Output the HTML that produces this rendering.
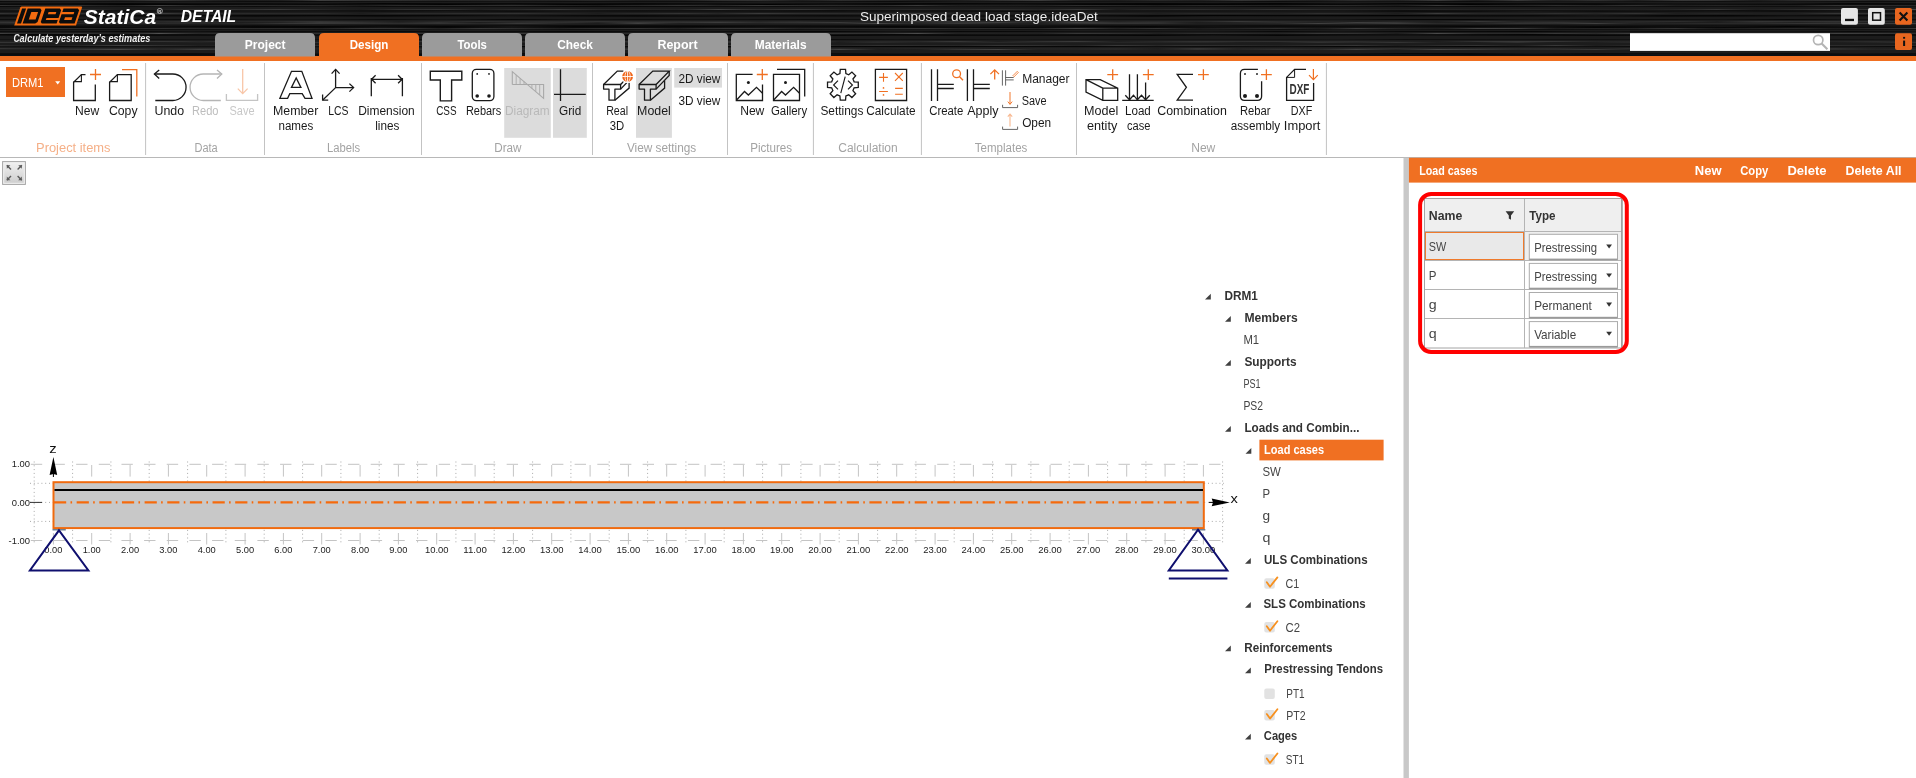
<!DOCTYPE html>
<html><head><meta charset="utf-8"><title>IDEA StatiCa Detail</title>
<style>
html,body{margin:0;padding:0;background:#ffffff;overflow:hidden;}
body{width:1916px;height:778px;position:relative;font-family:"Liberation Sans",sans-serif;}
svg{position:absolute;left:0;top:0;display:block;will-change:transform;}
</style></head><body>
<svg width="1916" height="778" viewBox="0 0 1916 778" shape-rendering="geometricPrecision">
<rect x="0" y="0" width="1916" height="56" fill="#1c1c1c"/>
<defs>
<linearGradient id="st0" x1="0" x2="1" y1="0" y2="0">
<stop offset="0.000" stop-color="rgb(66,66,66)" stop-opacity="0.74"/>
<stop offset="0.021" stop-color="rgb(83,83,83)" stop-opacity="0.03"/>
<stop offset="0.042" stop-color="rgb(79,79,79)" stop-opacity="0.78"/>
<stop offset="0.062" stop-color="rgb(65,65,65)" stop-opacity="0.65"/>
<stop offset="0.083" stop-color="rgb(60,60,60)" stop-opacity="0.11"/>
<stop offset="0.104" stop-color="rgb(80,80,80)" stop-opacity="0.87"/>
<stop offset="0.125" stop-color="rgb(74,74,74)" stop-opacity="0.54"/>
<stop offset="0.146" stop-color="rgb(65,65,65)" stop-opacity="0.01"/>
<stop offset="0.167" stop-color="rgb(63,63,63)" stop-opacity="0.41"/>
<stop offset="0.188" stop-color="rgb(61,61,61)" stop-opacity="0.92"/>
<stop offset="0.208" stop-color="rgb(74,74,74)" stop-opacity="0.16"/>
<stop offset="0.229" stop-color="rgb(54,54,54)" stop-opacity="0.14"/>
<stop offset="0.250" stop-color="rgb(78,78,78)" stop-opacity="0.13"/>
<stop offset="0.271" stop-color="rgb(50,50,50)" stop-opacity="0.97"/>
<stop offset="0.292" stop-color="rgb(50,50,50)" stop-opacity="0.21"/>
<stop offset="0.312" stop-color="rgb(63,63,63)" stop-opacity="0.96"/>
<stop offset="0.333" stop-color="rgb(60,60,60)" stop-opacity="0.87"/>
<stop offset="0.354" stop-color="rgb(68,68,68)" stop-opacity="0.31"/>
<stop offset="0.375" stop-color="rgb(62,62,62)" stop-opacity="0.54"/>
<stop offset="0.396" stop-color="rgb(63,63,63)" stop-opacity="0.18"/>
<stop offset="0.417" stop-color="rgb(62,62,62)" stop-opacity="0.97"/>
<stop offset="0.438" stop-color="rgb(74,74,74)" stop-opacity="0.30"/>
<stop offset="0.458" stop-color="rgb(73,73,73)" stop-opacity="0.41"/>
<stop offset="0.479" stop-color="rgb(59,59,59)" stop-opacity="0.26"/>
<stop offset="0.500" stop-color="rgb(71,71,71)" stop-opacity="0.30"/>
<stop offset="0.521" stop-color="rgb(50,50,50)" stop-opacity="0.60"/>
<stop offset="0.542" stop-color="rgb(71,71,71)" stop-opacity="0.07"/>
<stop offset="0.562" stop-color="rgb(72,72,72)" stop-opacity="0.82"/>
<stop offset="0.583" stop-color="rgb(80,80,80)" stop-opacity="0.70"/>
<stop offset="0.604" stop-color="rgb(61,61,61)" stop-opacity="0.48"/>
<stop offset="0.625" stop-color="rgb(61,61,61)" stop-opacity="0.06"/>
<stop offset="0.646" stop-color="rgb(51,51,51)" stop-opacity="0.95"/>
<stop offset="0.667" stop-color="rgb(72,72,72)" stop-opacity="0.84"/>
<stop offset="0.688" stop-color="rgb(51,51,51)" stop-opacity="0.55"/>
<stop offset="0.708" stop-color="rgb(76,76,76)" stop-opacity="0.37"/>
<stop offset="0.729" stop-color="rgb(50,50,50)" stop-opacity="0.45"/>
<stop offset="0.750" stop-color="rgb(61,61,61)" stop-opacity="0.62"/>
<stop offset="0.771" stop-color="rgb(62,62,62)" stop-opacity="0.12"/>
<stop offset="0.792" stop-color="rgb(65,65,65)" stop-opacity="0.93"/>
<stop offset="0.812" stop-color="rgb(79,79,79)" stop-opacity="0.34"/>
<stop offset="0.833" stop-color="rgb(72,72,72)" stop-opacity="0.89"/>
<stop offset="0.854" stop-color="rgb(66,66,66)" stop-opacity="0.78"/>
<stop offset="0.875" stop-color="rgb(56,56,56)" stop-opacity="0.59"/>
<stop offset="0.896" stop-color="rgb(73,73,73)" stop-opacity="0.86"/>
<stop offset="0.917" stop-color="rgb(52,52,52)" stop-opacity="0.43"/>
<stop offset="0.938" stop-color="rgb(55,55,55)" stop-opacity="0.21"/>
<stop offset="0.958" stop-color="rgb(82,82,82)" stop-opacity="0.61"/>
<stop offset="0.979" stop-color="rgb(59,59,59)" stop-opacity="0.34"/>
<stop offset="1.000" stop-color="rgb(84,84,84)" stop-opacity="0.09"/>
</linearGradient>
<linearGradient id="st1" x1="0" x2="1" y1="0" y2="0">
<stop offset="0.000" stop-color="rgb(70,70,70)" stop-opacity="0.31"/>
<stop offset="0.021" stop-color="rgb(55,55,55)" stop-opacity="0.63"/>
<stop offset="0.042" stop-color="rgb(69,69,69)" stop-opacity="1.00"/>
<stop offset="0.062" stop-color="rgb(60,60,60)" stop-opacity="0.72"/>
<stop offset="0.083" stop-color="rgb(55,55,55)" stop-opacity="0.99"/>
<stop offset="0.104" stop-color="rgb(84,84,84)" stop-opacity="0.92"/>
<stop offset="0.125" stop-color="rgb(52,52,52)" stop-opacity="0.24"/>
<stop offset="0.146" stop-color="rgb(72,72,72)" stop-opacity="0.83"/>
<stop offset="0.167" stop-color="rgb(79,79,79)" stop-opacity="0.65"/>
<stop offset="0.188" stop-color="rgb(59,59,59)" stop-opacity="0.06"/>
<stop offset="0.208" stop-color="rgb(52,52,52)" stop-opacity="0.80"/>
<stop offset="0.229" stop-color="rgb(71,71,71)" stop-opacity="0.84"/>
<stop offset="0.250" stop-color="rgb(58,58,58)" stop-opacity="0.98"/>
<stop offset="0.271" stop-color="rgb(58,58,58)" stop-opacity="0.63"/>
<stop offset="0.292" stop-color="rgb(76,76,76)" stop-opacity="0.11"/>
<stop offset="0.312" stop-color="rgb(77,77,77)" stop-opacity="0.37"/>
<stop offset="0.333" stop-color="rgb(53,53,53)" stop-opacity="0.84"/>
<stop offset="0.354" stop-color="rgb(68,68,68)" stop-opacity="0.14"/>
<stop offset="0.375" stop-color="rgb(60,60,60)" stop-opacity="0.98"/>
<stop offset="0.396" stop-color="rgb(79,79,79)" stop-opacity="0.96"/>
<stop offset="0.417" stop-color="rgb(70,70,70)" stop-opacity="0.48"/>
<stop offset="0.438" stop-color="rgb(68,68,68)" stop-opacity="0.47"/>
<stop offset="0.458" stop-color="rgb(59,59,59)" stop-opacity="0.11"/>
<stop offset="0.479" stop-color="rgb(84,84,84)" stop-opacity="0.96"/>
<stop offset="0.500" stop-color="rgb(81,81,81)" stop-opacity="0.87"/>
<stop offset="0.521" stop-color="rgb(61,61,61)" stop-opacity="0.09"/>
<stop offset="0.542" stop-color="rgb(67,67,67)" stop-opacity="0.52"/>
<stop offset="0.562" stop-color="rgb(85,85,85)" stop-opacity="0.87"/>
<stop offset="0.583" stop-color="rgb(73,73,73)" stop-opacity="0.06"/>
<stop offset="0.604" stop-color="rgb(72,72,72)" stop-opacity="0.69"/>
<stop offset="0.625" stop-color="rgb(52,52,52)" stop-opacity="0.76"/>
<stop offset="0.646" stop-color="rgb(73,73,73)" stop-opacity="0.56"/>
<stop offset="0.667" stop-color="rgb(67,67,67)" stop-opacity="0.84"/>
<stop offset="0.688" stop-color="rgb(66,66,66)" stop-opacity="0.77"/>
<stop offset="0.708" stop-color="rgb(68,68,68)" stop-opacity="0.96"/>
<stop offset="0.729" stop-color="rgb(71,71,71)" stop-opacity="0.65"/>
<stop offset="0.750" stop-color="rgb(50,50,50)" stop-opacity="0.47"/>
<stop offset="0.771" stop-color="rgb(66,66,66)" stop-opacity="0.33"/>
<stop offset="0.792" stop-color="rgb(67,67,67)" stop-opacity="0.46"/>
<stop offset="0.812" stop-color="rgb(82,82,82)" stop-opacity="0.65"/>
<stop offset="0.833" stop-color="rgb(72,72,72)" stop-opacity="0.35"/>
<stop offset="0.854" stop-color="rgb(72,72,72)" stop-opacity="0.74"/>
<stop offset="0.875" stop-color="rgb(76,76,76)" stop-opacity="0.35"/>
<stop offset="0.896" stop-color="rgb(61,61,61)" stop-opacity="0.87"/>
<stop offset="0.917" stop-color="rgb(78,78,78)" stop-opacity="0.98"/>
<stop offset="0.938" stop-color="rgb(71,71,71)" stop-opacity="0.52"/>
<stop offset="0.958" stop-color="rgb(83,83,83)" stop-opacity="0.98"/>
<stop offset="0.979" stop-color="rgb(62,62,62)" stop-opacity="0.84"/>
<stop offset="1.000" stop-color="rgb(80,80,80)" stop-opacity="0.28"/>
</linearGradient>
<linearGradient id="st2" x1="0" x2="1" y1="0" y2="0">
<stop offset="0.000" stop-color="rgb(55,55,55)" stop-opacity="0.72"/>
<stop offset="0.021" stop-color="rgb(76,76,76)" stop-opacity="0.17"/>
<stop offset="0.042" stop-color="rgb(83,83,83)" stop-opacity="0.67"/>
<stop offset="0.062" stop-color="rgb(76,76,76)" stop-opacity="0.30"/>
<stop offset="0.083" stop-color="rgb(85,85,85)" stop-opacity="0.77"/>
<stop offset="0.104" stop-color="rgb(67,67,67)" stop-opacity="0.72"/>
<stop offset="0.125" stop-color="rgb(51,51,51)" stop-opacity="0.20"/>
<stop offset="0.146" stop-color="rgb(78,78,78)" stop-opacity="0.62"/>
<stop offset="0.167" stop-color="rgb(61,61,61)" stop-opacity="0.22"/>
<stop offset="0.188" stop-color="rgb(61,61,61)" stop-opacity="0.63"/>
<stop offset="0.208" stop-color="rgb(52,52,52)" stop-opacity="0.99"/>
<stop offset="0.229" stop-color="rgb(64,64,64)" stop-opacity="0.17"/>
<stop offset="0.250" stop-color="rgb(58,58,58)" stop-opacity="0.11"/>
<stop offset="0.271" stop-color="rgb(61,61,61)" stop-opacity="0.48"/>
<stop offset="0.292" stop-color="rgb(85,85,85)" stop-opacity="0.04"/>
<stop offset="0.312" stop-color="rgb(79,79,79)" stop-opacity="0.35"/>
<stop offset="0.333" stop-color="rgb(54,54,54)" stop-opacity="0.59"/>
<stop offset="0.354" stop-color="rgb(65,65,65)" stop-opacity="0.72"/>
<stop offset="0.375" stop-color="rgb(73,73,73)" stop-opacity="0.00"/>
<stop offset="0.396" stop-color="rgb(75,75,75)" stop-opacity="0.95"/>
<stop offset="0.417" stop-color="rgb(76,76,76)" stop-opacity="0.87"/>
<stop offset="0.438" stop-color="rgb(85,85,85)" stop-opacity="0.37"/>
<stop offset="0.458" stop-color="rgb(52,52,52)" stop-opacity="0.55"/>
<stop offset="0.479" stop-color="rgb(69,69,69)" stop-opacity="0.09"/>
<stop offset="0.500" stop-color="rgb(84,84,84)" stop-opacity="0.51"/>
<stop offset="0.521" stop-color="rgb(68,68,68)" stop-opacity="0.96"/>
<stop offset="0.542" stop-color="rgb(58,58,58)" stop-opacity="0.42"/>
<stop offset="0.562" stop-color="rgb(84,84,84)" stop-opacity="0.37"/>
<stop offset="0.583" stop-color="rgb(59,59,59)" stop-opacity="0.16"/>
<stop offset="0.604" stop-color="rgb(74,74,74)" stop-opacity="0.56"/>
<stop offset="0.625" stop-color="rgb(62,62,62)" stop-opacity="0.97"/>
<stop offset="0.646" stop-color="rgb(55,55,55)" stop-opacity="0.35"/>
<stop offset="0.667" stop-color="rgb(50,50,50)" stop-opacity="0.38"/>
<stop offset="0.688" stop-color="rgb(70,70,70)" stop-opacity="0.57"/>
<stop offset="0.708" stop-color="rgb(84,84,84)" stop-opacity="0.14"/>
<stop offset="0.729" stop-color="rgb(74,74,74)" stop-opacity="0.43"/>
<stop offset="0.750" stop-color="rgb(64,64,64)" stop-opacity="0.49"/>
<stop offset="0.771" stop-color="rgb(80,80,80)" stop-opacity="0.97"/>
<stop offset="0.792" stop-color="rgb(74,74,74)" stop-opacity="0.38"/>
<stop offset="0.812" stop-color="rgb(60,60,60)" stop-opacity="0.60"/>
<stop offset="0.833" stop-color="rgb(66,66,66)" stop-opacity="0.74"/>
<stop offset="0.854" stop-color="rgb(69,69,69)" stop-opacity="0.50"/>
<stop offset="0.875" stop-color="rgb(76,76,76)" stop-opacity="0.02"/>
<stop offset="0.896" stop-color="rgb(69,69,69)" stop-opacity="0.49"/>
<stop offset="0.917" stop-color="rgb(68,68,68)" stop-opacity="0.14"/>
<stop offset="0.938" stop-color="rgb(51,51,51)" stop-opacity="0.12"/>
<stop offset="0.958" stop-color="rgb(78,78,78)" stop-opacity="0.25"/>
<stop offset="0.979" stop-color="rgb(52,52,52)" stop-opacity="0.78"/>
<stop offset="1.000" stop-color="rgb(75,75,75)" stop-opacity="0.01"/>
</linearGradient>
<linearGradient id="st3" x1="0" x2="1" y1="0" y2="0">
<stop offset="0.000" stop-color="rgb(84,84,84)" stop-opacity="0.56"/>
<stop offset="0.021" stop-color="rgb(65,65,65)" stop-opacity="0.94"/>
<stop offset="0.042" stop-color="rgb(52,52,52)" stop-opacity="0.25"/>
<stop offset="0.062" stop-color="rgb(67,67,67)" stop-opacity="0.84"/>
<stop offset="0.083" stop-color="rgb(68,68,68)" stop-opacity="0.29"/>
<stop offset="0.104" stop-color="rgb(80,80,80)" stop-opacity="0.52"/>
<stop offset="0.125" stop-color="rgb(57,57,57)" stop-opacity="0.02"/>
<stop offset="0.146" stop-color="rgb(58,58,58)" stop-opacity="0.30"/>
<stop offset="0.167" stop-color="rgb(84,84,84)" stop-opacity="0.71"/>
<stop offset="0.188" stop-color="rgb(68,68,68)" stop-opacity="0.73"/>
<stop offset="0.208" stop-color="rgb(51,51,51)" stop-opacity="0.46"/>
<stop offset="0.229" stop-color="rgb(73,73,73)" stop-opacity="0.68"/>
<stop offset="0.250" stop-color="rgb(58,58,58)" stop-opacity="0.04"/>
<stop offset="0.271" stop-color="rgb(66,66,66)" stop-opacity="0.55"/>
<stop offset="0.292" stop-color="rgb(56,56,56)" stop-opacity="0.89"/>
<stop offset="0.312" stop-color="rgb(84,84,84)" stop-opacity="0.19"/>
<stop offset="0.333" stop-color="rgb(77,77,77)" stop-opacity="0.78"/>
<stop offset="0.354" stop-color="rgb(77,77,77)" stop-opacity="0.59"/>
<stop offset="0.375" stop-color="rgb(80,80,80)" stop-opacity="0.86"/>
<stop offset="0.396" stop-color="rgb(74,74,74)" stop-opacity="0.48"/>
<stop offset="0.417" stop-color="rgb(62,62,62)" stop-opacity="0.90"/>
<stop offset="0.438" stop-color="rgb(79,79,79)" stop-opacity="0.83"/>
<stop offset="0.458" stop-color="rgb(54,54,54)" stop-opacity="0.30"/>
<stop offset="0.479" stop-color="rgb(50,50,50)" stop-opacity="0.69"/>
<stop offset="0.500" stop-color="rgb(77,77,77)" stop-opacity="0.58"/>
<stop offset="0.521" stop-color="rgb(80,80,80)" stop-opacity="0.91"/>
<stop offset="0.542" stop-color="rgb(59,59,59)" stop-opacity="0.17"/>
<stop offset="0.562" stop-color="rgb(85,85,85)" stop-opacity="0.89"/>
<stop offset="0.583" stop-color="rgb(71,71,71)" stop-opacity="0.54"/>
<stop offset="0.604" stop-color="rgb(77,77,77)" stop-opacity="0.59"/>
<stop offset="0.625" stop-color="rgb(53,53,53)" stop-opacity="0.07"/>
<stop offset="0.646" stop-color="rgb(64,64,64)" stop-opacity="0.27"/>
<stop offset="0.667" stop-color="rgb(55,55,55)" stop-opacity="0.79"/>
<stop offset="0.688" stop-color="rgb(51,51,51)" stop-opacity="0.33"/>
<stop offset="0.708" stop-color="rgb(77,77,77)" stop-opacity="0.98"/>
<stop offset="0.729" stop-color="rgb(75,75,75)" stop-opacity="0.70"/>
<stop offset="0.750" stop-color="rgb(53,53,53)" stop-opacity="0.12"/>
<stop offset="0.771" stop-color="rgb(57,57,57)" stop-opacity="0.22"/>
<stop offset="0.792" stop-color="rgb(57,57,57)" stop-opacity="0.71"/>
<stop offset="0.812" stop-color="rgb(58,58,58)" stop-opacity="0.99"/>
<stop offset="0.833" stop-color="rgb(78,78,78)" stop-opacity="0.15"/>
<stop offset="0.854" stop-color="rgb(61,61,61)" stop-opacity="0.41"/>
<stop offset="0.875" stop-color="rgb(60,60,60)" stop-opacity="0.07"/>
<stop offset="0.896" stop-color="rgb(63,63,63)" stop-opacity="0.04"/>
<stop offset="0.917" stop-color="rgb(56,56,56)" stop-opacity="0.66"/>
<stop offset="0.938" stop-color="rgb(54,54,54)" stop-opacity="0.28"/>
<stop offset="0.958" stop-color="rgb(57,57,57)" stop-opacity="0.74"/>
<stop offset="0.979" stop-color="rgb(58,58,58)" stop-opacity="0.01"/>
<stop offset="1.000" stop-color="rgb(55,55,55)" stop-opacity="0.31"/>
</linearGradient>
<linearGradient id="st4" x1="0" x2="1" y1="0" y2="0">
<stop offset="0.000" stop-color="rgb(81,81,81)" stop-opacity="0.49"/>
<stop offset="0.021" stop-color="rgb(73,73,73)" stop-opacity="0.91"/>
<stop offset="0.042" stop-color="rgb(58,58,58)" stop-opacity="0.70"/>
<stop offset="0.062" stop-color="rgb(59,59,59)" stop-opacity="0.57"/>
<stop offset="0.083" stop-color="rgb(82,82,82)" stop-opacity="0.29"/>
<stop offset="0.104" stop-color="rgb(85,85,85)" stop-opacity="0.55"/>
<stop offset="0.125" stop-color="rgb(64,64,64)" stop-opacity="0.26"/>
<stop offset="0.146" stop-color="rgb(85,85,85)" stop-opacity="0.24"/>
<stop offset="0.167" stop-color="rgb(68,68,68)" stop-opacity="0.52"/>
<stop offset="0.188" stop-color="rgb(58,58,58)" stop-opacity="0.81"/>
<stop offset="0.208" stop-color="rgb(73,73,73)" stop-opacity="0.45"/>
<stop offset="0.229" stop-color="rgb(74,74,74)" stop-opacity="0.18"/>
<stop offset="0.250" stop-color="rgb(51,51,51)" stop-opacity="0.66"/>
<stop offset="0.271" stop-color="rgb(55,55,55)" stop-opacity="0.57"/>
<stop offset="0.292" stop-color="rgb(52,52,52)" stop-opacity="0.09"/>
<stop offset="0.312" stop-color="rgb(57,57,57)" stop-opacity="0.51"/>
<stop offset="0.333" stop-color="rgb(79,79,79)" stop-opacity="0.24"/>
<stop offset="0.354" stop-color="rgb(79,79,79)" stop-opacity="0.48"/>
<stop offset="0.375" stop-color="rgb(70,70,70)" stop-opacity="0.11"/>
<stop offset="0.396" stop-color="rgb(83,83,83)" stop-opacity="0.03"/>
<stop offset="0.417" stop-color="rgb(74,74,74)" stop-opacity="0.05"/>
<stop offset="0.438" stop-color="rgb(59,59,59)" stop-opacity="0.94"/>
<stop offset="0.458" stop-color="rgb(77,77,77)" stop-opacity="0.68"/>
<stop offset="0.479" stop-color="rgb(64,64,64)" stop-opacity="0.75"/>
<stop offset="0.500" stop-color="rgb(55,55,55)" stop-opacity="0.97"/>
<stop offset="0.521" stop-color="rgb(81,81,81)" stop-opacity="0.82"/>
<stop offset="0.542" stop-color="rgb(58,58,58)" stop-opacity="0.70"/>
<stop offset="0.562" stop-color="rgb(74,74,74)" stop-opacity="0.35"/>
<stop offset="0.583" stop-color="rgb(65,65,65)" stop-opacity="0.29"/>
<stop offset="0.604" stop-color="rgb(72,72,72)" stop-opacity="0.80"/>
<stop offset="0.625" stop-color="rgb(74,74,74)" stop-opacity="0.14"/>
<stop offset="0.646" stop-color="rgb(72,72,72)" stop-opacity="0.65"/>
<stop offset="0.667" stop-color="rgb(77,77,77)" stop-opacity="0.96"/>
<stop offset="0.688" stop-color="rgb(73,73,73)" stop-opacity="0.52"/>
<stop offset="0.708" stop-color="rgb(63,63,63)" stop-opacity="0.74"/>
<stop offset="0.729" stop-color="rgb(75,75,75)" stop-opacity="0.06"/>
<stop offset="0.750" stop-color="rgb(52,52,52)" stop-opacity="0.03"/>
<stop offset="0.771" stop-color="rgb(62,62,62)" stop-opacity="0.20"/>
<stop offset="0.792" stop-color="rgb(81,81,81)" stop-opacity="0.89"/>
<stop offset="0.812" stop-color="rgb(80,80,80)" stop-opacity="0.66"/>
<stop offset="0.833" stop-color="rgb(72,72,72)" stop-opacity="0.00"/>
<stop offset="0.854" stop-color="rgb(80,80,80)" stop-opacity="0.30"/>
<stop offset="0.875" stop-color="rgb(77,77,77)" stop-opacity="0.32"/>
<stop offset="0.896" stop-color="rgb(79,79,79)" stop-opacity="0.10"/>
<stop offset="0.917" stop-color="rgb(59,59,59)" stop-opacity="0.65"/>
<stop offset="0.938" stop-color="rgb(54,54,54)" stop-opacity="0.37"/>
<stop offset="0.958" stop-color="rgb(74,74,74)" stop-opacity="0.87"/>
<stop offset="0.979" stop-color="rgb(80,80,80)" stop-opacity="0.15"/>
<stop offset="1.000" stop-color="rgb(66,66,66)" stop-opacity="0.11"/>
</linearGradient>
<linearGradient id="st5" x1="0" x2="1" y1="0" y2="0">
<stop offset="0.000" stop-color="rgb(60,60,60)" stop-opacity="0.75"/>
<stop offset="0.021" stop-color="rgb(65,65,65)" stop-opacity="0.03"/>
<stop offset="0.042" stop-color="rgb(52,52,52)" stop-opacity="0.34"/>
<stop offset="0.062" stop-color="rgb(73,73,73)" stop-opacity="0.32"/>
<stop offset="0.083" stop-color="rgb(53,53,53)" stop-opacity="0.69"/>
<stop offset="0.104" stop-color="rgb(79,79,79)" stop-opacity="0.47"/>
<stop offset="0.125" stop-color="rgb(59,59,59)" stop-opacity="0.12"/>
<stop offset="0.146" stop-color="rgb(70,70,70)" stop-opacity="0.29"/>
<stop offset="0.167" stop-color="rgb(65,65,65)" stop-opacity="0.73"/>
<stop offset="0.188" stop-color="rgb(60,60,60)" stop-opacity="0.03"/>
<stop offset="0.208" stop-color="rgb(51,51,51)" stop-opacity="0.57"/>
<stop offset="0.229" stop-color="rgb(55,55,55)" stop-opacity="0.62"/>
<stop offset="0.250" stop-color="rgb(73,73,73)" stop-opacity="0.68"/>
<stop offset="0.271" stop-color="rgb(61,61,61)" stop-opacity="0.47"/>
<stop offset="0.292" stop-color="rgb(68,68,68)" stop-opacity="0.07"/>
<stop offset="0.312" stop-color="rgb(79,79,79)" stop-opacity="0.16"/>
<stop offset="0.333" stop-color="rgb(65,65,65)" stop-opacity="0.18"/>
<stop offset="0.354" stop-color="rgb(63,63,63)" stop-opacity="0.94"/>
<stop offset="0.375" stop-color="rgb(77,77,77)" stop-opacity="0.73"/>
<stop offset="0.396" stop-color="rgb(67,67,67)" stop-opacity="0.01"/>
<stop offset="0.417" stop-color="rgb(53,53,53)" stop-opacity="0.45"/>
<stop offset="0.438" stop-color="rgb(76,76,76)" stop-opacity="0.17"/>
<stop offset="0.458" stop-color="rgb(52,52,52)" stop-opacity="0.55"/>
<stop offset="0.479" stop-color="rgb(83,83,83)" stop-opacity="0.57"/>
<stop offset="0.500" stop-color="rgb(56,56,56)" stop-opacity="0.72"/>
<stop offset="0.521" stop-color="rgb(65,65,65)" stop-opacity="0.90"/>
<stop offset="0.542" stop-color="rgb(81,81,81)" stop-opacity="0.09"/>
<stop offset="0.562" stop-color="rgb(80,80,80)" stop-opacity="0.05"/>
<stop offset="0.583" stop-color="rgb(65,65,65)" stop-opacity="0.64"/>
<stop offset="0.604" stop-color="rgb(81,81,81)" stop-opacity="0.40"/>
<stop offset="0.625" stop-color="rgb(53,53,53)" stop-opacity="0.05"/>
<stop offset="0.646" stop-color="rgb(76,76,76)" stop-opacity="0.45"/>
<stop offset="0.667" stop-color="rgb(53,53,53)" stop-opacity="0.88"/>
<stop offset="0.688" stop-color="rgb(62,62,62)" stop-opacity="0.18"/>
<stop offset="0.708" stop-color="rgb(82,82,82)" stop-opacity="0.64"/>
<stop offset="0.729" stop-color="rgb(62,62,62)" stop-opacity="0.53"/>
<stop offset="0.750" stop-color="rgb(55,55,55)" stop-opacity="0.93"/>
<stop offset="0.771" stop-color="rgb(56,56,56)" stop-opacity="0.09"/>
<stop offset="0.792" stop-color="rgb(60,60,60)" stop-opacity="0.60"/>
<stop offset="0.812" stop-color="rgb(63,63,63)" stop-opacity="0.62"/>
<stop offset="0.833" stop-color="rgb(78,78,78)" stop-opacity="0.54"/>
<stop offset="0.854" stop-color="rgb(81,81,81)" stop-opacity="0.42"/>
<stop offset="0.875" stop-color="rgb(74,74,74)" stop-opacity="0.52"/>
<stop offset="0.896" stop-color="rgb(58,58,58)" stop-opacity="0.73"/>
<stop offset="0.917" stop-color="rgb(69,69,69)" stop-opacity="0.69"/>
<stop offset="0.938" stop-color="rgb(64,64,64)" stop-opacity="0.55"/>
<stop offset="0.958" stop-color="rgb(58,58,58)" stop-opacity="0.31"/>
<stop offset="0.979" stop-color="rgb(55,55,55)" stop-opacity="0.78"/>
<stop offset="1.000" stop-color="rgb(66,66,66)" stop-opacity="0.82"/>
</linearGradient>
<linearGradient id="st6" x1="0" x2="1" y1="0" y2="0">
<stop offset="0.000" stop-color="rgb(70,70,70)" stop-opacity="0.13"/>
<stop offset="0.021" stop-color="rgb(84,84,84)" stop-opacity="0.08"/>
<stop offset="0.042" stop-color="rgb(65,65,65)" stop-opacity="0.70"/>
<stop offset="0.062" stop-color="rgb(77,77,77)" stop-opacity="0.97"/>
<stop offset="0.083" stop-color="rgb(65,65,65)" stop-opacity="0.28"/>
<stop offset="0.104" stop-color="rgb(81,81,81)" stop-opacity="0.70"/>
<stop offset="0.125" stop-color="rgb(53,53,53)" stop-opacity="0.70"/>
<stop offset="0.146" stop-color="rgb(68,68,68)" stop-opacity="0.88"/>
<stop offset="0.167" stop-color="rgb(56,56,56)" stop-opacity="0.07"/>
<stop offset="0.188" stop-color="rgb(70,70,70)" stop-opacity="0.38"/>
<stop offset="0.208" stop-color="rgb(85,85,85)" stop-opacity="0.00"/>
<stop offset="0.229" stop-color="rgb(68,68,68)" stop-opacity="0.65"/>
<stop offset="0.250" stop-color="rgb(58,58,58)" stop-opacity="0.57"/>
<stop offset="0.271" stop-color="rgb(78,78,78)" stop-opacity="0.14"/>
<stop offset="0.292" stop-color="rgb(51,51,51)" stop-opacity="0.73"/>
<stop offset="0.312" stop-color="rgb(77,77,77)" stop-opacity="0.27"/>
<stop offset="0.333" stop-color="rgb(74,74,74)" stop-opacity="0.56"/>
<stop offset="0.354" stop-color="rgb(70,70,70)" stop-opacity="0.07"/>
<stop offset="0.375" stop-color="rgb(60,60,60)" stop-opacity="0.14"/>
<stop offset="0.396" stop-color="rgb(81,81,81)" stop-opacity="0.68"/>
<stop offset="0.417" stop-color="rgb(68,68,68)" stop-opacity="0.03"/>
<stop offset="0.438" stop-color="rgb(84,84,84)" stop-opacity="0.76"/>
<stop offset="0.458" stop-color="rgb(85,85,85)" stop-opacity="0.03"/>
<stop offset="0.479" stop-color="rgb(57,57,57)" stop-opacity="0.05"/>
<stop offset="0.500" stop-color="rgb(58,58,58)" stop-opacity="0.83"/>
<stop offset="0.521" stop-color="rgb(77,77,77)" stop-opacity="0.86"/>
<stop offset="0.542" stop-color="rgb(51,51,51)" stop-opacity="0.23"/>
<stop offset="0.562" stop-color="rgb(77,77,77)" stop-opacity="0.13"/>
<stop offset="0.583" stop-color="rgb(62,62,62)" stop-opacity="0.33"/>
<stop offset="0.604" stop-color="rgb(50,50,50)" stop-opacity="0.16"/>
<stop offset="0.625" stop-color="rgb(60,60,60)" stop-opacity="0.73"/>
<stop offset="0.646" stop-color="rgb(56,56,56)" stop-opacity="0.27"/>
<stop offset="0.667" stop-color="rgb(60,60,60)" stop-opacity="0.63"/>
<stop offset="0.688" stop-color="rgb(59,59,59)" stop-opacity="0.45"/>
<stop offset="0.708" stop-color="rgb(77,77,77)" stop-opacity="0.79"/>
<stop offset="0.729" stop-color="rgb(57,57,57)" stop-opacity="0.33"/>
<stop offset="0.750" stop-color="rgb(78,78,78)" stop-opacity="0.91"/>
<stop offset="0.771" stop-color="rgb(79,79,79)" stop-opacity="0.60"/>
<stop offset="0.792" stop-color="rgb(60,60,60)" stop-opacity="0.44"/>
<stop offset="0.812" stop-color="rgb(60,60,60)" stop-opacity="0.53"/>
<stop offset="0.833" stop-color="rgb(81,81,81)" stop-opacity="0.60"/>
<stop offset="0.854" stop-color="rgb(56,56,56)" stop-opacity="0.13"/>
<stop offset="0.875" stop-color="rgb(76,76,76)" stop-opacity="0.69"/>
<stop offset="0.896" stop-color="rgb(63,63,63)" stop-opacity="0.98"/>
<stop offset="0.917" stop-color="rgb(52,52,52)" stop-opacity="0.91"/>
<stop offset="0.938" stop-color="rgb(65,65,65)" stop-opacity="0.48"/>
<stop offset="0.958" stop-color="rgb(72,72,72)" stop-opacity="0.39"/>
<stop offset="0.979" stop-color="rgb(63,63,63)" stop-opacity="0.20"/>
<stop offset="1.000" stop-color="rgb(62,62,62)" stop-opacity="0.30"/>
</linearGradient>
<linearGradient id="st7" x1="0" x2="1" y1="0" y2="0">
<stop offset="0.000" stop-color="rgb(83,83,83)" stop-opacity="0.36"/>
<stop offset="0.021" stop-color="rgb(65,65,65)" stop-opacity="0.37"/>
<stop offset="0.042" stop-color="rgb(65,65,65)" stop-opacity="0.81"/>
<stop offset="0.062" stop-color="rgb(53,53,53)" stop-opacity="0.62"/>
<stop offset="0.083" stop-color="rgb(75,75,75)" stop-opacity="0.35"/>
<stop offset="0.104" stop-color="rgb(59,59,59)" stop-opacity="0.83"/>
<stop offset="0.125" stop-color="rgb(81,81,81)" stop-opacity="0.38"/>
<stop offset="0.146" stop-color="rgb(56,56,56)" stop-opacity="0.17"/>
<stop offset="0.167" stop-color="rgb(56,56,56)" stop-opacity="0.75"/>
<stop offset="0.188" stop-color="rgb(68,68,68)" stop-opacity="0.90"/>
<stop offset="0.208" stop-color="rgb(62,62,62)" stop-opacity="0.80"/>
<stop offset="0.229" stop-color="rgb(70,70,70)" stop-opacity="0.48"/>
<stop offset="0.250" stop-color="rgb(80,80,80)" stop-opacity="0.86"/>
<stop offset="0.271" stop-color="rgb(55,55,55)" stop-opacity="0.80"/>
<stop offset="0.292" stop-color="rgb(74,74,74)" stop-opacity="0.69"/>
<stop offset="0.312" stop-color="rgb(56,56,56)" stop-opacity="0.51"/>
<stop offset="0.333" stop-color="rgb(61,61,61)" stop-opacity="0.81"/>
<stop offset="0.354" stop-color="rgb(51,51,51)" stop-opacity="0.32"/>
<stop offset="0.375" stop-color="rgb(51,51,51)" stop-opacity="0.61"/>
<stop offset="0.396" stop-color="rgb(82,82,82)" stop-opacity="0.38"/>
<stop offset="0.417" stop-color="rgb(80,80,80)" stop-opacity="0.55"/>
<stop offset="0.438" stop-color="rgb(75,75,75)" stop-opacity="0.45"/>
<stop offset="0.458" stop-color="rgb(85,85,85)" stop-opacity="0.67"/>
<stop offset="0.479" stop-color="rgb(84,84,84)" stop-opacity="0.15"/>
<stop offset="0.500" stop-color="rgb(76,76,76)" stop-opacity="0.36"/>
<stop offset="0.521" stop-color="rgb(51,51,51)" stop-opacity="0.68"/>
<stop offset="0.542" stop-color="rgb(83,83,83)" stop-opacity="0.21"/>
<stop offset="0.562" stop-color="rgb(68,68,68)" stop-opacity="0.08"/>
<stop offset="0.583" stop-color="rgb(55,55,55)" stop-opacity="0.77"/>
<stop offset="0.604" stop-color="rgb(76,76,76)" stop-opacity="0.31"/>
<stop offset="0.625" stop-color="rgb(50,50,50)" stop-opacity="0.27"/>
<stop offset="0.646" stop-color="rgb(65,65,65)" stop-opacity="0.07"/>
<stop offset="0.667" stop-color="rgb(55,55,55)" stop-opacity="0.67"/>
<stop offset="0.688" stop-color="rgb(69,69,69)" stop-opacity="0.90"/>
<stop offset="0.708" stop-color="rgb(85,85,85)" stop-opacity="0.21"/>
<stop offset="0.729" stop-color="rgb(83,83,83)" stop-opacity="0.09"/>
<stop offset="0.750" stop-color="rgb(57,57,57)" stop-opacity="0.24"/>
<stop offset="0.771" stop-color="rgb(84,84,84)" stop-opacity="0.42"/>
<stop offset="0.792" stop-color="rgb(50,50,50)" stop-opacity="0.67"/>
<stop offset="0.812" stop-color="rgb(74,74,74)" stop-opacity="0.18"/>
<stop offset="0.833" stop-color="rgb(83,83,83)" stop-opacity="0.90"/>
<stop offset="0.854" stop-color="rgb(70,70,70)" stop-opacity="0.39"/>
<stop offset="0.875" stop-color="rgb(56,56,56)" stop-opacity="0.84"/>
<stop offset="0.896" stop-color="rgb(85,85,85)" stop-opacity="0.69"/>
<stop offset="0.917" stop-color="rgb(73,73,73)" stop-opacity="0.25"/>
<stop offset="0.938" stop-color="rgb(56,56,56)" stop-opacity="0.21"/>
<stop offset="0.958" stop-color="rgb(69,69,69)" stop-opacity="0.80"/>
<stop offset="0.979" stop-color="rgb(54,54,54)" stop-opacity="0.90"/>
<stop offset="1.000" stop-color="rgb(60,60,60)" stop-opacity="0.08"/>
</linearGradient>
<linearGradient id="st8" x1="0" x2="1" y1="0" y2="0">
<stop offset="0.000" stop-color="rgb(76,76,76)" stop-opacity="0.77"/>
<stop offset="0.021" stop-color="rgb(64,64,64)" stop-opacity="0.66"/>
<stop offset="0.042" stop-color="rgb(84,84,84)" stop-opacity="0.73"/>
<stop offset="0.062" stop-color="rgb(76,76,76)" stop-opacity="0.23"/>
<stop offset="0.083" stop-color="rgb(80,80,80)" stop-opacity="0.53"/>
<stop offset="0.104" stop-color="rgb(65,65,65)" stop-opacity="0.30"/>
<stop offset="0.125" stop-color="rgb(67,67,67)" stop-opacity="0.08"/>
<stop offset="0.146" stop-color="rgb(71,71,71)" stop-opacity="0.19"/>
<stop offset="0.167" stop-color="rgb(51,51,51)" stop-opacity="0.15"/>
<stop offset="0.188" stop-color="rgb(68,68,68)" stop-opacity="0.56"/>
<stop offset="0.208" stop-color="rgb(61,61,61)" stop-opacity="0.43"/>
<stop offset="0.229" stop-color="rgb(70,70,70)" stop-opacity="0.59"/>
<stop offset="0.250" stop-color="rgb(71,71,71)" stop-opacity="0.73"/>
<stop offset="0.271" stop-color="rgb(53,53,53)" stop-opacity="0.95"/>
<stop offset="0.292" stop-color="rgb(58,58,58)" stop-opacity="0.83"/>
<stop offset="0.312" stop-color="rgb(54,54,54)" stop-opacity="0.32"/>
<stop offset="0.333" stop-color="rgb(79,79,79)" stop-opacity="0.65"/>
<stop offset="0.354" stop-color="rgb(64,64,64)" stop-opacity="0.89"/>
<stop offset="0.375" stop-color="rgb(80,80,80)" stop-opacity="0.84"/>
<stop offset="0.396" stop-color="rgb(50,50,50)" stop-opacity="0.19"/>
<stop offset="0.417" stop-color="rgb(60,60,60)" stop-opacity="0.11"/>
<stop offset="0.438" stop-color="rgb(71,71,71)" stop-opacity="0.15"/>
<stop offset="0.458" stop-color="rgb(56,56,56)" stop-opacity="0.57"/>
<stop offset="0.479" stop-color="rgb(78,78,78)" stop-opacity="0.74"/>
<stop offset="0.500" stop-color="rgb(61,61,61)" stop-opacity="0.71"/>
<stop offset="0.521" stop-color="rgb(85,85,85)" stop-opacity="0.96"/>
<stop offset="0.542" stop-color="rgb(56,56,56)" stop-opacity="0.37"/>
<stop offset="0.562" stop-color="rgb(54,54,54)" stop-opacity="0.20"/>
<stop offset="0.583" stop-color="rgb(70,70,70)" stop-opacity="0.37"/>
<stop offset="0.604" stop-color="rgb(79,79,79)" stop-opacity="0.89"/>
<stop offset="0.625" stop-color="rgb(55,55,55)" stop-opacity="0.25"/>
<stop offset="0.646" stop-color="rgb(84,84,84)" stop-opacity="0.47"/>
<stop offset="0.667" stop-color="rgb(50,50,50)" stop-opacity="0.12"/>
<stop offset="0.688" stop-color="rgb(73,73,73)" stop-opacity="0.13"/>
<stop offset="0.708" stop-color="rgb(50,50,50)" stop-opacity="0.50"/>
<stop offset="0.729" stop-color="rgb(71,71,71)" stop-opacity="0.95"/>
<stop offset="0.750" stop-color="rgb(54,54,54)" stop-opacity="0.49"/>
<stop offset="0.771" stop-color="rgb(68,68,68)" stop-opacity="0.02"/>
<stop offset="0.792" stop-color="rgb(80,80,80)" stop-opacity="1.00"/>
<stop offset="0.812" stop-color="rgb(62,62,62)" stop-opacity="0.92"/>
<stop offset="0.833" stop-color="rgb(74,74,74)" stop-opacity="0.14"/>
<stop offset="0.854" stop-color="rgb(81,81,81)" stop-opacity="0.64"/>
<stop offset="0.875" stop-color="rgb(55,55,55)" stop-opacity="0.58"/>
<stop offset="0.896" stop-color="rgb(68,68,68)" stop-opacity="0.41"/>
<stop offset="0.917" stop-color="rgb(54,54,54)" stop-opacity="0.52"/>
<stop offset="0.938" stop-color="rgb(53,53,53)" stop-opacity="0.22"/>
<stop offset="0.958" stop-color="rgb(65,65,65)" stop-opacity="0.27"/>
<stop offset="0.979" stop-color="rgb(54,54,54)" stop-opacity="0.15"/>
<stop offset="1.000" stop-color="rgb(56,56,56)" stop-opacity="0.55"/>
</linearGradient>
<linearGradient id="st9" x1="0" x2="1" y1="0" y2="0">
<stop offset="0.000" stop-color="rgb(77,77,77)" stop-opacity="0.98"/>
<stop offset="0.021" stop-color="rgb(84,84,84)" stop-opacity="0.84"/>
<stop offset="0.042" stop-color="rgb(65,65,65)" stop-opacity="0.09"/>
<stop offset="0.062" stop-color="rgb(72,72,72)" stop-opacity="0.13"/>
<stop offset="0.083" stop-color="rgb(55,55,55)" stop-opacity="0.01"/>
<stop offset="0.104" stop-color="rgb(59,59,59)" stop-opacity="0.36"/>
<stop offset="0.125" stop-color="rgb(51,51,51)" stop-opacity="0.02"/>
<stop offset="0.146" stop-color="rgb(85,85,85)" stop-opacity="0.46"/>
<stop offset="0.167" stop-color="rgb(74,74,74)" stop-opacity="0.87"/>
<stop offset="0.188" stop-color="rgb(55,55,55)" stop-opacity="0.05"/>
<stop offset="0.208" stop-color="rgb(63,63,63)" stop-opacity="0.19"/>
<stop offset="0.229" stop-color="rgb(78,78,78)" stop-opacity="0.01"/>
<stop offset="0.250" stop-color="rgb(83,83,83)" stop-opacity="0.09"/>
<stop offset="0.271" stop-color="rgb(67,67,67)" stop-opacity="0.60"/>
<stop offset="0.292" stop-color="rgb(80,80,80)" stop-opacity="0.51"/>
<stop offset="0.312" stop-color="rgb(53,53,53)" stop-opacity="0.16"/>
<stop offset="0.333" stop-color="rgb(82,82,82)" stop-opacity="0.43"/>
<stop offset="0.354" stop-color="rgb(52,52,52)" stop-opacity="0.22"/>
<stop offset="0.375" stop-color="rgb(76,76,76)" stop-opacity="0.77"/>
<stop offset="0.396" stop-color="rgb(76,76,76)" stop-opacity="0.81"/>
<stop offset="0.417" stop-color="rgb(77,77,77)" stop-opacity="0.92"/>
<stop offset="0.438" stop-color="rgb(74,74,74)" stop-opacity="0.01"/>
<stop offset="0.458" stop-color="rgb(60,60,60)" stop-opacity="0.89"/>
<stop offset="0.479" stop-color="rgb(59,59,59)" stop-opacity="0.30"/>
<stop offset="0.500" stop-color="rgb(62,62,62)" stop-opacity="0.42"/>
<stop offset="0.521" stop-color="rgb(54,54,54)" stop-opacity="0.99"/>
<stop offset="0.542" stop-color="rgb(63,63,63)" stop-opacity="0.39"/>
<stop offset="0.562" stop-color="rgb(62,62,62)" stop-opacity="0.27"/>
<stop offset="0.583" stop-color="rgb(80,80,80)" stop-opacity="0.36"/>
<stop offset="0.604" stop-color="rgb(50,50,50)" stop-opacity="0.67"/>
<stop offset="0.625" stop-color="rgb(57,57,57)" stop-opacity="0.77"/>
<stop offset="0.646" stop-color="rgb(79,79,79)" stop-opacity="0.08"/>
<stop offset="0.667" stop-color="rgb(74,74,74)" stop-opacity="0.04"/>
<stop offset="0.688" stop-color="rgb(76,76,76)" stop-opacity="0.89"/>
<stop offset="0.708" stop-color="rgb(62,62,62)" stop-opacity="0.65"/>
<stop offset="0.729" stop-color="rgb(81,81,81)" stop-opacity="0.96"/>
<stop offset="0.750" stop-color="rgb(79,79,79)" stop-opacity="0.14"/>
<stop offset="0.771" stop-color="rgb(65,65,65)" stop-opacity="0.08"/>
<stop offset="0.792" stop-color="rgb(73,73,73)" stop-opacity="0.94"/>
<stop offset="0.812" stop-color="rgb(51,51,51)" stop-opacity="0.01"/>
<stop offset="0.833" stop-color="rgb(77,77,77)" stop-opacity="0.09"/>
<stop offset="0.854" stop-color="rgb(58,58,58)" stop-opacity="0.75"/>
<stop offset="0.875" stop-color="rgb(73,73,73)" stop-opacity="0.33"/>
<stop offset="0.896" stop-color="rgb(63,63,63)" stop-opacity="0.15"/>
<stop offset="0.917" stop-color="rgb(83,83,83)" stop-opacity="0.90"/>
<stop offset="0.938" stop-color="rgb(85,85,85)" stop-opacity="0.09"/>
<stop offset="0.958" stop-color="rgb(57,57,57)" stop-opacity="0.11"/>
<stop offset="0.979" stop-color="rgb(75,75,75)" stop-opacity="0.37"/>
<stop offset="1.000" stop-color="rgb(73,73,73)" stop-opacity="0.91"/>
</linearGradient>
<linearGradient id="st10" x1="0" x2="1" y1="0" y2="0">
<stop offset="0.000" stop-color="rgb(85,85,85)" stop-opacity="0.58"/>
<stop offset="0.021" stop-color="rgb(65,65,65)" stop-opacity="0.97"/>
<stop offset="0.042" stop-color="rgb(58,58,58)" stop-opacity="0.26"/>
<stop offset="0.062" stop-color="rgb(84,84,84)" stop-opacity="0.01"/>
<stop offset="0.083" stop-color="rgb(74,74,74)" stop-opacity="0.13"/>
<stop offset="0.104" stop-color="rgb(80,80,80)" stop-opacity="0.67"/>
<stop offset="0.125" stop-color="rgb(53,53,53)" stop-opacity="0.01"/>
<stop offset="0.146" stop-color="rgb(63,63,63)" stop-opacity="0.42"/>
<stop offset="0.167" stop-color="rgb(82,82,82)" stop-opacity="0.72"/>
<stop offset="0.188" stop-color="rgb(65,65,65)" stop-opacity="0.79"/>
<stop offset="0.208" stop-color="rgb(53,53,53)" stop-opacity="0.80"/>
<stop offset="0.229" stop-color="rgb(65,65,65)" stop-opacity="0.04"/>
<stop offset="0.250" stop-color="rgb(74,74,74)" stop-opacity="0.88"/>
<stop offset="0.271" stop-color="rgb(51,51,51)" stop-opacity="0.56"/>
<stop offset="0.292" stop-color="rgb(78,78,78)" stop-opacity="0.45"/>
<stop offset="0.312" stop-color="rgb(57,57,57)" stop-opacity="0.92"/>
<stop offset="0.333" stop-color="rgb(73,73,73)" stop-opacity="0.57"/>
<stop offset="0.354" stop-color="rgb(67,67,67)" stop-opacity="0.71"/>
<stop offset="0.375" stop-color="rgb(74,74,74)" stop-opacity="0.99"/>
<stop offset="0.396" stop-color="rgb(69,69,69)" stop-opacity="0.85"/>
<stop offset="0.417" stop-color="rgb(54,54,54)" stop-opacity="0.64"/>
<stop offset="0.438" stop-color="rgb(53,53,53)" stop-opacity="0.74"/>
<stop offset="0.458" stop-color="rgb(83,83,83)" stop-opacity="0.62"/>
<stop offset="0.479" stop-color="rgb(56,56,56)" stop-opacity="0.92"/>
<stop offset="0.500" stop-color="rgb(69,69,69)" stop-opacity="0.82"/>
<stop offset="0.521" stop-color="rgb(73,73,73)" stop-opacity="0.83"/>
<stop offset="0.542" stop-color="rgb(58,58,58)" stop-opacity="0.46"/>
<stop offset="0.562" stop-color="rgb(54,54,54)" stop-opacity="0.49"/>
<stop offset="0.583" stop-color="rgb(63,63,63)" stop-opacity="0.57"/>
<stop offset="0.604" stop-color="rgb(52,52,52)" stop-opacity="0.06"/>
<stop offset="0.625" stop-color="rgb(55,55,55)" stop-opacity="0.12"/>
<stop offset="0.646" stop-color="rgb(59,59,59)" stop-opacity="0.37"/>
<stop offset="0.667" stop-color="rgb(71,71,71)" stop-opacity="0.26"/>
<stop offset="0.688" stop-color="rgb(67,67,67)" stop-opacity="0.48"/>
<stop offset="0.708" stop-color="rgb(59,59,59)" stop-opacity="0.74"/>
<stop offset="0.729" stop-color="rgb(66,66,66)" stop-opacity="0.25"/>
<stop offset="0.750" stop-color="rgb(51,51,51)" stop-opacity="0.63"/>
<stop offset="0.771" stop-color="rgb(74,74,74)" stop-opacity="0.17"/>
<stop offset="0.792" stop-color="rgb(65,65,65)" stop-opacity="0.70"/>
<stop offset="0.812" stop-color="rgb(78,78,78)" stop-opacity="0.92"/>
<stop offset="0.833" stop-color="rgb(61,61,61)" stop-opacity="0.59"/>
<stop offset="0.854" stop-color="rgb(53,53,53)" stop-opacity="0.90"/>
<stop offset="0.875" stop-color="rgb(72,72,72)" stop-opacity="0.56"/>
<stop offset="0.896" stop-color="rgb(50,50,50)" stop-opacity="0.46"/>
<stop offset="0.917" stop-color="rgb(81,81,81)" stop-opacity="0.67"/>
<stop offset="0.938" stop-color="rgb(52,52,52)" stop-opacity="0.03"/>
<stop offset="0.958" stop-color="rgb(76,76,76)" stop-opacity="0.12"/>
<stop offset="0.979" stop-color="rgb(83,83,83)" stop-opacity="0.61"/>
<stop offset="1.000" stop-color="rgb(64,64,64)" stop-opacity="0.54"/>
</linearGradient>
<linearGradient id="st11" x1="0" x2="1" y1="0" y2="0">
<stop offset="0.000" stop-color="rgb(57,57,57)" stop-opacity="0.71"/>
<stop offset="0.021" stop-color="rgb(55,55,55)" stop-opacity="0.04"/>
<stop offset="0.042" stop-color="rgb(79,79,79)" stop-opacity="0.30"/>
<stop offset="0.062" stop-color="rgb(83,83,83)" stop-opacity="0.89"/>
<stop offset="0.083" stop-color="rgb(54,54,54)" stop-opacity="0.96"/>
<stop offset="0.104" stop-color="rgb(67,67,67)" stop-opacity="0.12"/>
<stop offset="0.125" stop-color="rgb(69,69,69)" stop-opacity="0.26"/>
<stop offset="0.146" stop-color="rgb(69,69,69)" stop-opacity="0.30"/>
<stop offset="0.167" stop-color="rgb(70,70,70)" stop-opacity="0.52"/>
<stop offset="0.188" stop-color="rgb(81,81,81)" stop-opacity="0.47"/>
<stop offset="0.208" stop-color="rgb(59,59,59)" stop-opacity="0.66"/>
<stop offset="0.229" stop-color="rgb(66,66,66)" stop-opacity="0.31"/>
<stop offset="0.250" stop-color="rgb(63,63,63)" stop-opacity="0.46"/>
<stop offset="0.271" stop-color="rgb(59,59,59)" stop-opacity="0.35"/>
<stop offset="0.292" stop-color="rgb(55,55,55)" stop-opacity="0.64"/>
<stop offset="0.312" stop-color="rgb(78,78,78)" stop-opacity="0.62"/>
<stop offset="0.333" stop-color="rgb(75,75,75)" stop-opacity="0.17"/>
<stop offset="0.354" stop-color="rgb(58,58,58)" stop-opacity="0.92"/>
<stop offset="0.375" stop-color="rgb(60,60,60)" stop-opacity="0.69"/>
<stop offset="0.396" stop-color="rgb(78,78,78)" stop-opacity="0.94"/>
<stop offset="0.417" stop-color="rgb(72,72,72)" stop-opacity="0.91"/>
<stop offset="0.438" stop-color="rgb(59,59,59)" stop-opacity="0.43"/>
<stop offset="0.458" stop-color="rgb(81,81,81)" stop-opacity="0.50"/>
<stop offset="0.479" stop-color="rgb(63,63,63)" stop-opacity="0.56"/>
<stop offset="0.500" stop-color="rgb(60,60,60)" stop-opacity="0.42"/>
<stop offset="0.521" stop-color="rgb(66,66,66)" stop-opacity="0.84"/>
<stop offset="0.542" stop-color="rgb(68,68,68)" stop-opacity="0.62"/>
<stop offset="0.562" stop-color="rgb(62,62,62)" stop-opacity="0.26"/>
<stop offset="0.583" stop-color="rgb(72,72,72)" stop-opacity="0.85"/>
<stop offset="0.604" stop-color="rgb(83,83,83)" stop-opacity="0.26"/>
<stop offset="0.625" stop-color="rgb(55,55,55)" stop-opacity="0.96"/>
<stop offset="0.646" stop-color="rgb(57,57,57)" stop-opacity="0.69"/>
<stop offset="0.667" stop-color="rgb(57,57,57)" stop-opacity="0.34"/>
<stop offset="0.688" stop-color="rgb(56,56,56)" stop-opacity="0.87"/>
<stop offset="0.708" stop-color="rgb(68,68,68)" stop-opacity="0.84"/>
<stop offset="0.729" stop-color="rgb(61,61,61)" stop-opacity="0.05"/>
<stop offset="0.750" stop-color="rgb(84,84,84)" stop-opacity="0.38"/>
<stop offset="0.771" stop-color="rgb(71,71,71)" stop-opacity="0.72"/>
<stop offset="0.792" stop-color="rgb(66,66,66)" stop-opacity="0.10"/>
<stop offset="0.812" stop-color="rgb(71,71,71)" stop-opacity="0.88"/>
<stop offset="0.833" stop-color="rgb(69,69,69)" stop-opacity="0.06"/>
<stop offset="0.854" stop-color="rgb(71,71,71)" stop-opacity="0.41"/>
<stop offset="0.875" stop-color="rgb(76,76,76)" stop-opacity="0.06"/>
<stop offset="0.896" stop-color="rgb(69,69,69)" stop-opacity="0.07"/>
<stop offset="0.917" stop-color="rgb(52,52,52)" stop-opacity="0.94"/>
<stop offset="0.938" stop-color="rgb(82,82,82)" stop-opacity="0.41"/>
<stop offset="0.958" stop-color="rgb(79,79,79)" stop-opacity="0.42"/>
<stop offset="0.979" stop-color="rgb(64,64,64)" stop-opacity="0.42"/>
<stop offset="1.000" stop-color="rgb(84,84,84)" stop-opacity="0.29"/>
</linearGradient>
<linearGradient id="st12" x1="0" x2="1" y1="0" y2="0">
<stop offset="0.000" stop-color="rgb(56,56,56)" stop-opacity="0.68"/>
<stop offset="0.021" stop-color="rgb(70,70,70)" stop-opacity="0.93"/>
<stop offset="0.042" stop-color="rgb(54,54,54)" stop-opacity="0.47"/>
<stop offset="0.062" stop-color="rgb(56,56,56)" stop-opacity="0.17"/>
<stop offset="0.083" stop-color="rgb(65,65,65)" stop-opacity="0.11"/>
<stop offset="0.104" stop-color="rgb(84,84,84)" stop-opacity="0.10"/>
<stop offset="0.125" stop-color="rgb(84,84,84)" stop-opacity="0.38"/>
<stop offset="0.146" stop-color="rgb(57,57,57)" stop-opacity="0.27"/>
<stop offset="0.167" stop-color="rgb(85,85,85)" stop-opacity="0.45"/>
<stop offset="0.188" stop-color="rgb(77,77,77)" stop-opacity="0.04"/>
<stop offset="0.208" stop-color="rgb(82,82,82)" stop-opacity="0.98"/>
<stop offset="0.229" stop-color="rgb(58,58,58)" stop-opacity="0.38"/>
<stop offset="0.250" stop-color="rgb(61,61,61)" stop-opacity="0.92"/>
<stop offset="0.271" stop-color="rgb(70,70,70)" stop-opacity="0.88"/>
<stop offset="0.292" stop-color="rgb(83,83,83)" stop-opacity="0.07"/>
<stop offset="0.312" stop-color="rgb(69,69,69)" stop-opacity="0.05"/>
<stop offset="0.333" stop-color="rgb(79,79,79)" stop-opacity="0.31"/>
<stop offset="0.354" stop-color="rgb(85,85,85)" stop-opacity="0.92"/>
<stop offset="0.375" stop-color="rgb(82,82,82)" stop-opacity="0.26"/>
<stop offset="0.396" stop-color="rgb(60,60,60)" stop-opacity="0.74"/>
<stop offset="0.417" stop-color="rgb(66,66,66)" stop-opacity="0.46"/>
<stop offset="0.438" stop-color="rgb(75,75,75)" stop-opacity="0.76"/>
<stop offset="0.458" stop-color="rgb(56,56,56)" stop-opacity="0.13"/>
<stop offset="0.479" stop-color="rgb(62,62,62)" stop-opacity="0.46"/>
<stop offset="0.500" stop-color="rgb(56,56,56)" stop-opacity="0.45"/>
<stop offset="0.521" stop-color="rgb(64,64,64)" stop-opacity="0.13"/>
<stop offset="0.542" stop-color="rgb(60,60,60)" stop-opacity="0.64"/>
<stop offset="0.562" stop-color="rgb(78,78,78)" stop-opacity="0.26"/>
<stop offset="0.583" stop-color="rgb(79,79,79)" stop-opacity="0.86"/>
<stop offset="0.604" stop-color="rgb(60,60,60)" stop-opacity="0.80"/>
<stop offset="0.625" stop-color="rgb(80,80,80)" stop-opacity="0.11"/>
<stop offset="0.646" stop-color="rgb(66,66,66)" stop-opacity="0.63"/>
<stop offset="0.667" stop-color="rgb(53,53,53)" stop-opacity="0.54"/>
<stop offset="0.688" stop-color="rgb(85,85,85)" stop-opacity="0.12"/>
<stop offset="0.708" stop-color="rgb(51,51,51)" stop-opacity="0.34"/>
<stop offset="0.729" stop-color="rgb(80,80,80)" stop-opacity="0.64"/>
<stop offset="0.750" stop-color="rgb(81,81,81)" stop-opacity="0.87"/>
<stop offset="0.771" stop-color="rgb(83,83,83)" stop-opacity="0.92"/>
<stop offset="0.792" stop-color="rgb(68,68,68)" stop-opacity="0.61"/>
<stop offset="0.812" stop-color="rgb(53,53,53)" stop-opacity="0.88"/>
<stop offset="0.833" stop-color="rgb(58,58,58)" stop-opacity="0.52"/>
<stop offset="0.854" stop-color="rgb(68,68,68)" stop-opacity="0.41"/>
<stop offset="0.875" stop-color="rgb(58,58,58)" stop-opacity="0.29"/>
<stop offset="0.896" stop-color="rgb(62,62,62)" stop-opacity="0.76"/>
<stop offset="0.917" stop-color="rgb(52,52,52)" stop-opacity="0.00"/>
<stop offset="0.938" stop-color="rgb(60,60,60)" stop-opacity="0.31"/>
<stop offset="0.958" stop-color="rgb(76,76,76)" stop-opacity="0.66"/>
<stop offset="0.979" stop-color="rgb(76,76,76)" stop-opacity="0.82"/>
<stop offset="1.000" stop-color="rgb(79,79,79)" stop-opacity="0.34"/>
</linearGradient>
<linearGradient id="st13" x1="0" x2="1" y1="0" y2="0">
<stop offset="0.000" stop-color="rgb(83,83,83)" stop-opacity="0.51"/>
<stop offset="0.021" stop-color="rgb(50,50,50)" stop-opacity="0.16"/>
<stop offset="0.042" stop-color="rgb(81,81,81)" stop-opacity="0.65"/>
<stop offset="0.062" stop-color="rgb(84,84,84)" stop-opacity="0.79"/>
<stop offset="0.083" stop-color="rgb(79,79,79)" stop-opacity="0.84"/>
<stop offset="0.104" stop-color="rgb(52,52,52)" stop-opacity="0.23"/>
<stop offset="0.125" stop-color="rgb(50,50,50)" stop-opacity="0.48"/>
<stop offset="0.146" stop-color="rgb(57,57,57)" stop-opacity="0.74"/>
<stop offset="0.167" stop-color="rgb(60,60,60)" stop-opacity="0.97"/>
<stop offset="0.188" stop-color="rgb(82,82,82)" stop-opacity="0.24"/>
<stop offset="0.208" stop-color="rgb(75,75,75)" stop-opacity="0.65"/>
<stop offset="0.229" stop-color="rgb(74,74,74)" stop-opacity="0.42"/>
<stop offset="0.250" stop-color="rgb(64,64,64)" stop-opacity="0.65"/>
<stop offset="0.271" stop-color="rgb(50,50,50)" stop-opacity="0.21"/>
<stop offset="0.292" stop-color="rgb(65,65,65)" stop-opacity="0.58"/>
<stop offset="0.312" stop-color="rgb(82,82,82)" stop-opacity="0.37"/>
<stop offset="0.333" stop-color="rgb(69,69,69)" stop-opacity="0.22"/>
<stop offset="0.354" stop-color="rgb(56,56,56)" stop-opacity="0.37"/>
<stop offset="0.375" stop-color="rgb(85,85,85)" stop-opacity="0.76"/>
<stop offset="0.396" stop-color="rgb(78,78,78)" stop-opacity="0.78"/>
<stop offset="0.417" stop-color="rgb(53,53,53)" stop-opacity="0.89"/>
<stop offset="0.438" stop-color="rgb(83,83,83)" stop-opacity="0.84"/>
<stop offset="0.458" stop-color="rgb(59,59,59)" stop-opacity="0.43"/>
<stop offset="0.479" stop-color="rgb(79,79,79)" stop-opacity="0.01"/>
<stop offset="0.500" stop-color="rgb(62,62,62)" stop-opacity="0.11"/>
<stop offset="0.521" stop-color="rgb(79,79,79)" stop-opacity="0.89"/>
<stop offset="0.542" stop-color="rgb(80,80,80)" stop-opacity="0.48"/>
<stop offset="0.562" stop-color="rgb(83,83,83)" stop-opacity="0.07"/>
<stop offset="0.583" stop-color="rgb(79,79,79)" stop-opacity="0.83"/>
<stop offset="0.604" stop-color="rgb(63,63,63)" stop-opacity="0.02"/>
<stop offset="0.625" stop-color="rgb(78,78,78)" stop-opacity="0.99"/>
<stop offset="0.646" stop-color="rgb(62,62,62)" stop-opacity="0.97"/>
<stop offset="0.667" stop-color="rgb(71,71,71)" stop-opacity="0.20"/>
<stop offset="0.688" stop-color="rgb(84,84,84)" stop-opacity="0.37"/>
<stop offset="0.708" stop-color="rgb(55,55,55)" stop-opacity="0.17"/>
<stop offset="0.729" stop-color="rgb(75,75,75)" stop-opacity="0.00"/>
<stop offset="0.750" stop-color="rgb(77,77,77)" stop-opacity="0.06"/>
<stop offset="0.771" stop-color="rgb(62,62,62)" stop-opacity="0.73"/>
<stop offset="0.792" stop-color="rgb(74,74,74)" stop-opacity="0.39"/>
<stop offset="0.812" stop-color="rgb(57,57,57)" stop-opacity="0.89"/>
<stop offset="0.833" stop-color="rgb(62,62,62)" stop-opacity="0.22"/>
<stop offset="0.854" stop-color="rgb(75,75,75)" stop-opacity="0.90"/>
<stop offset="0.875" stop-color="rgb(59,59,59)" stop-opacity="0.41"/>
<stop offset="0.896" stop-color="rgb(51,51,51)" stop-opacity="0.27"/>
<stop offset="0.917" stop-color="rgb(83,83,83)" stop-opacity="0.77"/>
<stop offset="0.938" stop-color="rgb(67,67,67)" stop-opacity="0.76"/>
<stop offset="0.958" stop-color="rgb(64,64,64)" stop-opacity="0.92"/>
<stop offset="0.979" stop-color="rgb(76,76,76)" stop-opacity="0.82"/>
<stop offset="1.000" stop-color="rgb(85,85,85)" stop-opacity="0.88"/>
</linearGradient>
<linearGradient id="st14" x1="0" x2="1" y1="0" y2="0">
<stop offset="0.000" stop-color="rgb(78,78,78)" stop-opacity="0.73"/>
<stop offset="0.021" stop-color="rgb(62,62,62)" stop-opacity="0.33"/>
<stop offset="0.042" stop-color="rgb(66,66,66)" stop-opacity="0.72"/>
<stop offset="0.062" stop-color="rgb(52,52,52)" stop-opacity="0.19"/>
<stop offset="0.083" stop-color="rgb(84,84,84)" stop-opacity="0.97"/>
<stop offset="0.104" stop-color="rgb(60,60,60)" stop-opacity="0.37"/>
<stop offset="0.125" stop-color="rgb(56,56,56)" stop-opacity="0.71"/>
<stop offset="0.146" stop-color="rgb(77,77,77)" stop-opacity="0.36"/>
<stop offset="0.167" stop-color="rgb(59,59,59)" stop-opacity="0.63"/>
<stop offset="0.188" stop-color="rgb(61,61,61)" stop-opacity="0.01"/>
<stop offset="0.208" stop-color="rgb(59,59,59)" stop-opacity="0.71"/>
<stop offset="0.229" stop-color="rgb(56,56,56)" stop-opacity="0.74"/>
<stop offset="0.250" stop-color="rgb(85,85,85)" stop-opacity="0.47"/>
<stop offset="0.271" stop-color="rgb(70,70,70)" stop-opacity="0.73"/>
<stop offset="0.292" stop-color="rgb(55,55,55)" stop-opacity="0.49"/>
<stop offset="0.312" stop-color="rgb(73,73,73)" stop-opacity="0.01"/>
<stop offset="0.333" stop-color="rgb(53,53,53)" stop-opacity="0.72"/>
<stop offset="0.354" stop-color="rgb(73,73,73)" stop-opacity="0.76"/>
<stop offset="0.375" stop-color="rgb(80,80,80)" stop-opacity="0.26"/>
<stop offset="0.396" stop-color="rgb(78,78,78)" stop-opacity="0.89"/>
<stop offset="0.417" stop-color="rgb(71,71,71)" stop-opacity="0.61"/>
<stop offset="0.438" stop-color="rgb(84,84,84)" stop-opacity="0.41"/>
<stop offset="0.458" stop-color="rgb(75,75,75)" stop-opacity="0.43"/>
<stop offset="0.479" stop-color="rgb(78,78,78)" stop-opacity="0.98"/>
<stop offset="0.500" stop-color="rgb(51,51,51)" stop-opacity="0.23"/>
<stop offset="0.521" stop-color="rgb(68,68,68)" stop-opacity="0.11"/>
<stop offset="0.542" stop-color="rgb(82,82,82)" stop-opacity="0.07"/>
<stop offset="0.562" stop-color="rgb(84,84,84)" stop-opacity="0.48"/>
<stop offset="0.583" stop-color="rgb(55,55,55)" stop-opacity="0.67"/>
<stop offset="0.604" stop-color="rgb(70,70,70)" stop-opacity="0.09"/>
<stop offset="0.625" stop-color="rgb(70,70,70)" stop-opacity="0.41"/>
<stop offset="0.646" stop-color="rgb(70,70,70)" stop-opacity="0.35"/>
<stop offset="0.667" stop-color="rgb(52,52,52)" stop-opacity="0.31"/>
<stop offset="0.688" stop-color="rgb(57,57,57)" stop-opacity="0.93"/>
<stop offset="0.708" stop-color="rgb(55,55,55)" stop-opacity="0.76"/>
<stop offset="0.729" stop-color="rgb(55,55,55)" stop-opacity="0.04"/>
<stop offset="0.750" stop-color="rgb(82,82,82)" stop-opacity="0.88"/>
<stop offset="0.771" stop-color="rgb(63,63,63)" stop-opacity="0.44"/>
<stop offset="0.792" stop-color="rgb(59,59,59)" stop-opacity="0.42"/>
<stop offset="0.812" stop-color="rgb(78,78,78)" stop-opacity="0.57"/>
<stop offset="0.833" stop-color="rgb(83,83,83)" stop-opacity="0.24"/>
<stop offset="0.854" stop-color="rgb(68,68,68)" stop-opacity="0.83"/>
<stop offset="0.875" stop-color="rgb(69,69,69)" stop-opacity="0.07"/>
<stop offset="0.896" stop-color="rgb(74,74,74)" stop-opacity="0.29"/>
<stop offset="0.917" stop-color="rgb(56,56,56)" stop-opacity="0.16"/>
<stop offset="0.938" stop-color="rgb(77,77,77)" stop-opacity="0.09"/>
<stop offset="0.958" stop-color="rgb(71,71,71)" stop-opacity="0.87"/>
<stop offset="0.979" stop-color="rgb(72,72,72)" stop-opacity="0.68"/>
<stop offset="1.000" stop-color="rgb(79,79,79)" stop-opacity="0.33"/>
</linearGradient>
<linearGradient id="st15" x1="0" x2="1" y1="0" y2="0">
<stop offset="0.000" stop-color="rgb(81,81,81)" stop-opacity="0.33"/>
<stop offset="0.021" stop-color="rgb(78,78,78)" stop-opacity="0.70"/>
<stop offset="0.042" stop-color="rgb(53,53,53)" stop-opacity="0.59"/>
<stop offset="0.062" stop-color="rgb(68,68,68)" stop-opacity="0.31"/>
<stop offset="0.083" stop-color="rgb(79,79,79)" stop-opacity="0.82"/>
<stop offset="0.104" stop-color="rgb(82,82,82)" stop-opacity="0.53"/>
<stop offset="0.125" stop-color="rgb(82,82,82)" stop-opacity="0.51"/>
<stop offset="0.146" stop-color="rgb(82,82,82)" stop-opacity="0.57"/>
<stop offset="0.167" stop-color="rgb(78,78,78)" stop-opacity="0.41"/>
<stop offset="0.188" stop-color="rgb(62,62,62)" stop-opacity="0.62"/>
<stop offset="0.208" stop-color="rgb(75,75,75)" stop-opacity="0.93"/>
<stop offset="0.229" stop-color="rgb(57,57,57)" stop-opacity="0.13"/>
<stop offset="0.250" stop-color="rgb(78,78,78)" stop-opacity="0.32"/>
<stop offset="0.271" stop-color="rgb(52,52,52)" stop-opacity="0.31"/>
<stop offset="0.292" stop-color="rgb(73,73,73)" stop-opacity="0.42"/>
<stop offset="0.312" stop-color="rgb(56,56,56)" stop-opacity="0.18"/>
<stop offset="0.333" stop-color="rgb(78,78,78)" stop-opacity="0.14"/>
<stop offset="0.354" stop-color="rgb(69,69,69)" stop-opacity="0.04"/>
<stop offset="0.375" stop-color="rgb(56,56,56)" stop-opacity="0.59"/>
<stop offset="0.396" stop-color="rgb(53,53,53)" stop-opacity="0.07"/>
<stop offset="0.417" stop-color="rgb(55,55,55)" stop-opacity="0.29"/>
<stop offset="0.438" stop-color="rgb(68,68,68)" stop-opacity="0.28"/>
<stop offset="0.458" stop-color="rgb(64,64,64)" stop-opacity="0.03"/>
<stop offset="0.479" stop-color="rgb(79,79,79)" stop-opacity="0.30"/>
<stop offset="0.500" stop-color="rgb(71,71,71)" stop-opacity="0.53"/>
<stop offset="0.521" stop-color="rgb(82,82,82)" stop-opacity="0.56"/>
<stop offset="0.542" stop-color="rgb(75,75,75)" stop-opacity="0.84"/>
<stop offset="0.562" stop-color="rgb(79,79,79)" stop-opacity="0.85"/>
<stop offset="0.583" stop-color="rgb(61,61,61)" stop-opacity="0.37"/>
<stop offset="0.604" stop-color="rgb(70,70,70)" stop-opacity="0.85"/>
<stop offset="0.625" stop-color="rgb(55,55,55)" stop-opacity="0.11"/>
<stop offset="0.646" stop-color="rgb(67,67,67)" stop-opacity="0.37"/>
<stop offset="0.667" stop-color="rgb(71,71,71)" stop-opacity="0.94"/>
<stop offset="0.688" stop-color="rgb(57,57,57)" stop-opacity="0.39"/>
<stop offset="0.708" stop-color="rgb(78,78,78)" stop-opacity="1.00"/>
<stop offset="0.729" stop-color="rgb(58,58,58)" stop-opacity="0.14"/>
<stop offset="0.750" stop-color="rgb(84,84,84)" stop-opacity="0.46"/>
<stop offset="0.771" stop-color="rgb(67,67,67)" stop-opacity="0.18"/>
<stop offset="0.792" stop-color="rgb(76,76,76)" stop-opacity="0.01"/>
<stop offset="0.812" stop-color="rgb(75,75,75)" stop-opacity="0.32"/>
<stop offset="0.833" stop-color="rgb(62,62,62)" stop-opacity="0.62"/>
<stop offset="0.854" stop-color="rgb(77,77,77)" stop-opacity="0.91"/>
<stop offset="0.875" stop-color="rgb(83,83,83)" stop-opacity="0.45"/>
<stop offset="0.896" stop-color="rgb(68,68,68)" stop-opacity="0.38"/>
<stop offset="0.917" stop-color="rgb(62,62,62)" stop-opacity="0.82"/>
<stop offset="0.938" stop-color="rgb(75,75,75)" stop-opacity="0.24"/>
<stop offset="0.958" stop-color="rgb(81,81,81)" stop-opacity="0.88"/>
<stop offset="0.979" stop-color="rgb(82,82,82)" stop-opacity="0.03"/>
<stop offset="1.000" stop-color="rgb(57,57,57)" stop-opacity="0.78"/>
</linearGradient>
<linearGradient id="st16" x1="0" x2="1" y1="0" y2="0">
<stop offset="0.000" stop-color="rgb(69,69,69)" stop-opacity="0.10"/>
<stop offset="0.021" stop-color="rgb(71,71,71)" stop-opacity="0.61"/>
<stop offset="0.042" stop-color="rgb(60,60,60)" stop-opacity="0.85"/>
<stop offset="0.062" stop-color="rgb(50,50,50)" stop-opacity="0.05"/>
<stop offset="0.083" stop-color="rgb(81,81,81)" stop-opacity="0.03"/>
<stop offset="0.104" stop-color="rgb(80,80,80)" stop-opacity="0.53"/>
<stop offset="0.125" stop-color="rgb(52,52,52)" stop-opacity="0.92"/>
<stop offset="0.146" stop-color="rgb(71,71,71)" stop-opacity="0.79"/>
<stop offset="0.167" stop-color="rgb(64,64,64)" stop-opacity="0.37"/>
<stop offset="0.188" stop-color="rgb(51,51,51)" stop-opacity="0.03"/>
<stop offset="0.208" stop-color="rgb(57,57,57)" stop-opacity="0.76"/>
<stop offset="0.229" stop-color="rgb(56,56,56)" stop-opacity="0.98"/>
<stop offset="0.250" stop-color="rgb(69,69,69)" stop-opacity="0.12"/>
<stop offset="0.271" stop-color="rgb(54,54,54)" stop-opacity="0.63"/>
<stop offset="0.292" stop-color="rgb(72,72,72)" stop-opacity="0.78"/>
<stop offset="0.312" stop-color="rgb(66,66,66)" stop-opacity="0.41"/>
<stop offset="0.333" stop-color="rgb(67,67,67)" stop-opacity="0.31"/>
<stop offset="0.354" stop-color="rgb(75,75,75)" stop-opacity="0.18"/>
<stop offset="0.375" stop-color="rgb(81,81,81)" stop-opacity="0.84"/>
<stop offset="0.396" stop-color="rgb(69,69,69)" stop-opacity="0.47"/>
<stop offset="0.417" stop-color="rgb(64,64,64)" stop-opacity="0.85"/>
<stop offset="0.438" stop-color="rgb(85,85,85)" stop-opacity="0.22"/>
<stop offset="0.458" stop-color="rgb(56,56,56)" stop-opacity="0.28"/>
<stop offset="0.479" stop-color="rgb(52,52,52)" stop-opacity="0.69"/>
<stop offset="0.500" stop-color="rgb(50,50,50)" stop-opacity="0.46"/>
<stop offset="0.521" stop-color="rgb(57,57,57)" stop-opacity="0.74"/>
<stop offset="0.542" stop-color="rgb(65,65,65)" stop-opacity="0.32"/>
<stop offset="0.562" stop-color="rgb(65,65,65)" stop-opacity="0.96"/>
<stop offset="0.583" stop-color="rgb(81,81,81)" stop-opacity="0.01"/>
<stop offset="0.604" stop-color="rgb(50,50,50)" stop-opacity="0.59"/>
<stop offset="0.625" stop-color="rgb(70,70,70)" stop-opacity="0.52"/>
<stop offset="0.646" stop-color="rgb(72,72,72)" stop-opacity="0.32"/>
<stop offset="0.667" stop-color="rgb(63,63,63)" stop-opacity="0.86"/>
<stop offset="0.688" stop-color="rgb(68,68,68)" stop-opacity="0.45"/>
<stop offset="0.708" stop-color="rgb(50,50,50)" stop-opacity="0.59"/>
<stop offset="0.729" stop-color="rgb(62,62,62)" stop-opacity="0.23"/>
<stop offset="0.750" stop-color="rgb(50,50,50)" stop-opacity="0.56"/>
<stop offset="0.771" stop-color="rgb(55,55,55)" stop-opacity="0.23"/>
<stop offset="0.792" stop-color="rgb(63,63,63)" stop-opacity="0.38"/>
<stop offset="0.812" stop-color="rgb(63,63,63)" stop-opacity="0.28"/>
<stop offset="0.833" stop-color="rgb(58,58,58)" stop-opacity="0.21"/>
<stop offset="0.854" stop-color="rgb(60,60,60)" stop-opacity="0.12"/>
<stop offset="0.875" stop-color="rgb(81,81,81)" stop-opacity="0.22"/>
<stop offset="0.896" stop-color="rgb(78,78,78)" stop-opacity="0.63"/>
<stop offset="0.917" stop-color="rgb(66,66,66)" stop-opacity="0.08"/>
<stop offset="0.938" stop-color="rgb(61,61,61)" stop-opacity="0.59"/>
<stop offset="0.958" stop-color="rgb(84,84,84)" stop-opacity="0.65"/>
<stop offset="0.979" stop-color="rgb(72,72,72)" stop-opacity="0.57"/>
<stop offset="1.000" stop-color="rgb(83,83,83)" stop-opacity="0.99"/>
</linearGradient>
<linearGradient id="st17" x1="0" x2="1" y1="0" y2="0">
<stop offset="0.000" stop-color="rgb(50,50,50)" stop-opacity="0.30"/>
<stop offset="0.021" stop-color="rgb(85,85,85)" stop-opacity="0.17"/>
<stop offset="0.042" stop-color="rgb(60,60,60)" stop-opacity="0.66"/>
<stop offset="0.062" stop-color="rgb(69,69,69)" stop-opacity="0.38"/>
<stop offset="0.083" stop-color="rgb(80,80,80)" stop-opacity="0.85"/>
<stop offset="0.104" stop-color="rgb(71,71,71)" stop-opacity="0.13"/>
<stop offset="0.125" stop-color="rgb(78,78,78)" stop-opacity="0.55"/>
<stop offset="0.146" stop-color="rgb(62,62,62)" stop-opacity="0.74"/>
<stop offset="0.167" stop-color="rgb(51,51,51)" stop-opacity="0.91"/>
<stop offset="0.188" stop-color="rgb(61,61,61)" stop-opacity="0.29"/>
<stop offset="0.208" stop-color="rgb(51,51,51)" stop-opacity="0.20"/>
<stop offset="0.229" stop-color="rgb(60,60,60)" stop-opacity="0.28"/>
<stop offset="0.250" stop-color="rgb(67,67,67)" stop-opacity="0.08"/>
<stop offset="0.271" stop-color="rgb(72,72,72)" stop-opacity="0.31"/>
<stop offset="0.292" stop-color="rgb(57,57,57)" stop-opacity="0.62"/>
<stop offset="0.312" stop-color="rgb(51,51,51)" stop-opacity="0.60"/>
<stop offset="0.333" stop-color="rgb(67,67,67)" stop-opacity="0.81"/>
<stop offset="0.354" stop-color="rgb(74,74,74)" stop-opacity="0.44"/>
<stop offset="0.375" stop-color="rgb(66,66,66)" stop-opacity="0.07"/>
<stop offset="0.396" stop-color="rgb(75,75,75)" stop-opacity="0.49"/>
<stop offset="0.417" stop-color="rgb(59,59,59)" stop-opacity="0.41"/>
<stop offset="0.438" stop-color="rgb(80,80,80)" stop-opacity="0.94"/>
<stop offset="0.458" stop-color="rgb(53,53,53)" stop-opacity="0.77"/>
<stop offset="0.479" stop-color="rgb(75,75,75)" stop-opacity="0.61"/>
<stop offset="0.500" stop-color="rgb(52,52,52)" stop-opacity="0.20"/>
<stop offset="0.521" stop-color="rgb(66,66,66)" stop-opacity="0.33"/>
<stop offset="0.542" stop-color="rgb(61,61,61)" stop-opacity="0.37"/>
<stop offset="0.562" stop-color="rgb(60,60,60)" stop-opacity="0.93"/>
<stop offset="0.583" stop-color="rgb(64,64,64)" stop-opacity="0.57"/>
<stop offset="0.604" stop-color="rgb(53,53,53)" stop-opacity="0.28"/>
<stop offset="0.625" stop-color="rgb(64,64,64)" stop-opacity="0.42"/>
<stop offset="0.646" stop-color="rgb(80,80,80)" stop-opacity="0.52"/>
<stop offset="0.667" stop-color="rgb(61,61,61)" stop-opacity="0.77"/>
<stop offset="0.688" stop-color="rgb(79,79,79)" stop-opacity="0.48"/>
<stop offset="0.708" stop-color="rgb(81,81,81)" stop-opacity="0.44"/>
<stop offset="0.729" stop-color="rgb(65,65,65)" stop-opacity="0.99"/>
<stop offset="0.750" stop-color="rgb(70,70,70)" stop-opacity="0.71"/>
<stop offset="0.771" stop-color="rgb(64,64,64)" stop-opacity="0.96"/>
<stop offset="0.792" stop-color="rgb(55,55,55)" stop-opacity="0.12"/>
<stop offset="0.812" stop-color="rgb(78,78,78)" stop-opacity="0.65"/>
<stop offset="0.833" stop-color="rgb(84,84,84)" stop-opacity="0.65"/>
<stop offset="0.854" stop-color="rgb(50,50,50)" stop-opacity="0.86"/>
<stop offset="0.875" stop-color="rgb(59,59,59)" stop-opacity="0.01"/>
<stop offset="0.896" stop-color="rgb(58,58,58)" stop-opacity="0.96"/>
<stop offset="0.917" stop-color="rgb(52,52,52)" stop-opacity="0.83"/>
<stop offset="0.938" stop-color="rgb(54,54,54)" stop-opacity="0.84"/>
<stop offset="0.958" stop-color="rgb(78,78,78)" stop-opacity="0.91"/>
<stop offset="0.979" stop-color="rgb(57,57,57)" stop-opacity="0.76"/>
<stop offset="1.000" stop-color="rgb(71,71,71)" stop-opacity="0.79"/>
</linearGradient>
<linearGradient id="st18" x1="0" x2="1" y1="0" y2="0">
<stop offset="0.000" stop-color="rgb(77,77,77)" stop-opacity="0.53"/>
<stop offset="0.021" stop-color="rgb(83,83,83)" stop-opacity="0.64"/>
<stop offset="0.042" stop-color="rgb(71,71,71)" stop-opacity="0.71"/>
<stop offset="0.062" stop-color="rgb(60,60,60)" stop-opacity="0.49"/>
<stop offset="0.083" stop-color="rgb(81,81,81)" stop-opacity="0.85"/>
<stop offset="0.104" stop-color="rgb(85,85,85)" stop-opacity="0.32"/>
<stop offset="0.125" stop-color="rgb(70,70,70)" stop-opacity="0.01"/>
<stop offset="0.146" stop-color="rgb(52,52,52)" stop-opacity="0.20"/>
<stop offset="0.167" stop-color="rgb(85,85,85)" stop-opacity="0.93"/>
<stop offset="0.188" stop-color="rgb(67,67,67)" stop-opacity="0.97"/>
<stop offset="0.208" stop-color="rgb(64,64,64)" stop-opacity="0.81"/>
<stop offset="0.229" stop-color="rgb(65,65,65)" stop-opacity="0.44"/>
<stop offset="0.250" stop-color="rgb(54,54,54)" stop-opacity="0.57"/>
<stop offset="0.271" stop-color="rgb(80,80,80)" stop-opacity="0.23"/>
<stop offset="0.292" stop-color="rgb(76,76,76)" stop-opacity="0.26"/>
<stop offset="0.312" stop-color="rgb(73,73,73)" stop-opacity="0.44"/>
<stop offset="0.333" stop-color="rgb(70,70,70)" stop-opacity="0.12"/>
<stop offset="0.354" stop-color="rgb(59,59,59)" stop-opacity="0.24"/>
<stop offset="0.375" stop-color="rgb(68,68,68)" stop-opacity="0.77"/>
<stop offset="0.396" stop-color="rgb(72,72,72)" stop-opacity="0.77"/>
<stop offset="0.417" stop-color="rgb(68,68,68)" stop-opacity="0.10"/>
<stop offset="0.438" stop-color="rgb(85,85,85)" stop-opacity="0.48"/>
<stop offset="0.458" stop-color="rgb(57,57,57)" stop-opacity="0.53"/>
<stop offset="0.479" stop-color="rgb(67,67,67)" stop-opacity="0.04"/>
<stop offset="0.500" stop-color="rgb(56,56,56)" stop-opacity="0.10"/>
<stop offset="0.521" stop-color="rgb(69,69,69)" stop-opacity="0.77"/>
<stop offset="0.542" stop-color="rgb(84,84,84)" stop-opacity="0.93"/>
<stop offset="0.562" stop-color="rgb(64,64,64)" stop-opacity="0.32"/>
<stop offset="0.583" stop-color="rgb(61,61,61)" stop-opacity="0.04"/>
<stop offset="0.604" stop-color="rgb(77,77,77)" stop-opacity="0.38"/>
<stop offset="0.625" stop-color="rgb(57,57,57)" stop-opacity="0.26"/>
<stop offset="0.646" stop-color="rgb(83,83,83)" stop-opacity="0.72"/>
<stop offset="0.667" stop-color="rgb(55,55,55)" stop-opacity="0.81"/>
<stop offset="0.688" stop-color="rgb(50,50,50)" stop-opacity="0.31"/>
<stop offset="0.708" stop-color="rgb(85,85,85)" stop-opacity="0.47"/>
<stop offset="0.729" stop-color="rgb(59,59,59)" stop-opacity="0.36"/>
<stop offset="0.750" stop-color="rgb(85,85,85)" stop-opacity="0.87"/>
<stop offset="0.771" stop-color="rgb(67,67,67)" stop-opacity="0.08"/>
<stop offset="0.792" stop-color="rgb(77,77,77)" stop-opacity="0.96"/>
<stop offset="0.812" stop-color="rgb(50,50,50)" stop-opacity="0.45"/>
<stop offset="0.833" stop-color="rgb(69,69,69)" stop-opacity="0.74"/>
<stop offset="0.854" stop-color="rgb(80,80,80)" stop-opacity="0.10"/>
<stop offset="0.875" stop-color="rgb(83,83,83)" stop-opacity="0.78"/>
<stop offset="0.896" stop-color="rgb(65,65,65)" stop-opacity="0.99"/>
<stop offset="0.917" stop-color="rgb(57,57,57)" stop-opacity="0.10"/>
<stop offset="0.938" stop-color="rgb(65,65,65)" stop-opacity="0.64"/>
<stop offset="0.958" stop-color="rgb(82,82,82)" stop-opacity="0.62"/>
<stop offset="0.979" stop-color="rgb(83,83,83)" stop-opacity="0.19"/>
<stop offset="1.000" stop-color="rgb(80,80,80)" stop-opacity="0.52"/>
</linearGradient>
<linearGradient id="st19" x1="0" x2="1" y1="0" y2="0">
<stop offset="0.000" stop-color="rgb(73,73,73)" stop-opacity="0.20"/>
<stop offset="0.021" stop-color="rgb(51,51,51)" stop-opacity="0.02"/>
<stop offset="0.042" stop-color="rgb(75,75,75)" stop-opacity="0.41"/>
<stop offset="0.062" stop-color="rgb(79,79,79)" stop-opacity="0.34"/>
<stop offset="0.083" stop-color="rgb(64,64,64)" stop-opacity="0.90"/>
<stop offset="0.104" stop-color="rgb(81,81,81)" stop-opacity="0.26"/>
<stop offset="0.125" stop-color="rgb(64,64,64)" stop-opacity="0.85"/>
<stop offset="0.146" stop-color="rgb(80,80,80)" stop-opacity="0.25"/>
<stop offset="0.167" stop-color="rgb(67,67,67)" stop-opacity="0.09"/>
<stop offset="0.188" stop-color="rgb(85,85,85)" stop-opacity="0.29"/>
<stop offset="0.208" stop-color="rgb(77,77,77)" stop-opacity="0.05"/>
<stop offset="0.229" stop-color="rgb(79,79,79)" stop-opacity="0.94"/>
<stop offset="0.250" stop-color="rgb(61,61,61)" stop-opacity="0.05"/>
<stop offset="0.271" stop-color="rgb(77,77,77)" stop-opacity="0.52"/>
<stop offset="0.292" stop-color="rgb(59,59,59)" stop-opacity="0.21"/>
<stop offset="0.312" stop-color="rgb(65,65,65)" stop-opacity="0.69"/>
<stop offset="0.333" stop-color="rgb(83,83,83)" stop-opacity="0.43"/>
<stop offset="0.354" stop-color="rgb(64,64,64)" stop-opacity="0.45"/>
<stop offset="0.375" stop-color="rgb(81,81,81)" stop-opacity="0.57"/>
<stop offset="0.396" stop-color="rgb(58,58,58)" stop-opacity="0.44"/>
<stop offset="0.417" stop-color="rgb(60,60,60)" stop-opacity="0.87"/>
<stop offset="0.438" stop-color="rgb(80,80,80)" stop-opacity="0.11"/>
<stop offset="0.458" stop-color="rgb(79,79,79)" stop-opacity="0.30"/>
<stop offset="0.479" stop-color="rgb(79,79,79)" stop-opacity="0.32"/>
<stop offset="0.500" stop-color="rgb(73,73,73)" stop-opacity="0.84"/>
<stop offset="0.521" stop-color="rgb(65,65,65)" stop-opacity="0.07"/>
<stop offset="0.542" stop-color="rgb(67,67,67)" stop-opacity="0.66"/>
<stop offset="0.562" stop-color="rgb(73,73,73)" stop-opacity="0.91"/>
<stop offset="0.583" stop-color="rgb(83,83,83)" stop-opacity="0.04"/>
<stop offset="0.604" stop-color="rgb(72,72,72)" stop-opacity="0.37"/>
<stop offset="0.625" stop-color="rgb(60,60,60)" stop-opacity="0.85"/>
<stop offset="0.646" stop-color="rgb(74,74,74)" stop-opacity="0.52"/>
<stop offset="0.667" stop-color="rgb(73,73,73)" stop-opacity="0.60"/>
<stop offset="0.688" stop-color="rgb(76,76,76)" stop-opacity="0.41"/>
<stop offset="0.708" stop-color="rgb(64,64,64)" stop-opacity="0.60"/>
<stop offset="0.729" stop-color="rgb(51,51,51)" stop-opacity="0.34"/>
<stop offset="0.750" stop-color="rgb(52,52,52)" stop-opacity="0.10"/>
<stop offset="0.771" stop-color="rgb(62,62,62)" stop-opacity="0.91"/>
<stop offset="0.792" stop-color="rgb(77,77,77)" stop-opacity="0.75"/>
<stop offset="0.812" stop-color="rgb(80,80,80)" stop-opacity="0.67"/>
<stop offset="0.833" stop-color="rgb(57,57,57)" stop-opacity="0.43"/>
<stop offset="0.854" stop-color="rgb(62,62,62)" stop-opacity="0.37"/>
<stop offset="0.875" stop-color="rgb(75,75,75)" stop-opacity="0.11"/>
<stop offset="0.896" stop-color="rgb(52,52,52)" stop-opacity="0.38"/>
<stop offset="0.917" stop-color="rgb(70,70,70)" stop-opacity="0.95"/>
<stop offset="0.938" stop-color="rgb(72,72,72)" stop-opacity="0.16"/>
<stop offset="0.958" stop-color="rgb(71,71,71)" stop-opacity="0.28"/>
<stop offset="0.979" stop-color="rgb(69,69,69)" stop-opacity="0.49"/>
<stop offset="1.000" stop-color="rgb(60,60,60)" stop-opacity="0.23"/>
</linearGradient>
<linearGradient id="st20" x1="0" x2="1" y1="0" y2="0">
<stop offset="0.000" stop-color="rgb(52,52,52)" stop-opacity="0.76"/>
<stop offset="0.021" stop-color="rgb(70,70,70)" stop-opacity="0.22"/>
<stop offset="0.042" stop-color="rgb(81,81,81)" stop-opacity="0.36"/>
<stop offset="0.062" stop-color="rgb(69,69,69)" stop-opacity="0.09"/>
<stop offset="0.083" stop-color="rgb(59,59,59)" stop-opacity="0.61"/>
<stop offset="0.104" stop-color="rgb(82,82,82)" stop-opacity="0.70"/>
<stop offset="0.125" stop-color="rgb(60,60,60)" stop-opacity="0.47"/>
<stop offset="0.146" stop-color="rgb(75,75,75)" stop-opacity="0.44"/>
<stop offset="0.167" stop-color="rgb(67,67,67)" stop-opacity="0.93"/>
<stop offset="0.188" stop-color="rgb(51,51,51)" stop-opacity="0.79"/>
<stop offset="0.208" stop-color="rgb(62,62,62)" stop-opacity="0.11"/>
<stop offset="0.229" stop-color="rgb(60,60,60)" stop-opacity="0.51"/>
<stop offset="0.250" stop-color="rgb(71,71,71)" stop-opacity="0.70"/>
<stop offset="0.271" stop-color="rgb(51,51,51)" stop-opacity="0.85"/>
<stop offset="0.292" stop-color="rgb(85,85,85)" stop-opacity="0.36"/>
<stop offset="0.312" stop-color="rgb(77,77,77)" stop-opacity="0.69"/>
<stop offset="0.333" stop-color="rgb(57,57,57)" stop-opacity="0.70"/>
<stop offset="0.354" stop-color="rgb(64,64,64)" stop-opacity="0.67"/>
<stop offset="0.375" stop-color="rgb(61,61,61)" stop-opacity="0.69"/>
<stop offset="0.396" stop-color="rgb(70,70,70)" stop-opacity="0.29"/>
<stop offset="0.417" stop-color="rgb(63,63,63)" stop-opacity="0.61"/>
<stop offset="0.438" stop-color="rgb(60,60,60)" stop-opacity="0.14"/>
<stop offset="0.458" stop-color="rgb(80,80,80)" stop-opacity="0.29"/>
<stop offset="0.479" stop-color="rgb(75,75,75)" stop-opacity="0.74"/>
<stop offset="0.500" stop-color="rgb(70,70,70)" stop-opacity="0.72"/>
<stop offset="0.521" stop-color="rgb(70,70,70)" stop-opacity="0.33"/>
<stop offset="0.542" stop-color="rgb(68,68,68)" stop-opacity="0.66"/>
<stop offset="0.562" stop-color="rgb(80,80,80)" stop-opacity="0.61"/>
<stop offset="0.583" stop-color="rgb(65,65,65)" stop-opacity="0.26"/>
<stop offset="0.604" stop-color="rgb(54,54,54)" stop-opacity="0.80"/>
<stop offset="0.625" stop-color="rgb(55,55,55)" stop-opacity="0.58"/>
<stop offset="0.646" stop-color="rgb(76,76,76)" stop-opacity="0.98"/>
<stop offset="0.667" stop-color="rgb(56,56,56)" stop-opacity="0.85"/>
<stop offset="0.688" stop-color="rgb(58,58,58)" stop-opacity="0.50"/>
<stop offset="0.708" stop-color="rgb(76,76,76)" stop-opacity="0.04"/>
<stop offset="0.729" stop-color="rgb(73,73,73)" stop-opacity="0.32"/>
<stop offset="0.750" stop-color="rgb(66,66,66)" stop-opacity="0.12"/>
<stop offset="0.771" stop-color="rgb(83,83,83)" stop-opacity="0.79"/>
<stop offset="0.792" stop-color="rgb(85,85,85)" stop-opacity="0.20"/>
<stop offset="0.812" stop-color="rgb(57,57,57)" stop-opacity="0.50"/>
<stop offset="0.833" stop-color="rgb(54,54,54)" stop-opacity="0.35"/>
<stop offset="0.854" stop-color="rgb(58,58,58)" stop-opacity="0.63"/>
<stop offset="0.875" stop-color="rgb(64,64,64)" stop-opacity="0.76"/>
<stop offset="0.896" stop-color="rgb(74,74,74)" stop-opacity="0.11"/>
<stop offset="0.917" stop-color="rgb(78,78,78)" stop-opacity="0.76"/>
<stop offset="0.938" stop-color="rgb(63,63,63)" stop-opacity="0.91"/>
<stop offset="0.958" stop-color="rgb(78,78,78)" stop-opacity="0.70"/>
<stop offset="0.979" stop-color="rgb(67,67,67)" stop-opacity="0.75"/>
<stop offset="1.000" stop-color="rgb(56,56,56)" stop-opacity="0.59"/>
</linearGradient>
<linearGradient id="st21" x1="0" x2="1" y1="0" y2="0">
<stop offset="0.000" stop-color="rgb(63,63,63)" stop-opacity="0.59"/>
<stop offset="0.021" stop-color="rgb(64,64,64)" stop-opacity="0.58"/>
<stop offset="0.042" stop-color="rgb(77,77,77)" stop-opacity="0.50"/>
<stop offset="0.062" stop-color="rgb(81,81,81)" stop-opacity="0.30"/>
<stop offset="0.083" stop-color="rgb(64,64,64)" stop-opacity="0.14"/>
<stop offset="0.104" stop-color="rgb(81,81,81)" stop-opacity="0.61"/>
<stop offset="0.125" stop-color="rgb(81,81,81)" stop-opacity="0.02"/>
<stop offset="0.146" stop-color="rgb(58,58,58)" stop-opacity="0.63"/>
<stop offset="0.167" stop-color="rgb(76,76,76)" stop-opacity="0.63"/>
<stop offset="0.188" stop-color="rgb(58,58,58)" stop-opacity="0.68"/>
<stop offset="0.208" stop-color="rgb(74,74,74)" stop-opacity="0.75"/>
<stop offset="0.229" stop-color="rgb(76,76,76)" stop-opacity="0.17"/>
<stop offset="0.250" stop-color="rgb(72,72,72)" stop-opacity="0.59"/>
<stop offset="0.271" stop-color="rgb(79,79,79)" stop-opacity="0.66"/>
<stop offset="0.292" stop-color="rgb(81,81,81)" stop-opacity="0.42"/>
<stop offset="0.312" stop-color="rgb(64,64,64)" stop-opacity="0.33"/>
<stop offset="0.333" stop-color="rgb(72,72,72)" stop-opacity="0.48"/>
<stop offset="0.354" stop-color="rgb(77,77,77)" stop-opacity="0.12"/>
<stop offset="0.375" stop-color="rgb(51,51,51)" stop-opacity="0.94"/>
<stop offset="0.396" stop-color="rgb(51,51,51)" stop-opacity="0.19"/>
<stop offset="0.417" stop-color="rgb(84,84,84)" stop-opacity="0.45"/>
<stop offset="0.438" stop-color="rgb(58,58,58)" stop-opacity="0.33"/>
<stop offset="0.458" stop-color="rgb(76,76,76)" stop-opacity="0.99"/>
<stop offset="0.479" stop-color="rgb(71,71,71)" stop-opacity="0.27"/>
<stop offset="0.500" stop-color="rgb(54,54,54)" stop-opacity="0.12"/>
<stop offset="0.521" stop-color="rgb(54,54,54)" stop-opacity="0.07"/>
<stop offset="0.542" stop-color="rgb(82,82,82)" stop-opacity="0.15"/>
<stop offset="0.562" stop-color="rgb(62,62,62)" stop-opacity="0.89"/>
<stop offset="0.583" stop-color="rgb(81,81,81)" stop-opacity="0.44"/>
<stop offset="0.604" stop-color="rgb(72,72,72)" stop-opacity="0.38"/>
<stop offset="0.625" stop-color="rgb(73,73,73)" stop-opacity="0.19"/>
<stop offset="0.646" stop-color="rgb(62,62,62)" stop-opacity="0.08"/>
<stop offset="0.667" stop-color="rgb(69,69,69)" stop-opacity="0.27"/>
<stop offset="0.688" stop-color="rgb(76,76,76)" stop-opacity="0.91"/>
<stop offset="0.708" stop-color="rgb(74,74,74)" stop-opacity="0.22"/>
<stop offset="0.729" stop-color="rgb(70,70,70)" stop-opacity="0.96"/>
<stop offset="0.750" stop-color="rgb(59,59,59)" stop-opacity="0.01"/>
<stop offset="0.771" stop-color="rgb(78,78,78)" stop-opacity="0.63"/>
<stop offset="0.792" stop-color="rgb(53,53,53)" stop-opacity="0.84"/>
<stop offset="0.812" stop-color="rgb(73,73,73)" stop-opacity="0.78"/>
<stop offset="0.833" stop-color="rgb(81,81,81)" stop-opacity="0.49"/>
<stop offset="0.854" stop-color="rgb(54,54,54)" stop-opacity="0.45"/>
<stop offset="0.875" stop-color="rgb(54,54,54)" stop-opacity="0.68"/>
<stop offset="0.896" stop-color="rgb(70,70,70)" stop-opacity="0.17"/>
<stop offset="0.917" stop-color="rgb(83,83,83)" stop-opacity="0.04"/>
<stop offset="0.938" stop-color="rgb(54,54,54)" stop-opacity="0.64"/>
<stop offset="0.958" stop-color="rgb(70,70,70)" stop-opacity="0.82"/>
<stop offset="0.979" stop-color="rgb(56,56,56)" stop-opacity="0.82"/>
<stop offset="1.000" stop-color="rgb(80,80,80)" stop-opacity="0.87"/>
</linearGradient>
<linearGradient id="st22" x1="0" x2="1" y1="0" y2="0">
<stop offset="0.000" stop-color="rgb(50,50,50)" stop-opacity="0.54"/>
<stop offset="0.021" stop-color="rgb(65,65,65)" stop-opacity="0.61"/>
<stop offset="0.042" stop-color="rgb(51,51,51)" stop-opacity="0.70"/>
<stop offset="0.062" stop-color="rgb(74,74,74)" stop-opacity="0.35"/>
<stop offset="0.083" stop-color="rgb(52,52,52)" stop-opacity="0.76"/>
<stop offset="0.104" stop-color="rgb(62,62,62)" stop-opacity="0.47"/>
<stop offset="0.125" stop-color="rgb(67,67,67)" stop-opacity="0.22"/>
<stop offset="0.146" stop-color="rgb(79,79,79)" stop-opacity="0.59"/>
<stop offset="0.167" stop-color="rgb(65,65,65)" stop-opacity="0.99"/>
<stop offset="0.188" stop-color="rgb(61,61,61)" stop-opacity="0.88"/>
<stop offset="0.208" stop-color="rgb(57,57,57)" stop-opacity="0.73"/>
<stop offset="0.229" stop-color="rgb(74,74,74)" stop-opacity="0.63"/>
<stop offset="0.250" stop-color="rgb(51,51,51)" stop-opacity="0.68"/>
<stop offset="0.271" stop-color="rgb(67,67,67)" stop-opacity="0.93"/>
<stop offset="0.292" stop-color="rgb(80,80,80)" stop-opacity="0.20"/>
<stop offset="0.312" stop-color="rgb(64,64,64)" stop-opacity="0.02"/>
<stop offset="0.333" stop-color="rgb(77,77,77)" stop-opacity="0.93"/>
<stop offset="0.354" stop-color="rgb(59,59,59)" stop-opacity="0.14"/>
<stop offset="0.375" stop-color="rgb(66,66,66)" stop-opacity="0.17"/>
<stop offset="0.396" stop-color="rgb(84,84,84)" stop-opacity="0.11"/>
<stop offset="0.417" stop-color="rgb(70,70,70)" stop-opacity="0.26"/>
<stop offset="0.438" stop-color="rgb(62,62,62)" stop-opacity="0.36"/>
<stop offset="0.458" stop-color="rgb(84,84,84)" stop-opacity="0.98"/>
<stop offset="0.479" stop-color="rgb(73,73,73)" stop-opacity="0.18"/>
<stop offset="0.500" stop-color="rgb(77,77,77)" stop-opacity="0.72"/>
<stop offset="0.521" stop-color="rgb(81,81,81)" stop-opacity="0.25"/>
<stop offset="0.542" stop-color="rgb(71,71,71)" stop-opacity="0.05"/>
<stop offset="0.562" stop-color="rgb(83,83,83)" stop-opacity="0.55"/>
<stop offset="0.583" stop-color="rgb(66,66,66)" stop-opacity="0.80"/>
<stop offset="0.604" stop-color="rgb(57,57,57)" stop-opacity="0.91"/>
<stop offset="0.625" stop-color="rgb(54,54,54)" stop-opacity="0.12"/>
<stop offset="0.646" stop-color="rgb(58,58,58)" stop-opacity="0.26"/>
<stop offset="0.667" stop-color="rgb(73,73,73)" stop-opacity="0.27"/>
<stop offset="0.688" stop-color="rgb(78,78,78)" stop-opacity="0.95"/>
<stop offset="0.708" stop-color="rgb(64,64,64)" stop-opacity="0.66"/>
<stop offset="0.729" stop-color="rgb(80,80,80)" stop-opacity="0.78"/>
<stop offset="0.750" stop-color="rgb(64,64,64)" stop-opacity="0.46"/>
<stop offset="0.771" stop-color="rgb(84,84,84)" stop-opacity="0.16"/>
<stop offset="0.792" stop-color="rgb(73,73,73)" stop-opacity="0.64"/>
<stop offset="0.812" stop-color="rgb(62,62,62)" stop-opacity="0.71"/>
<stop offset="0.833" stop-color="rgb(77,77,77)" stop-opacity="0.95"/>
<stop offset="0.854" stop-color="rgb(52,52,52)" stop-opacity="0.27"/>
<stop offset="0.875" stop-color="rgb(76,76,76)" stop-opacity="0.23"/>
<stop offset="0.896" stop-color="rgb(57,57,57)" stop-opacity="0.58"/>
<stop offset="0.917" stop-color="rgb(50,50,50)" stop-opacity="0.71"/>
<stop offset="0.938" stop-color="rgb(70,70,70)" stop-opacity="0.69"/>
<stop offset="0.958" stop-color="rgb(57,57,57)" stop-opacity="1.00"/>
<stop offset="0.979" stop-color="rgb(79,79,79)" stop-opacity="0.71"/>
<stop offset="1.000" stop-color="rgb(74,74,74)" stop-opacity="0.94"/>
</linearGradient>
<linearGradient id="st23" x1="0" x2="1" y1="0" y2="0">
<stop offset="0.000" stop-color="rgb(85,85,85)" stop-opacity="0.08"/>
<stop offset="0.021" stop-color="rgb(69,69,69)" stop-opacity="0.83"/>
<stop offset="0.042" stop-color="rgb(81,81,81)" stop-opacity="0.83"/>
<stop offset="0.062" stop-color="rgb(63,63,63)" stop-opacity="1.00"/>
<stop offset="0.083" stop-color="rgb(66,66,66)" stop-opacity="0.95"/>
<stop offset="0.104" stop-color="rgb(52,52,52)" stop-opacity="0.91"/>
<stop offset="0.125" stop-color="rgb(73,73,73)" stop-opacity="0.34"/>
<stop offset="0.146" stop-color="rgb(73,73,73)" stop-opacity="0.56"/>
<stop offset="0.167" stop-color="rgb(66,66,66)" stop-opacity="0.20"/>
<stop offset="0.188" stop-color="rgb(66,66,66)" stop-opacity="0.78"/>
<stop offset="0.208" stop-color="rgb(66,66,66)" stop-opacity="0.14"/>
<stop offset="0.229" stop-color="rgb(55,55,55)" stop-opacity="0.19"/>
<stop offset="0.250" stop-color="rgb(60,60,60)" stop-opacity="0.37"/>
<stop offset="0.271" stop-color="rgb(54,54,54)" stop-opacity="0.13"/>
<stop offset="0.292" stop-color="rgb(85,85,85)" stop-opacity="0.65"/>
<stop offset="0.312" stop-color="rgb(66,66,66)" stop-opacity="0.73"/>
<stop offset="0.333" stop-color="rgb(67,67,67)" stop-opacity="0.63"/>
<stop offset="0.354" stop-color="rgb(57,57,57)" stop-opacity="0.38"/>
<stop offset="0.375" stop-color="rgb(75,75,75)" stop-opacity="0.99"/>
<stop offset="0.396" stop-color="rgb(78,78,78)" stop-opacity="0.44"/>
<stop offset="0.417" stop-color="rgb(55,55,55)" stop-opacity="0.13"/>
<stop offset="0.438" stop-color="rgb(73,73,73)" stop-opacity="0.79"/>
<stop offset="0.458" stop-color="rgb(64,64,64)" stop-opacity="0.50"/>
<stop offset="0.479" stop-color="rgb(67,67,67)" stop-opacity="0.38"/>
<stop offset="0.500" stop-color="rgb(79,79,79)" stop-opacity="0.35"/>
<stop offset="0.521" stop-color="rgb(74,74,74)" stop-opacity="0.61"/>
<stop offset="0.542" stop-color="rgb(67,67,67)" stop-opacity="0.69"/>
<stop offset="0.562" stop-color="rgb(55,55,55)" stop-opacity="0.51"/>
<stop offset="0.583" stop-color="rgb(60,60,60)" stop-opacity="0.67"/>
<stop offset="0.604" stop-color="rgb(54,54,54)" stop-opacity="0.69"/>
<stop offset="0.625" stop-color="rgb(74,74,74)" stop-opacity="0.11"/>
<stop offset="0.646" stop-color="rgb(85,85,85)" stop-opacity="0.30"/>
<stop offset="0.667" stop-color="rgb(51,51,51)" stop-opacity="0.54"/>
<stop offset="0.688" stop-color="rgb(81,81,81)" stop-opacity="0.51"/>
<stop offset="0.708" stop-color="rgb(51,51,51)" stop-opacity="0.44"/>
<stop offset="0.729" stop-color="rgb(54,54,54)" stop-opacity="0.64"/>
<stop offset="0.750" stop-color="rgb(71,71,71)" stop-opacity="0.16"/>
<stop offset="0.771" stop-color="rgb(78,78,78)" stop-opacity="0.55"/>
<stop offset="0.792" stop-color="rgb(69,69,69)" stop-opacity="0.16"/>
<stop offset="0.812" stop-color="rgb(56,56,56)" stop-opacity="0.41"/>
<stop offset="0.833" stop-color="rgb(72,72,72)" stop-opacity="0.88"/>
<stop offset="0.854" stop-color="rgb(73,73,73)" stop-opacity="0.89"/>
<stop offset="0.875" stop-color="rgb(59,59,59)" stop-opacity="0.56"/>
<stop offset="0.896" stop-color="rgb(66,66,66)" stop-opacity="0.24"/>
<stop offset="0.917" stop-color="rgb(65,65,65)" stop-opacity="0.18"/>
<stop offset="0.938" stop-color="rgb(59,59,59)" stop-opacity="0.70"/>
<stop offset="0.958" stop-color="rgb(61,61,61)" stop-opacity="0.26"/>
<stop offset="0.979" stop-color="rgb(81,81,81)" stop-opacity="0.64"/>
<stop offset="1.000" stop-color="rgb(65,65,65)" stop-opacity="0.98"/>
</linearGradient>
<linearGradient id="st24" x1="0" x2="1" y1="0" y2="0">
<stop offset="0.000" stop-color="rgb(76,76,76)" stop-opacity="0.96"/>
<stop offset="0.021" stop-color="rgb(52,52,52)" stop-opacity="0.87"/>
<stop offset="0.042" stop-color="rgb(61,61,61)" stop-opacity="0.74"/>
<stop offset="0.062" stop-color="rgb(73,73,73)" stop-opacity="0.59"/>
<stop offset="0.083" stop-color="rgb(50,50,50)" stop-opacity="0.78"/>
<stop offset="0.104" stop-color="rgb(63,63,63)" stop-opacity="0.85"/>
<stop offset="0.125" stop-color="rgb(75,75,75)" stop-opacity="0.62"/>
<stop offset="0.146" stop-color="rgb(50,50,50)" stop-opacity="0.13"/>
<stop offset="0.167" stop-color="rgb(78,78,78)" stop-opacity="0.25"/>
<stop offset="0.188" stop-color="rgb(59,59,59)" stop-opacity="0.90"/>
<stop offset="0.208" stop-color="rgb(79,79,79)" stop-opacity="0.92"/>
<stop offset="0.229" stop-color="rgb(60,60,60)" stop-opacity="0.06"/>
<stop offset="0.250" stop-color="rgb(63,63,63)" stop-opacity="0.78"/>
<stop offset="0.271" stop-color="rgb(78,78,78)" stop-opacity="0.19"/>
<stop offset="0.292" stop-color="rgb(72,72,72)" stop-opacity="0.50"/>
<stop offset="0.312" stop-color="rgb(54,54,54)" stop-opacity="0.59"/>
<stop offset="0.333" stop-color="rgb(67,67,67)" stop-opacity="0.71"/>
<stop offset="0.354" stop-color="rgb(59,59,59)" stop-opacity="0.09"/>
<stop offset="0.375" stop-color="rgb(55,55,55)" stop-opacity="0.68"/>
<stop offset="0.396" stop-color="rgb(77,77,77)" stop-opacity="0.86"/>
<stop offset="0.417" stop-color="rgb(64,64,64)" stop-opacity="0.23"/>
<stop offset="0.438" stop-color="rgb(80,80,80)" stop-opacity="0.43"/>
<stop offset="0.458" stop-color="rgb(81,81,81)" stop-opacity="0.07"/>
<stop offset="0.479" stop-color="rgb(79,79,79)" stop-opacity="0.31"/>
<stop offset="0.500" stop-color="rgb(65,65,65)" stop-opacity="0.47"/>
<stop offset="0.521" stop-color="rgb(58,58,58)" stop-opacity="0.03"/>
<stop offset="0.542" stop-color="rgb(67,67,67)" stop-opacity="0.34"/>
<stop offset="0.562" stop-color="rgb(54,54,54)" stop-opacity="0.45"/>
<stop offset="0.583" stop-color="rgb(85,85,85)" stop-opacity="0.38"/>
<stop offset="0.604" stop-color="rgb(79,79,79)" stop-opacity="0.08"/>
<stop offset="0.625" stop-color="rgb(85,85,85)" stop-opacity="0.86"/>
<stop offset="0.646" stop-color="rgb(81,81,81)" stop-opacity="0.25"/>
<stop offset="0.667" stop-color="rgb(77,77,77)" stop-opacity="0.39"/>
<stop offset="0.688" stop-color="rgb(61,61,61)" stop-opacity="0.35"/>
<stop offset="0.708" stop-color="rgb(70,70,70)" stop-opacity="0.58"/>
<stop offset="0.729" stop-color="rgb(64,64,64)" stop-opacity="0.92"/>
<stop offset="0.750" stop-color="rgb(62,62,62)" stop-opacity="0.49"/>
<stop offset="0.771" stop-color="rgb(54,54,54)" stop-opacity="0.99"/>
<stop offset="0.792" stop-color="rgb(70,70,70)" stop-opacity="0.64"/>
<stop offset="0.812" stop-color="rgb(77,77,77)" stop-opacity="0.55"/>
<stop offset="0.833" stop-color="rgb(68,68,68)" stop-opacity="0.14"/>
<stop offset="0.854" stop-color="rgb(66,66,66)" stop-opacity="0.97"/>
<stop offset="0.875" stop-color="rgb(72,72,72)" stop-opacity="0.27"/>
<stop offset="0.896" stop-color="rgb(73,73,73)" stop-opacity="0.19"/>
<stop offset="0.917" stop-color="rgb(53,53,53)" stop-opacity="0.38"/>
<stop offset="0.938" stop-color="rgb(74,74,74)" stop-opacity="0.58"/>
<stop offset="0.958" stop-color="rgb(69,69,69)" stop-opacity="0.88"/>
<stop offset="0.979" stop-color="rgb(50,50,50)" stop-opacity="0.33"/>
<stop offset="1.000" stop-color="rgb(58,58,58)" stop-opacity="0.14"/>
</linearGradient>
<linearGradient id="st25" x1="0" x2="1" y1="0" y2="0">
<stop offset="0.000" stop-color="rgb(71,71,71)" stop-opacity="0.42"/>
<stop offset="0.021" stop-color="rgb(65,65,65)" stop-opacity="0.34"/>
<stop offset="0.042" stop-color="rgb(75,75,75)" stop-opacity="0.85"/>
<stop offset="0.062" stop-color="rgb(65,65,65)" stop-opacity="0.57"/>
<stop offset="0.083" stop-color="rgb(81,81,81)" stop-opacity="0.99"/>
<stop offset="0.104" stop-color="rgb(83,83,83)" stop-opacity="0.21"/>
<stop offset="0.125" stop-color="rgb(75,75,75)" stop-opacity="0.68"/>
<stop offset="0.146" stop-color="rgb(59,59,59)" stop-opacity="0.71"/>
<stop offset="0.167" stop-color="rgb(82,82,82)" stop-opacity="0.30"/>
<stop offset="0.188" stop-color="rgb(52,52,52)" stop-opacity="0.67"/>
<stop offset="0.208" stop-color="rgb(67,67,67)" stop-opacity="0.82"/>
<stop offset="0.229" stop-color="rgb(71,71,71)" stop-opacity="0.15"/>
<stop offset="0.250" stop-color="rgb(77,77,77)" stop-opacity="0.21"/>
<stop offset="0.271" stop-color="rgb(51,51,51)" stop-opacity="0.70"/>
<stop offset="0.292" stop-color="rgb(71,71,71)" stop-opacity="0.84"/>
<stop offset="0.312" stop-color="rgb(83,83,83)" stop-opacity="0.37"/>
<stop offset="0.333" stop-color="rgb(52,52,52)" stop-opacity="0.17"/>
<stop offset="0.354" stop-color="rgb(69,69,69)" stop-opacity="0.88"/>
<stop offset="0.375" stop-color="rgb(55,55,55)" stop-opacity="0.87"/>
<stop offset="0.396" stop-color="rgb(61,61,61)" stop-opacity="0.58"/>
<stop offset="0.417" stop-color="rgb(55,55,55)" stop-opacity="0.02"/>
<stop offset="0.438" stop-color="rgb(71,71,71)" stop-opacity="0.60"/>
<stop offset="0.458" stop-color="rgb(77,77,77)" stop-opacity="0.45"/>
<stop offset="0.479" stop-color="rgb(67,67,67)" stop-opacity="0.51"/>
<stop offset="0.500" stop-color="rgb(73,73,73)" stop-opacity="0.40"/>
<stop offset="0.521" stop-color="rgb(52,52,52)" stop-opacity="0.81"/>
<stop offset="0.542" stop-color="rgb(67,67,67)" stop-opacity="0.73"/>
<stop offset="0.562" stop-color="rgb(56,56,56)" stop-opacity="0.17"/>
<stop offset="0.583" stop-color="rgb(74,74,74)" stop-opacity="0.78"/>
<stop offset="0.604" stop-color="rgb(82,82,82)" stop-opacity="0.35"/>
<stop offset="0.625" stop-color="rgb(51,51,51)" stop-opacity="0.75"/>
<stop offset="0.646" stop-color="rgb(59,59,59)" stop-opacity="0.57"/>
<stop offset="0.667" stop-color="rgb(55,55,55)" stop-opacity="0.20"/>
<stop offset="0.688" stop-color="rgb(58,58,58)" stop-opacity="0.77"/>
<stop offset="0.708" stop-color="rgb(85,85,85)" stop-opacity="0.30"/>
<stop offset="0.729" stop-color="rgb(74,74,74)" stop-opacity="0.94"/>
<stop offset="0.750" stop-color="rgb(68,68,68)" stop-opacity="0.06"/>
<stop offset="0.771" stop-color="rgb(61,61,61)" stop-opacity="0.13"/>
<stop offset="0.792" stop-color="rgb(58,58,58)" stop-opacity="0.89"/>
<stop offset="0.812" stop-color="rgb(72,72,72)" stop-opacity="0.25"/>
<stop offset="0.833" stop-color="rgb(62,62,62)" stop-opacity="0.73"/>
<stop offset="0.854" stop-color="rgb(60,60,60)" stop-opacity="0.24"/>
<stop offset="0.875" stop-color="rgb(81,81,81)" stop-opacity="0.79"/>
<stop offset="0.896" stop-color="rgb(82,82,82)" stop-opacity="0.96"/>
<stop offset="0.917" stop-color="rgb(58,58,58)" stop-opacity="0.22"/>
<stop offset="0.938" stop-color="rgb(59,59,59)" stop-opacity="1.00"/>
<stop offset="0.958" stop-color="rgb(69,69,69)" stop-opacity="0.53"/>
<stop offset="0.979" stop-color="rgb(64,64,64)" stop-opacity="0.90"/>
<stop offset="1.000" stop-color="rgb(84,84,84)" stop-opacity="0.92"/>
</linearGradient>
<linearGradient id="st26" x1="0" x2="1" y1="0" y2="0">
<stop offset="0.000" stop-color="rgb(83,83,83)" stop-opacity="0.19"/>
<stop offset="0.021" stop-color="rgb(61,61,61)" stop-opacity="0.99"/>
<stop offset="0.042" stop-color="rgb(69,69,69)" stop-opacity="0.49"/>
<stop offset="0.062" stop-color="rgb(79,79,79)" stop-opacity="0.06"/>
<stop offset="0.083" stop-color="rgb(67,67,67)" stop-opacity="0.61"/>
<stop offset="0.104" stop-color="rgb(81,81,81)" stop-opacity="0.31"/>
<stop offset="0.125" stop-color="rgb(53,53,53)" stop-opacity="0.78"/>
<stop offset="0.146" stop-color="rgb(55,55,55)" stop-opacity="0.72"/>
<stop offset="0.167" stop-color="rgb(62,62,62)" stop-opacity="0.19"/>
<stop offset="0.188" stop-color="rgb(67,67,67)" stop-opacity="0.86"/>
<stop offset="0.208" stop-color="rgb(60,60,60)" stop-opacity="0.95"/>
<stop offset="0.229" stop-color="rgb(64,64,64)" stop-opacity="0.20"/>
<stop offset="0.250" stop-color="rgb(71,71,71)" stop-opacity="0.83"/>
<stop offset="0.271" stop-color="rgb(75,75,75)" stop-opacity="0.46"/>
<stop offset="0.292" stop-color="rgb(72,72,72)" stop-opacity="0.18"/>
<stop offset="0.312" stop-color="rgb(60,60,60)" stop-opacity="0.71"/>
<stop offset="0.333" stop-color="rgb(72,72,72)" stop-opacity="0.70"/>
<stop offset="0.354" stop-color="rgb(75,75,75)" stop-opacity="0.16"/>
<stop offset="0.375" stop-color="rgb(65,65,65)" stop-opacity="0.78"/>
<stop offset="0.396" stop-color="rgb(83,83,83)" stop-opacity="0.57"/>
<stop offset="0.417" stop-color="rgb(50,50,50)" stop-opacity="0.46"/>
<stop offset="0.438" stop-color="rgb(65,65,65)" stop-opacity="0.41"/>
<stop offset="0.458" stop-color="rgb(54,54,54)" stop-opacity="0.76"/>
<stop offset="0.479" stop-color="rgb(59,59,59)" stop-opacity="0.96"/>
<stop offset="0.500" stop-color="rgb(85,85,85)" stop-opacity="0.21"/>
<stop offset="0.521" stop-color="rgb(58,58,58)" stop-opacity="0.63"/>
<stop offset="0.542" stop-color="rgb(77,77,77)" stop-opacity="0.21"/>
<stop offset="0.562" stop-color="rgb(77,77,77)" stop-opacity="0.97"/>
<stop offset="0.583" stop-color="rgb(79,79,79)" stop-opacity="0.15"/>
<stop offset="0.604" stop-color="rgb(78,78,78)" stop-opacity="0.64"/>
<stop offset="0.625" stop-color="rgb(71,71,71)" stop-opacity="0.01"/>
<stop offset="0.646" stop-color="rgb(67,67,67)" stop-opacity="0.27"/>
<stop offset="0.667" stop-color="rgb(69,69,69)" stop-opacity="0.56"/>
<stop offset="0.688" stop-color="rgb(56,56,56)" stop-opacity="0.06"/>
<stop offset="0.708" stop-color="rgb(85,85,85)" stop-opacity="0.76"/>
<stop offset="0.729" stop-color="rgb(68,68,68)" stop-opacity="0.33"/>
<stop offset="0.750" stop-color="rgb(55,55,55)" stop-opacity="0.12"/>
<stop offset="0.771" stop-color="rgb(84,84,84)" stop-opacity="0.96"/>
<stop offset="0.792" stop-color="rgb(80,80,80)" stop-opacity="0.92"/>
<stop offset="0.812" stop-color="rgb(63,63,63)" stop-opacity="0.07"/>
<stop offset="0.833" stop-color="rgb(77,77,77)" stop-opacity="0.19"/>
<stop offset="0.854" stop-color="rgb(82,82,82)" stop-opacity="0.18"/>
<stop offset="0.875" stop-color="rgb(71,71,71)" stop-opacity="0.76"/>
<stop offset="0.896" stop-color="rgb(51,51,51)" stop-opacity="0.02"/>
<stop offset="0.917" stop-color="rgb(53,53,53)" stop-opacity="0.36"/>
<stop offset="0.938" stop-color="rgb(66,66,66)" stop-opacity="0.42"/>
<stop offset="0.958" stop-color="rgb(57,57,57)" stop-opacity="0.00"/>
<stop offset="0.979" stop-color="rgb(82,82,82)" stop-opacity="0.34"/>
<stop offset="1.000" stop-color="rgb(84,84,84)" stop-opacity="0.65"/>
</linearGradient>
<linearGradient id="st27" x1="0" x2="1" y1="0" y2="0">
<stop offset="0.000" stop-color="rgb(51,51,51)" stop-opacity="0.30"/>
<stop offset="0.021" stop-color="rgb(61,61,61)" stop-opacity="0.92"/>
<stop offset="0.042" stop-color="rgb(72,72,72)" stop-opacity="0.95"/>
<stop offset="0.062" stop-color="rgb(70,70,70)" stop-opacity="0.36"/>
<stop offset="0.083" stop-color="rgb(85,85,85)" stop-opacity="0.25"/>
<stop offset="0.104" stop-color="rgb(72,72,72)" stop-opacity="0.16"/>
<stop offset="0.125" stop-color="rgb(77,77,77)" stop-opacity="0.94"/>
<stop offset="0.146" stop-color="rgb(62,62,62)" stop-opacity="0.51"/>
<stop offset="0.167" stop-color="rgb(66,66,66)" stop-opacity="0.33"/>
<stop offset="0.188" stop-color="rgb(80,80,80)" stop-opacity="0.62"/>
<stop offset="0.208" stop-color="rgb(76,76,76)" stop-opacity="0.98"/>
<stop offset="0.229" stop-color="rgb(66,66,66)" stop-opacity="0.51"/>
<stop offset="0.250" stop-color="rgb(69,69,69)" stop-opacity="0.51"/>
<stop offset="0.271" stop-color="rgb(62,62,62)" stop-opacity="0.76"/>
<stop offset="0.292" stop-color="rgb(67,67,67)" stop-opacity="0.94"/>
<stop offset="0.312" stop-color="rgb(74,74,74)" stop-opacity="0.19"/>
<stop offset="0.333" stop-color="rgb(52,52,52)" stop-opacity="0.30"/>
<stop offset="0.354" stop-color="rgb(82,82,82)" stop-opacity="0.47"/>
<stop offset="0.375" stop-color="rgb(79,79,79)" stop-opacity="0.60"/>
<stop offset="0.396" stop-color="rgb(82,82,82)" stop-opacity="0.98"/>
<stop offset="0.417" stop-color="rgb(67,67,67)" stop-opacity="0.53"/>
<stop offset="0.438" stop-color="rgb(82,82,82)" stop-opacity="0.42"/>
<stop offset="0.458" stop-color="rgb(68,68,68)" stop-opacity="0.35"/>
<stop offset="0.479" stop-color="rgb(62,62,62)" stop-opacity="0.70"/>
<stop offset="0.500" stop-color="rgb(81,81,81)" stop-opacity="0.37"/>
<stop offset="0.521" stop-color="rgb(52,52,52)" stop-opacity="0.13"/>
<stop offset="0.542" stop-color="rgb(79,79,79)" stop-opacity="0.64"/>
<stop offset="0.562" stop-color="rgb(75,75,75)" stop-opacity="0.84"/>
<stop offset="0.583" stop-color="rgb(69,69,69)" stop-opacity="0.20"/>
<stop offset="0.604" stop-color="rgb(59,59,59)" stop-opacity="0.78"/>
<stop offset="0.625" stop-color="rgb(77,77,77)" stop-opacity="0.79"/>
<stop offset="0.646" stop-color="rgb(62,62,62)" stop-opacity="0.32"/>
<stop offset="0.667" stop-color="rgb(58,58,58)" stop-opacity="0.47"/>
<stop offset="0.688" stop-color="rgb(75,75,75)" stop-opacity="0.21"/>
<stop offset="0.708" stop-color="rgb(65,65,65)" stop-opacity="0.36"/>
<stop offset="0.729" stop-color="rgb(52,52,52)" stop-opacity="0.55"/>
<stop offset="0.750" stop-color="rgb(51,51,51)" stop-opacity="0.53"/>
<stop offset="0.771" stop-color="rgb(85,85,85)" stop-opacity="0.54"/>
<stop offset="0.792" stop-color="rgb(75,75,75)" stop-opacity="0.86"/>
<stop offset="0.812" stop-color="rgb(71,71,71)" stop-opacity="0.85"/>
<stop offset="0.833" stop-color="rgb(80,80,80)" stop-opacity="0.94"/>
<stop offset="0.854" stop-color="rgb(62,62,62)" stop-opacity="0.64"/>
<stop offset="0.875" stop-color="rgb(80,80,80)" stop-opacity="0.08"/>
<stop offset="0.896" stop-color="rgb(73,73,73)" stop-opacity="0.69"/>
<stop offset="0.917" stop-color="rgb(71,71,71)" stop-opacity="0.84"/>
<stop offset="0.938" stop-color="rgb(64,64,64)" stop-opacity="0.10"/>
<stop offset="0.958" stop-color="rgb(84,84,84)" stop-opacity="0.47"/>
<stop offset="0.979" stop-color="rgb(83,83,83)" stop-opacity="0.92"/>
<stop offset="1.000" stop-color="rgb(83,83,83)" stop-opacity="0.83"/>
</linearGradient>
<linearGradient id="st28" x1="0" x2="1" y1="0" y2="0">
<stop offset="0.000" stop-color="rgb(80,80,80)" stop-opacity="0.64"/>
<stop offset="0.021" stop-color="rgb(53,53,53)" stop-opacity="0.84"/>
<stop offset="0.042" stop-color="rgb(83,83,83)" stop-opacity="0.79"/>
<stop offset="0.062" stop-color="rgb(79,79,79)" stop-opacity="0.51"/>
<stop offset="0.083" stop-color="rgb(72,72,72)" stop-opacity="0.80"/>
<stop offset="0.104" stop-color="rgb(57,57,57)" stop-opacity="0.03"/>
<stop offset="0.125" stop-color="rgb(52,52,52)" stop-opacity="0.17"/>
<stop offset="0.146" stop-color="rgb(55,55,55)" stop-opacity="0.40"/>
<stop offset="0.167" stop-color="rgb(57,57,57)" stop-opacity="0.34"/>
<stop offset="0.188" stop-color="rgb(65,65,65)" stop-opacity="0.68"/>
<stop offset="0.208" stop-color="rgb(62,62,62)" stop-opacity="0.58"/>
<stop offset="0.229" stop-color="rgb(61,61,61)" stop-opacity="0.19"/>
<stop offset="0.250" stop-color="rgb(74,74,74)" stop-opacity="1.00"/>
<stop offset="0.271" stop-color="rgb(84,84,84)" stop-opacity="0.77"/>
<stop offset="0.292" stop-color="rgb(77,77,77)" stop-opacity="0.97"/>
<stop offset="0.312" stop-color="rgb(79,79,79)" stop-opacity="0.39"/>
<stop offset="0.333" stop-color="rgb(63,63,63)" stop-opacity="0.97"/>
<stop offset="0.354" stop-color="rgb(54,54,54)" stop-opacity="0.83"/>
<stop offset="0.375" stop-color="rgb(77,77,77)" stop-opacity="0.68"/>
<stop offset="0.396" stop-color="rgb(53,53,53)" stop-opacity="0.72"/>
<stop offset="0.417" stop-color="rgb(75,75,75)" stop-opacity="0.08"/>
<stop offset="0.438" stop-color="rgb(81,81,81)" stop-opacity="0.73"/>
<stop offset="0.458" stop-color="rgb(68,68,68)" stop-opacity="0.43"/>
<stop offset="0.479" stop-color="rgb(83,83,83)" stop-opacity="0.25"/>
<stop offset="0.500" stop-color="rgb(80,80,80)" stop-opacity="0.77"/>
<stop offset="0.521" stop-color="rgb(54,54,54)" stop-opacity="0.14"/>
<stop offset="0.542" stop-color="rgb(84,84,84)" stop-opacity="0.99"/>
<stop offset="0.562" stop-color="rgb(71,71,71)" stop-opacity="0.12"/>
<stop offset="0.583" stop-color="rgb(57,57,57)" stop-opacity="0.62"/>
<stop offset="0.604" stop-color="rgb(55,55,55)" stop-opacity="0.41"/>
<stop offset="0.625" stop-color="rgb(51,51,51)" stop-opacity="0.73"/>
<stop offset="0.646" stop-color="rgb(56,56,56)" stop-opacity="0.26"/>
<stop offset="0.667" stop-color="rgb(66,66,66)" stop-opacity="0.99"/>
<stop offset="0.688" stop-color="rgb(66,66,66)" stop-opacity="0.94"/>
<stop offset="0.708" stop-color="rgb(78,78,78)" stop-opacity="0.26"/>
<stop offset="0.729" stop-color="rgb(80,80,80)" stop-opacity="0.11"/>
<stop offset="0.750" stop-color="rgb(58,58,58)" stop-opacity="0.55"/>
<stop offset="0.771" stop-color="rgb(68,68,68)" stop-opacity="0.29"/>
<stop offset="0.792" stop-color="rgb(84,84,84)" stop-opacity="0.46"/>
<stop offset="0.812" stop-color="rgb(51,51,51)" stop-opacity="0.93"/>
<stop offset="0.833" stop-color="rgb(80,80,80)" stop-opacity="0.09"/>
<stop offset="0.854" stop-color="rgb(73,73,73)" stop-opacity="0.18"/>
<stop offset="0.875" stop-color="rgb(67,67,67)" stop-opacity="0.57"/>
<stop offset="0.896" stop-color="rgb(67,67,67)" stop-opacity="0.78"/>
<stop offset="0.917" stop-color="rgb(53,53,53)" stop-opacity="0.54"/>
<stop offset="0.938" stop-color="rgb(61,61,61)" stop-opacity="0.39"/>
<stop offset="0.958" stop-color="rgb(79,79,79)" stop-opacity="0.70"/>
<stop offset="0.979" stop-color="rgb(52,52,52)" stop-opacity="0.42"/>
<stop offset="1.000" stop-color="rgb(74,74,74)" stop-opacity="0.89"/>
</linearGradient>
<linearGradient id="st29" x1="0" x2="1" y1="0" y2="0">
<stop offset="0.000" stop-color="rgb(55,55,55)" stop-opacity="0.30"/>
<stop offset="0.021" stop-color="rgb(54,54,54)" stop-opacity="0.84"/>
<stop offset="0.042" stop-color="rgb(52,52,52)" stop-opacity="0.74"/>
<stop offset="0.062" stop-color="rgb(53,53,53)" stop-opacity="0.35"/>
<stop offset="0.083" stop-color="rgb(73,73,73)" stop-opacity="0.89"/>
<stop offset="0.104" stop-color="rgb(82,82,82)" stop-opacity="0.53"/>
<stop offset="0.125" stop-color="rgb(55,55,55)" stop-opacity="0.13"/>
<stop offset="0.146" stop-color="rgb(68,68,68)" stop-opacity="0.36"/>
<stop offset="0.167" stop-color="rgb(64,64,64)" stop-opacity="0.92"/>
<stop offset="0.188" stop-color="rgb(76,76,76)" stop-opacity="0.17"/>
<stop offset="0.208" stop-color="rgb(71,71,71)" stop-opacity="0.95"/>
<stop offset="0.229" stop-color="rgb(52,52,52)" stop-opacity="0.06"/>
<stop offset="0.250" stop-color="rgb(55,55,55)" stop-opacity="0.11"/>
<stop offset="0.271" stop-color="rgb(51,51,51)" stop-opacity="0.90"/>
<stop offset="0.292" stop-color="rgb(58,58,58)" stop-opacity="0.97"/>
<stop offset="0.312" stop-color="rgb(58,58,58)" stop-opacity="0.98"/>
<stop offset="0.333" stop-color="rgb(60,60,60)" stop-opacity="0.74"/>
<stop offset="0.354" stop-color="rgb(78,78,78)" stop-opacity="0.23"/>
<stop offset="0.375" stop-color="rgb(63,63,63)" stop-opacity="0.05"/>
<stop offset="0.396" stop-color="rgb(79,79,79)" stop-opacity="0.25"/>
<stop offset="0.417" stop-color="rgb(54,54,54)" stop-opacity="0.73"/>
<stop offset="0.438" stop-color="rgb(85,85,85)" stop-opacity="0.13"/>
<stop offset="0.458" stop-color="rgb(52,52,52)" stop-opacity="0.53"/>
<stop offset="0.479" stop-color="rgb(59,59,59)" stop-opacity="0.96"/>
<stop offset="0.500" stop-color="rgb(54,54,54)" stop-opacity="0.64"/>
<stop offset="0.521" stop-color="rgb(60,60,60)" stop-opacity="0.30"/>
<stop offset="0.542" stop-color="rgb(68,68,68)" stop-opacity="0.88"/>
<stop offset="0.562" stop-color="rgb(63,63,63)" stop-opacity="0.50"/>
<stop offset="0.583" stop-color="rgb(65,65,65)" stop-opacity="0.18"/>
<stop offset="0.604" stop-color="rgb(77,77,77)" stop-opacity="0.26"/>
<stop offset="0.625" stop-color="rgb(84,84,84)" stop-opacity="0.39"/>
<stop offset="0.646" stop-color="rgb(79,79,79)" stop-opacity="0.70"/>
<stop offset="0.667" stop-color="rgb(71,71,71)" stop-opacity="0.86"/>
<stop offset="0.688" stop-color="rgb(62,62,62)" stop-opacity="0.17"/>
<stop offset="0.708" stop-color="rgb(52,52,52)" stop-opacity="0.24"/>
<stop offset="0.729" stop-color="rgb(62,62,62)" stop-opacity="0.55"/>
<stop offset="0.750" stop-color="rgb(83,83,83)" stop-opacity="0.07"/>
<stop offset="0.771" stop-color="rgb(69,69,69)" stop-opacity="0.18"/>
<stop offset="0.792" stop-color="rgb(64,64,64)" stop-opacity="0.56"/>
<stop offset="0.812" stop-color="rgb(75,75,75)" stop-opacity="0.89"/>
<stop offset="0.833" stop-color="rgb(69,69,69)" stop-opacity="0.12"/>
<stop offset="0.854" stop-color="rgb(51,51,51)" stop-opacity="0.40"/>
<stop offset="0.875" stop-color="rgb(54,54,54)" stop-opacity="0.90"/>
<stop offset="0.896" stop-color="rgb(84,84,84)" stop-opacity="0.94"/>
<stop offset="0.917" stop-color="rgb(85,85,85)" stop-opacity="0.50"/>
<stop offset="0.938" stop-color="rgb(53,53,53)" stop-opacity="0.95"/>
<stop offset="0.958" stop-color="rgb(76,76,76)" stop-opacity="0.84"/>
<stop offset="0.979" stop-color="rgb(85,85,85)" stop-opacity="0.65"/>
<stop offset="1.000" stop-color="rgb(83,83,83)" stop-opacity="0.29"/>
</linearGradient>
<linearGradient id="dk0" x1="0" x2="1" y1="0" y2="0">
<stop offset="0.000" stop-color="#000" stop-opacity="0.69"/>
<stop offset="0.033" stop-color="#000" stop-opacity="0.41"/>
<stop offset="0.067" stop-color="#000" stop-opacity="0.96"/>
<stop offset="0.100" stop-color="#000" stop-opacity="0.66"/>
<stop offset="0.133" stop-color="#000" stop-opacity="0.42"/>
<stop offset="0.167" stop-color="#000" stop-opacity="0.99"/>
<stop offset="0.200" stop-color="#000" stop-opacity="0.73"/>
<stop offset="0.233" stop-color="#000" stop-opacity="0.45"/>
<stop offset="0.267" stop-color="#000" stop-opacity="0.89"/>
<stop offset="0.300" stop-color="#000" stop-opacity="0.74"/>
<stop offset="0.333" stop-color="#000" stop-opacity="0.74"/>
<stop offset="0.367" stop-color="#000" stop-opacity="0.91"/>
<stop offset="0.400" stop-color="#000" stop-opacity="0.52"/>
<stop offset="0.433" stop-color="#000" stop-opacity="0.49"/>
<stop offset="0.467" stop-color="#000" stop-opacity="0.70"/>
<stop offset="0.500" stop-color="#000" stop-opacity="0.44"/>
<stop offset="0.533" stop-color="#000" stop-opacity="0.79"/>
<stop offset="0.567" stop-color="#000" stop-opacity="0.63"/>
<stop offset="0.600" stop-color="#000" stop-opacity="0.44"/>
<stop offset="0.633" stop-color="#000" stop-opacity="0.39"/>
<stop offset="0.667" stop-color="#000" stop-opacity="0.41"/>
<stop offset="0.700" stop-color="#000" stop-opacity="0.70"/>
<stop offset="0.733" stop-color="#000" stop-opacity="0.94"/>
<stop offset="0.767" stop-color="#000" stop-opacity="0.86"/>
<stop offset="0.800" stop-color="#000" stop-opacity="0.89"/>
<stop offset="0.833" stop-color="#000" stop-opacity="0.70"/>
<stop offset="0.867" stop-color="#000" stop-opacity="0.86"/>
<stop offset="0.900" stop-color="#000" stop-opacity="0.53"/>
<stop offset="0.933" stop-color="#000" stop-opacity="0.56"/>
<stop offset="0.967" stop-color="#000" stop-opacity="0.93"/>
<stop offset="1.000" stop-color="#000" stop-opacity="0.48"/>
</linearGradient>
<linearGradient id="dk1" x1="0" x2="1" y1="0" y2="0">
<stop offset="0.000" stop-color="#000" stop-opacity="0.74"/>
<stop offset="0.033" stop-color="#000" stop-opacity="0.70"/>
<stop offset="0.067" stop-color="#000" stop-opacity="0.34"/>
<stop offset="0.100" stop-color="#000" stop-opacity="0.70"/>
<stop offset="0.133" stop-color="#000" stop-opacity="0.86"/>
<stop offset="0.167" stop-color="#000" stop-opacity="0.92"/>
<stop offset="0.200" stop-color="#000" stop-opacity="0.59"/>
<stop offset="0.233" stop-color="#000" stop-opacity="0.93"/>
<stop offset="0.267" stop-color="#000" stop-opacity="0.33"/>
<stop offset="0.300" stop-color="#000" stop-opacity="0.93"/>
<stop offset="0.333" stop-color="#000" stop-opacity="0.78"/>
<stop offset="0.367" stop-color="#000" stop-opacity="0.87"/>
<stop offset="0.400" stop-color="#000" stop-opacity="0.61"/>
<stop offset="0.433" stop-color="#000" stop-opacity="0.71"/>
<stop offset="0.467" stop-color="#000" stop-opacity="0.88"/>
<stop offset="0.500" stop-color="#000" stop-opacity="0.46"/>
<stop offset="0.533" stop-color="#000" stop-opacity="0.43"/>
<stop offset="0.567" stop-color="#000" stop-opacity="0.83"/>
<stop offset="0.600" stop-color="#000" stop-opacity="0.91"/>
<stop offset="0.633" stop-color="#000" stop-opacity="0.46"/>
<stop offset="0.667" stop-color="#000" stop-opacity="0.68"/>
<stop offset="0.700" stop-color="#000" stop-opacity="0.66"/>
<stop offset="0.733" stop-color="#000" stop-opacity="0.52"/>
<stop offset="0.767" stop-color="#000" stop-opacity="0.89"/>
<stop offset="0.800" stop-color="#000" stop-opacity="0.50"/>
<stop offset="0.833" stop-color="#000" stop-opacity="0.85"/>
<stop offset="0.867" stop-color="#000" stop-opacity="0.59"/>
<stop offset="0.900" stop-color="#000" stop-opacity="0.40"/>
<stop offset="0.933" stop-color="#000" stop-opacity="0.97"/>
<stop offset="0.967" stop-color="#000" stop-opacity="0.40"/>
<stop offset="1.000" stop-color="#000" stop-opacity="0.37"/>
</linearGradient>
<linearGradient id="dk2" x1="0" x2="1" y1="0" y2="0">
<stop offset="0.000" stop-color="#000" stop-opacity="0.32"/>
<stop offset="0.033" stop-color="#000" stop-opacity="0.55"/>
<stop offset="0.067" stop-color="#000" stop-opacity="0.32"/>
<stop offset="0.100" stop-color="#000" stop-opacity="0.41"/>
<stop offset="0.133" stop-color="#000" stop-opacity="0.96"/>
<stop offset="0.167" stop-color="#000" stop-opacity="0.48"/>
<stop offset="0.200" stop-color="#000" stop-opacity="0.80"/>
<stop offset="0.233" stop-color="#000" stop-opacity="0.45"/>
<stop offset="0.267" stop-color="#000" stop-opacity="0.31"/>
<stop offset="0.300" stop-color="#000" stop-opacity="0.30"/>
<stop offset="0.333" stop-color="#000" stop-opacity="0.39"/>
<stop offset="0.367" stop-color="#000" stop-opacity="0.97"/>
<stop offset="0.400" stop-color="#000" stop-opacity="0.62"/>
<stop offset="0.433" stop-color="#000" stop-opacity="0.47"/>
<stop offset="0.467" stop-color="#000" stop-opacity="0.33"/>
<stop offset="0.500" stop-color="#000" stop-opacity="0.75"/>
<stop offset="0.533" stop-color="#000" stop-opacity="0.52"/>
<stop offset="0.567" stop-color="#000" stop-opacity="0.43"/>
<stop offset="0.600" stop-color="#000" stop-opacity="0.61"/>
<stop offset="0.633" stop-color="#000" stop-opacity="0.80"/>
<stop offset="0.667" stop-color="#000" stop-opacity="0.54"/>
<stop offset="0.700" stop-color="#000" stop-opacity="0.69"/>
<stop offset="0.733" stop-color="#000" stop-opacity="0.43"/>
<stop offset="0.767" stop-color="#000" stop-opacity="0.69"/>
<stop offset="0.800" stop-color="#000" stop-opacity="0.33"/>
<stop offset="0.833" stop-color="#000" stop-opacity="0.95"/>
<stop offset="0.867" stop-color="#000" stop-opacity="0.95"/>
<stop offset="0.900" stop-color="#000" stop-opacity="0.70"/>
<stop offset="0.933" stop-color="#000" stop-opacity="0.63"/>
<stop offset="0.967" stop-color="#000" stop-opacity="0.58"/>
<stop offset="1.000" stop-color="#000" stop-opacity="0.82"/>
</linearGradient>
<linearGradient id="dk3" x1="0" x2="1" y1="0" y2="0">
<stop offset="0.000" stop-color="#000" stop-opacity="0.70"/>
<stop offset="0.033" stop-color="#000" stop-opacity="0.80"/>
<stop offset="0.067" stop-color="#000" stop-opacity="0.61"/>
<stop offset="0.100" stop-color="#000" stop-opacity="0.58"/>
<stop offset="0.133" stop-color="#000" stop-opacity="0.81"/>
<stop offset="0.167" stop-color="#000" stop-opacity="0.43"/>
<stop offset="0.200" stop-color="#000" stop-opacity="0.54"/>
<stop offset="0.233" stop-color="#000" stop-opacity="0.47"/>
<stop offset="0.267" stop-color="#000" stop-opacity="0.44"/>
<stop offset="0.300" stop-color="#000" stop-opacity="0.90"/>
<stop offset="0.333" stop-color="#000" stop-opacity="0.52"/>
<stop offset="0.367" stop-color="#000" stop-opacity="0.82"/>
<stop offset="0.400" stop-color="#000" stop-opacity="0.33"/>
<stop offset="0.433" stop-color="#000" stop-opacity="0.95"/>
<stop offset="0.467" stop-color="#000" stop-opacity="0.63"/>
<stop offset="0.500" stop-color="#000" stop-opacity="0.82"/>
<stop offset="0.533" stop-color="#000" stop-opacity="0.37"/>
<stop offset="0.567" stop-color="#000" stop-opacity="0.72"/>
<stop offset="0.600" stop-color="#000" stop-opacity="0.87"/>
<stop offset="0.633" stop-color="#000" stop-opacity="0.50"/>
<stop offset="0.667" stop-color="#000" stop-opacity="0.37"/>
<stop offset="0.700" stop-color="#000" stop-opacity="0.57"/>
<stop offset="0.733" stop-color="#000" stop-opacity="0.84"/>
<stop offset="0.767" stop-color="#000" stop-opacity="0.83"/>
<stop offset="0.800" stop-color="#000" stop-opacity="0.34"/>
<stop offset="0.833" stop-color="#000" stop-opacity="0.53"/>
<stop offset="0.867" stop-color="#000" stop-opacity="0.94"/>
<stop offset="0.900" stop-color="#000" stop-opacity="0.50"/>
<stop offset="0.933" stop-color="#000" stop-opacity="0.36"/>
<stop offset="0.967" stop-color="#000" stop-opacity="0.91"/>
<stop offset="1.000" stop-color="#000" stop-opacity="0.87"/>
</linearGradient>
<linearGradient id="dk4" x1="0" x2="1" y1="0" y2="0">
<stop offset="0.000" stop-color="#000" stop-opacity="0.61"/>
<stop offset="0.033" stop-color="#000" stop-opacity="0.79"/>
<stop offset="0.067" stop-color="#000" stop-opacity="0.83"/>
<stop offset="0.100" stop-color="#000" stop-opacity="0.89"/>
<stop offset="0.133" stop-color="#000" stop-opacity="0.43"/>
<stop offset="0.167" stop-color="#000" stop-opacity="0.81"/>
<stop offset="0.200" stop-color="#000" stop-opacity="0.95"/>
<stop offset="0.233" stop-color="#000" stop-opacity="0.85"/>
<stop offset="0.267" stop-color="#000" stop-opacity="0.67"/>
<stop offset="0.300" stop-color="#000" stop-opacity="0.58"/>
<stop offset="0.333" stop-color="#000" stop-opacity="0.99"/>
<stop offset="0.367" stop-color="#000" stop-opacity="1.00"/>
<stop offset="0.400" stop-color="#000" stop-opacity="0.86"/>
<stop offset="0.433" stop-color="#000" stop-opacity="0.65"/>
<stop offset="0.467" stop-color="#000" stop-opacity="0.93"/>
<stop offset="0.500" stop-color="#000" stop-opacity="0.91"/>
<stop offset="0.533" stop-color="#000" stop-opacity="0.65"/>
<stop offset="0.567" stop-color="#000" stop-opacity="0.39"/>
<stop offset="0.600" stop-color="#000" stop-opacity="0.73"/>
<stop offset="0.633" stop-color="#000" stop-opacity="0.39"/>
<stop offset="0.667" stop-color="#000" stop-opacity="0.53"/>
<stop offset="0.700" stop-color="#000" stop-opacity="0.70"/>
<stop offset="0.733" stop-color="#000" stop-opacity="0.65"/>
<stop offset="0.767" stop-color="#000" stop-opacity="0.75"/>
<stop offset="0.800" stop-color="#000" stop-opacity="0.87"/>
<stop offset="0.833" stop-color="#000" stop-opacity="0.96"/>
<stop offset="0.867" stop-color="#000" stop-opacity="0.52"/>
<stop offset="0.900" stop-color="#000" stop-opacity="0.97"/>
<stop offset="0.933" stop-color="#000" stop-opacity="0.53"/>
<stop offset="0.967" stop-color="#000" stop-opacity="0.54"/>
<stop offset="1.000" stop-color="#000" stop-opacity="0.83"/>
</linearGradient>
<linearGradient id="dk5" x1="0" x2="1" y1="0" y2="0">
<stop offset="0.000" stop-color="#000" stop-opacity="0.98"/>
<stop offset="0.033" stop-color="#000" stop-opacity="0.65"/>
<stop offset="0.067" stop-color="#000" stop-opacity="0.86"/>
<stop offset="0.100" stop-color="#000" stop-opacity="0.88"/>
<stop offset="0.133" stop-color="#000" stop-opacity="0.52"/>
<stop offset="0.167" stop-color="#000" stop-opacity="0.73"/>
<stop offset="0.200" stop-color="#000" stop-opacity="0.96"/>
<stop offset="0.233" stop-color="#000" stop-opacity="0.31"/>
<stop offset="0.267" stop-color="#000" stop-opacity="0.39"/>
<stop offset="0.300" stop-color="#000" stop-opacity="0.91"/>
<stop offset="0.333" stop-color="#000" stop-opacity="0.70"/>
<stop offset="0.367" stop-color="#000" stop-opacity="0.59"/>
<stop offset="0.400" stop-color="#000" stop-opacity="0.86"/>
<stop offset="0.433" stop-color="#000" stop-opacity="0.61"/>
<stop offset="0.467" stop-color="#000" stop-opacity="0.40"/>
<stop offset="0.500" stop-color="#000" stop-opacity="0.55"/>
<stop offset="0.533" stop-color="#000" stop-opacity="0.83"/>
<stop offset="0.567" stop-color="#000" stop-opacity="0.75"/>
<stop offset="0.600" stop-color="#000" stop-opacity="0.65"/>
<stop offset="0.633" stop-color="#000" stop-opacity="0.31"/>
<stop offset="0.667" stop-color="#000" stop-opacity="1.00"/>
<stop offset="0.700" stop-color="#000" stop-opacity="0.36"/>
<stop offset="0.733" stop-color="#000" stop-opacity="0.49"/>
<stop offset="0.767" stop-color="#000" stop-opacity="0.85"/>
<stop offset="0.800" stop-color="#000" stop-opacity="0.96"/>
<stop offset="0.833" stop-color="#000" stop-opacity="0.78"/>
<stop offset="0.867" stop-color="#000" stop-opacity="0.57"/>
<stop offset="0.900" stop-color="#000" stop-opacity="0.82"/>
<stop offset="0.933" stop-color="#000" stop-opacity="0.77"/>
<stop offset="0.967" stop-color="#000" stop-opacity="0.70"/>
<stop offset="1.000" stop-color="#000" stop-opacity="0.85"/>
</linearGradient>
<linearGradient id="dk6" x1="0" x2="1" y1="0" y2="0">
<stop offset="0.000" stop-color="#000" stop-opacity="0.69"/>
<stop offset="0.033" stop-color="#000" stop-opacity="0.68"/>
<stop offset="0.067" stop-color="#000" stop-opacity="0.48"/>
<stop offset="0.100" stop-color="#000" stop-opacity="0.84"/>
<stop offset="0.133" stop-color="#000" stop-opacity="0.37"/>
<stop offset="0.167" stop-color="#000" stop-opacity="0.37"/>
<stop offset="0.200" stop-color="#000" stop-opacity="0.74"/>
<stop offset="0.233" stop-color="#000" stop-opacity="0.33"/>
<stop offset="0.267" stop-color="#000" stop-opacity="0.91"/>
<stop offset="0.300" stop-color="#000" stop-opacity="0.43"/>
<stop offset="0.333" stop-color="#000" stop-opacity="0.63"/>
<stop offset="0.367" stop-color="#000" stop-opacity="0.48"/>
<stop offset="0.400" stop-color="#000" stop-opacity="0.64"/>
<stop offset="0.433" stop-color="#000" stop-opacity="0.73"/>
<stop offset="0.467" stop-color="#000" stop-opacity="0.44"/>
<stop offset="0.500" stop-color="#000" stop-opacity="0.68"/>
<stop offset="0.533" stop-color="#000" stop-opacity="0.98"/>
<stop offset="0.567" stop-color="#000" stop-opacity="0.40"/>
<stop offset="0.600" stop-color="#000" stop-opacity="0.45"/>
<stop offset="0.633" stop-color="#000" stop-opacity="0.44"/>
<stop offset="0.667" stop-color="#000" stop-opacity="0.37"/>
<stop offset="0.700" stop-color="#000" stop-opacity="0.31"/>
<stop offset="0.733" stop-color="#000" stop-opacity="0.97"/>
<stop offset="0.767" stop-color="#000" stop-opacity="0.97"/>
<stop offset="0.800" stop-color="#000" stop-opacity="0.33"/>
<stop offset="0.833" stop-color="#000" stop-opacity="0.88"/>
<stop offset="0.867" stop-color="#000" stop-opacity="0.71"/>
<stop offset="0.900" stop-color="#000" stop-opacity="0.45"/>
<stop offset="0.933" stop-color="#000" stop-opacity="0.92"/>
<stop offset="0.967" stop-color="#000" stop-opacity="0.38"/>
<stop offset="1.000" stop-color="#000" stop-opacity="0.75"/>
</linearGradient>
<linearGradient id="dk7" x1="0" x2="1" y1="0" y2="0">
<stop offset="0.000" stop-color="#000" stop-opacity="0.77"/>
<stop offset="0.033" stop-color="#000" stop-opacity="0.79"/>
<stop offset="0.067" stop-color="#000" stop-opacity="0.47"/>
<stop offset="0.100" stop-color="#000" stop-opacity="0.40"/>
<stop offset="0.133" stop-color="#000" stop-opacity="0.74"/>
<stop offset="0.167" stop-color="#000" stop-opacity="0.51"/>
<stop offset="0.200" stop-color="#000" stop-opacity="0.72"/>
<stop offset="0.233" stop-color="#000" stop-opacity="0.82"/>
<stop offset="0.267" stop-color="#000" stop-opacity="0.32"/>
<stop offset="0.300" stop-color="#000" stop-opacity="0.81"/>
<stop offset="0.333" stop-color="#000" stop-opacity="0.99"/>
<stop offset="0.367" stop-color="#000" stop-opacity="0.58"/>
<stop offset="0.400" stop-color="#000" stop-opacity="0.70"/>
<stop offset="0.433" stop-color="#000" stop-opacity="0.53"/>
<stop offset="0.467" stop-color="#000" stop-opacity="0.92"/>
<stop offset="0.500" stop-color="#000" stop-opacity="0.46"/>
<stop offset="0.533" stop-color="#000" stop-opacity="0.37"/>
<stop offset="0.567" stop-color="#000" stop-opacity="0.65"/>
<stop offset="0.600" stop-color="#000" stop-opacity="0.61"/>
<stop offset="0.633" stop-color="#000" stop-opacity="0.70"/>
<stop offset="0.667" stop-color="#000" stop-opacity="0.44"/>
<stop offset="0.700" stop-color="#000" stop-opacity="0.95"/>
<stop offset="0.733" stop-color="#000" stop-opacity="0.67"/>
<stop offset="0.767" stop-color="#000" stop-opacity="0.57"/>
<stop offset="0.800" stop-color="#000" stop-opacity="0.82"/>
<stop offset="0.833" stop-color="#000" stop-opacity="0.33"/>
<stop offset="0.867" stop-color="#000" stop-opacity="0.94"/>
<stop offset="0.900" stop-color="#000" stop-opacity="0.88"/>
<stop offset="0.933" stop-color="#000" stop-opacity="0.48"/>
<stop offset="0.967" stop-color="#000" stop-opacity="0.62"/>
<stop offset="1.000" stop-color="#000" stop-opacity="0.33"/>
</linearGradient>
<linearGradient id="dk8" x1="0" x2="1" y1="0" y2="0">
<stop offset="0.000" stop-color="#000" stop-opacity="0.85"/>
<stop offset="0.033" stop-color="#000" stop-opacity="0.98"/>
<stop offset="0.067" stop-color="#000" stop-opacity="0.72"/>
<stop offset="0.100" stop-color="#000" stop-opacity="0.98"/>
<stop offset="0.133" stop-color="#000" stop-opacity="0.63"/>
<stop offset="0.167" stop-color="#000" stop-opacity="0.91"/>
<stop offset="0.200" stop-color="#000" stop-opacity="0.89"/>
<stop offset="0.233" stop-color="#000" stop-opacity="0.95"/>
<stop offset="0.267" stop-color="#000" stop-opacity="0.62"/>
<stop offset="0.300" stop-color="#000" stop-opacity="0.66"/>
<stop offset="0.333" stop-color="#000" stop-opacity="0.32"/>
<stop offset="0.367" stop-color="#000" stop-opacity="0.97"/>
<stop offset="0.400" stop-color="#000" stop-opacity="0.36"/>
<stop offset="0.433" stop-color="#000" stop-opacity="0.71"/>
<stop offset="0.467" stop-color="#000" stop-opacity="0.72"/>
<stop offset="0.500" stop-color="#000" stop-opacity="0.42"/>
<stop offset="0.533" stop-color="#000" stop-opacity="0.55"/>
<stop offset="0.567" stop-color="#000" stop-opacity="0.51"/>
<stop offset="0.600" stop-color="#000" stop-opacity="0.31"/>
<stop offset="0.633" stop-color="#000" stop-opacity="0.58"/>
<stop offset="0.667" stop-color="#000" stop-opacity="0.57"/>
<stop offset="0.700" stop-color="#000" stop-opacity="0.80"/>
<stop offset="0.733" stop-color="#000" stop-opacity="0.79"/>
<stop offset="0.767" stop-color="#000" stop-opacity="0.96"/>
<stop offset="0.800" stop-color="#000" stop-opacity="0.91"/>
<stop offset="0.833" stop-color="#000" stop-opacity="0.48"/>
<stop offset="0.867" stop-color="#000" stop-opacity="0.73"/>
<stop offset="0.900" stop-color="#000" stop-opacity="0.78"/>
<stop offset="0.933" stop-color="#000" stop-opacity="0.85"/>
<stop offset="0.967" stop-color="#000" stop-opacity="0.40"/>
<stop offset="1.000" stop-color="#000" stop-opacity="0.53"/>
</linearGradient>
<linearGradient id="dk9" x1="0" x2="1" y1="0" y2="0">
<stop offset="0.000" stop-color="#000" stop-opacity="0.73"/>
<stop offset="0.033" stop-color="#000" stop-opacity="0.52"/>
<stop offset="0.067" stop-color="#000" stop-opacity="0.94"/>
<stop offset="0.100" stop-color="#000" stop-opacity="0.59"/>
<stop offset="0.133" stop-color="#000" stop-opacity="0.80"/>
<stop offset="0.167" stop-color="#000" stop-opacity="0.35"/>
<stop offset="0.200" stop-color="#000" stop-opacity="0.93"/>
<stop offset="0.233" stop-color="#000" stop-opacity="0.98"/>
<stop offset="0.267" stop-color="#000" stop-opacity="0.98"/>
<stop offset="0.300" stop-color="#000" stop-opacity="0.54"/>
<stop offset="0.333" stop-color="#000" stop-opacity="0.88"/>
<stop offset="0.367" stop-color="#000" stop-opacity="0.99"/>
<stop offset="0.400" stop-color="#000" stop-opacity="0.37"/>
<stop offset="0.433" stop-color="#000" stop-opacity="0.35"/>
<stop offset="0.467" stop-color="#000" stop-opacity="0.77"/>
<stop offset="0.500" stop-color="#000" stop-opacity="0.99"/>
<stop offset="0.533" stop-color="#000" stop-opacity="0.32"/>
<stop offset="0.567" stop-color="#000" stop-opacity="0.89"/>
<stop offset="0.600" stop-color="#000" stop-opacity="0.76"/>
<stop offset="0.633" stop-color="#000" stop-opacity="0.63"/>
<stop offset="0.667" stop-color="#000" stop-opacity="0.40"/>
<stop offset="0.700" stop-color="#000" stop-opacity="0.65"/>
<stop offset="0.733" stop-color="#000" stop-opacity="0.65"/>
<stop offset="0.767" stop-color="#000" stop-opacity="0.44"/>
<stop offset="0.800" stop-color="#000" stop-opacity="0.93"/>
<stop offset="0.833" stop-color="#000" stop-opacity="0.82"/>
<stop offset="0.867" stop-color="#000" stop-opacity="0.42"/>
<stop offset="0.900" stop-color="#000" stop-opacity="0.74"/>
<stop offset="0.933" stop-color="#000" stop-opacity="0.72"/>
<stop offset="0.967" stop-color="#000" stop-opacity="0.96"/>
<stop offset="1.000" stop-color="#000" stop-opacity="0.99"/>
</linearGradient>
<linearGradient id="dk10" x1="0" x2="1" y1="0" y2="0">
<stop offset="0.000" stop-color="#000" stop-opacity="0.92"/>
<stop offset="0.033" stop-color="#000" stop-opacity="0.34"/>
<stop offset="0.067" stop-color="#000" stop-opacity="0.59"/>
<stop offset="0.100" stop-color="#000" stop-opacity="0.41"/>
<stop offset="0.133" stop-color="#000" stop-opacity="0.83"/>
<stop offset="0.167" stop-color="#000" stop-opacity="0.36"/>
<stop offset="0.200" stop-color="#000" stop-opacity="0.88"/>
<stop offset="0.233" stop-color="#000" stop-opacity="0.73"/>
<stop offset="0.267" stop-color="#000" stop-opacity="0.75"/>
<stop offset="0.300" stop-color="#000" stop-opacity="0.96"/>
<stop offset="0.333" stop-color="#000" stop-opacity="0.91"/>
<stop offset="0.367" stop-color="#000" stop-opacity="0.81"/>
<stop offset="0.400" stop-color="#000" stop-opacity="0.74"/>
<stop offset="0.433" stop-color="#000" stop-opacity="0.68"/>
<stop offset="0.467" stop-color="#000" stop-opacity="0.66"/>
<stop offset="0.500" stop-color="#000" stop-opacity="0.32"/>
<stop offset="0.533" stop-color="#000" stop-opacity="0.44"/>
<stop offset="0.567" stop-color="#000" stop-opacity="0.78"/>
<stop offset="0.600" stop-color="#000" stop-opacity="0.59"/>
<stop offset="0.633" stop-color="#000" stop-opacity="0.62"/>
<stop offset="0.667" stop-color="#000" stop-opacity="0.89"/>
<stop offset="0.700" stop-color="#000" stop-opacity="0.57"/>
<stop offset="0.733" stop-color="#000" stop-opacity="0.81"/>
<stop offset="0.767" stop-color="#000" stop-opacity="0.86"/>
<stop offset="0.800" stop-color="#000" stop-opacity="0.88"/>
<stop offset="0.833" stop-color="#000" stop-opacity="0.46"/>
<stop offset="0.867" stop-color="#000" stop-opacity="0.73"/>
<stop offset="0.900" stop-color="#000" stop-opacity="0.63"/>
<stop offset="0.933" stop-color="#000" stop-opacity="0.71"/>
<stop offset="0.967" stop-color="#000" stop-opacity="0.36"/>
<stop offset="1.000" stop-color="#000" stop-opacity="0.43"/>
</linearGradient>
<linearGradient id="dk11" x1="0" x2="1" y1="0" y2="0">
<stop offset="0.000" stop-color="#000" stop-opacity="0.47"/>
<stop offset="0.033" stop-color="#000" stop-opacity="0.85"/>
<stop offset="0.067" stop-color="#000" stop-opacity="0.85"/>
<stop offset="0.100" stop-color="#000" stop-opacity="0.57"/>
<stop offset="0.133" stop-color="#000" stop-opacity="0.72"/>
<stop offset="0.167" stop-color="#000" stop-opacity="0.61"/>
<stop offset="0.200" stop-color="#000" stop-opacity="0.68"/>
<stop offset="0.233" stop-color="#000" stop-opacity="0.49"/>
<stop offset="0.267" stop-color="#000" stop-opacity="0.54"/>
<stop offset="0.300" stop-color="#000" stop-opacity="0.97"/>
<stop offset="0.333" stop-color="#000" stop-opacity="0.92"/>
<stop offset="0.367" stop-color="#000" stop-opacity="0.38"/>
<stop offset="0.400" stop-color="#000" stop-opacity="0.38"/>
<stop offset="0.433" stop-color="#000" stop-opacity="0.91"/>
<stop offset="0.467" stop-color="#000" stop-opacity="0.61"/>
<stop offset="0.500" stop-color="#000" stop-opacity="0.75"/>
<stop offset="0.533" stop-color="#000" stop-opacity="0.72"/>
<stop offset="0.567" stop-color="#000" stop-opacity="0.72"/>
<stop offset="0.600" stop-color="#000" stop-opacity="0.93"/>
<stop offset="0.633" stop-color="#000" stop-opacity="0.41"/>
<stop offset="0.667" stop-color="#000" stop-opacity="0.90"/>
<stop offset="0.700" stop-color="#000" stop-opacity="0.48"/>
<stop offset="0.733" stop-color="#000" stop-opacity="0.35"/>
<stop offset="0.767" stop-color="#000" stop-opacity="0.51"/>
<stop offset="0.800" stop-color="#000" stop-opacity="0.66"/>
<stop offset="0.833" stop-color="#000" stop-opacity="0.86"/>
<stop offset="0.867" stop-color="#000" stop-opacity="0.71"/>
<stop offset="0.900" stop-color="#000" stop-opacity="0.98"/>
<stop offset="0.933" stop-color="#000" stop-opacity="0.43"/>
<stop offset="0.967" stop-color="#000" stop-opacity="0.57"/>
<stop offset="1.000" stop-color="#000" stop-opacity="0.70"/>
</linearGradient>
<linearGradient id="dk12" x1="0" x2="1" y1="0" y2="0">
<stop offset="0.000" stop-color="#000" stop-opacity="0.71"/>
<stop offset="0.033" stop-color="#000" stop-opacity="0.79"/>
<stop offset="0.067" stop-color="#000" stop-opacity="0.65"/>
<stop offset="0.100" stop-color="#000" stop-opacity="0.37"/>
<stop offset="0.133" stop-color="#000" stop-opacity="0.85"/>
<stop offset="0.167" stop-color="#000" stop-opacity="0.86"/>
<stop offset="0.200" stop-color="#000" stop-opacity="0.35"/>
<stop offset="0.233" stop-color="#000" stop-opacity="0.87"/>
<stop offset="0.267" stop-color="#000" stop-opacity="0.30"/>
<stop offset="0.300" stop-color="#000" stop-opacity="0.78"/>
<stop offset="0.333" stop-color="#000" stop-opacity="0.74"/>
<stop offset="0.367" stop-color="#000" stop-opacity="0.51"/>
<stop offset="0.400" stop-color="#000" stop-opacity="0.36"/>
<stop offset="0.433" stop-color="#000" stop-opacity="0.48"/>
<stop offset="0.467" stop-color="#000" stop-opacity="0.74"/>
<stop offset="0.500" stop-color="#000" stop-opacity="0.67"/>
<stop offset="0.533" stop-color="#000" stop-opacity="0.87"/>
<stop offset="0.567" stop-color="#000" stop-opacity="0.42"/>
<stop offset="0.600" stop-color="#000" stop-opacity="0.73"/>
<stop offset="0.633" stop-color="#000" stop-opacity="0.51"/>
<stop offset="0.667" stop-color="#000" stop-opacity="0.33"/>
<stop offset="0.700" stop-color="#000" stop-opacity="0.43"/>
<stop offset="0.733" stop-color="#000" stop-opacity="0.38"/>
<stop offset="0.767" stop-color="#000" stop-opacity="0.41"/>
<stop offset="0.800" stop-color="#000" stop-opacity="0.33"/>
<stop offset="0.833" stop-color="#000" stop-opacity="0.98"/>
<stop offset="0.867" stop-color="#000" stop-opacity="0.55"/>
<stop offset="0.900" stop-color="#000" stop-opacity="0.83"/>
<stop offset="0.933" stop-color="#000" stop-opacity="0.60"/>
<stop offset="0.967" stop-color="#000" stop-opacity="0.66"/>
<stop offset="1.000" stop-color="#000" stop-opacity="0.48"/>
</linearGradient>
<linearGradient id="dk13" x1="0" x2="1" y1="0" y2="0">
<stop offset="0.000" stop-color="#000" stop-opacity="0.96"/>
<stop offset="0.033" stop-color="#000" stop-opacity="0.45"/>
<stop offset="0.067" stop-color="#000" stop-opacity="0.97"/>
<stop offset="0.100" stop-color="#000" stop-opacity="0.85"/>
<stop offset="0.133" stop-color="#000" stop-opacity="0.90"/>
<stop offset="0.167" stop-color="#000" stop-opacity="0.37"/>
<stop offset="0.200" stop-color="#000" stop-opacity="0.99"/>
<stop offset="0.233" stop-color="#000" stop-opacity="0.76"/>
<stop offset="0.267" stop-color="#000" stop-opacity="0.71"/>
<stop offset="0.300" stop-color="#000" stop-opacity="0.70"/>
<stop offset="0.333" stop-color="#000" stop-opacity="0.61"/>
<stop offset="0.367" stop-color="#000" stop-opacity="0.97"/>
<stop offset="0.400" stop-color="#000" stop-opacity="0.99"/>
<stop offset="0.433" stop-color="#000" stop-opacity="0.97"/>
<stop offset="0.467" stop-color="#000" stop-opacity="0.40"/>
<stop offset="0.500" stop-color="#000" stop-opacity="0.67"/>
<stop offset="0.533" stop-color="#000" stop-opacity="0.79"/>
<stop offset="0.567" stop-color="#000" stop-opacity="0.43"/>
<stop offset="0.600" stop-color="#000" stop-opacity="0.92"/>
<stop offset="0.633" stop-color="#000" stop-opacity="0.83"/>
<stop offset="0.667" stop-color="#000" stop-opacity="0.38"/>
<stop offset="0.700" stop-color="#000" stop-opacity="0.51"/>
<stop offset="0.733" stop-color="#000" stop-opacity="0.78"/>
<stop offset="0.767" stop-color="#000" stop-opacity="0.92"/>
<stop offset="0.800" stop-color="#000" stop-opacity="1.00"/>
<stop offset="0.833" stop-color="#000" stop-opacity="0.49"/>
<stop offset="0.867" stop-color="#000" stop-opacity="0.89"/>
<stop offset="0.900" stop-color="#000" stop-opacity="0.71"/>
<stop offset="0.933" stop-color="#000" stop-opacity="0.55"/>
<stop offset="0.967" stop-color="#000" stop-opacity="0.47"/>
<stop offset="1.000" stop-color="#000" stop-opacity="0.37"/>
</linearGradient>
<linearGradient id="dk14" x1="0" x2="1" y1="0" y2="0">
<stop offset="0.000" stop-color="#000" stop-opacity="0.32"/>
<stop offset="0.033" stop-color="#000" stop-opacity="0.60"/>
<stop offset="0.067" stop-color="#000" stop-opacity="0.38"/>
<stop offset="0.100" stop-color="#000" stop-opacity="0.44"/>
<stop offset="0.133" stop-color="#000" stop-opacity="0.53"/>
<stop offset="0.167" stop-color="#000" stop-opacity="0.40"/>
<stop offset="0.200" stop-color="#000" stop-opacity="0.44"/>
<stop offset="0.233" stop-color="#000" stop-opacity="0.48"/>
<stop offset="0.267" stop-color="#000" stop-opacity="0.98"/>
<stop offset="0.300" stop-color="#000" stop-opacity="0.60"/>
<stop offset="0.333" stop-color="#000" stop-opacity="0.73"/>
<stop offset="0.367" stop-color="#000" stop-opacity="0.68"/>
<stop offset="0.400" stop-color="#000" stop-opacity="0.97"/>
<stop offset="0.433" stop-color="#000" stop-opacity="0.88"/>
<stop offset="0.467" stop-color="#000" stop-opacity="0.95"/>
<stop offset="0.500" stop-color="#000" stop-opacity="0.91"/>
<stop offset="0.533" stop-color="#000" stop-opacity="0.82"/>
<stop offset="0.567" stop-color="#000" stop-opacity="0.91"/>
<stop offset="0.600" stop-color="#000" stop-opacity="0.53"/>
<stop offset="0.633" stop-color="#000" stop-opacity="0.73"/>
<stop offset="0.667" stop-color="#000" stop-opacity="0.53"/>
<stop offset="0.700" stop-color="#000" stop-opacity="0.95"/>
<stop offset="0.733" stop-color="#000" stop-opacity="0.49"/>
<stop offset="0.767" stop-color="#000" stop-opacity="1.00"/>
<stop offset="0.800" stop-color="#000" stop-opacity="0.47"/>
<stop offset="0.833" stop-color="#000" stop-opacity="0.54"/>
<stop offset="0.867" stop-color="#000" stop-opacity="0.82"/>
<stop offset="0.900" stop-color="#000" stop-opacity="0.70"/>
<stop offset="0.933" stop-color="#000" stop-opacity="0.45"/>
<stop offset="0.967" stop-color="#000" stop-opacity="0.39"/>
<stop offset="1.000" stop-color="#000" stop-opacity="0.91"/>
</linearGradient>
<linearGradient id="dk15" x1="0" x2="1" y1="0" y2="0">
<stop offset="0.000" stop-color="#000" stop-opacity="0.45"/>
<stop offset="0.033" stop-color="#000" stop-opacity="0.66"/>
<stop offset="0.067" stop-color="#000" stop-opacity="0.89"/>
<stop offset="0.100" stop-color="#000" stop-opacity="0.64"/>
<stop offset="0.133" stop-color="#000" stop-opacity="0.63"/>
<stop offset="0.167" stop-color="#000" stop-opacity="0.41"/>
<stop offset="0.200" stop-color="#000" stop-opacity="0.96"/>
<stop offset="0.233" stop-color="#000" stop-opacity="0.72"/>
<stop offset="0.267" stop-color="#000" stop-opacity="0.77"/>
<stop offset="0.300" stop-color="#000" stop-opacity="0.58"/>
<stop offset="0.333" stop-color="#000" stop-opacity="0.80"/>
<stop offset="0.367" stop-color="#000" stop-opacity="0.57"/>
<stop offset="0.400" stop-color="#000" stop-opacity="0.43"/>
<stop offset="0.433" stop-color="#000" stop-opacity="0.55"/>
<stop offset="0.467" stop-color="#000" stop-opacity="0.83"/>
<stop offset="0.500" stop-color="#000" stop-opacity="0.90"/>
<stop offset="0.533" stop-color="#000" stop-opacity="0.66"/>
<stop offset="0.567" stop-color="#000" stop-opacity="0.76"/>
<stop offset="0.600" stop-color="#000" stop-opacity="0.95"/>
<stop offset="0.633" stop-color="#000" stop-opacity="0.76"/>
<stop offset="0.667" stop-color="#000" stop-opacity="0.98"/>
<stop offset="0.700" stop-color="#000" stop-opacity="0.48"/>
<stop offset="0.733" stop-color="#000" stop-opacity="0.91"/>
<stop offset="0.767" stop-color="#000" stop-opacity="0.83"/>
<stop offset="0.800" stop-color="#000" stop-opacity="0.70"/>
<stop offset="0.833" stop-color="#000" stop-opacity="0.71"/>
<stop offset="0.867" stop-color="#000" stop-opacity="0.42"/>
<stop offset="0.900" stop-color="#000" stop-opacity="0.31"/>
<stop offset="0.933" stop-color="#000" stop-opacity="0.32"/>
<stop offset="0.967" stop-color="#000" stop-opacity="0.92"/>
<stop offset="1.000" stop-color="#000" stop-opacity="0.58"/>
</linearGradient>
<linearGradient id="dk16" x1="0" x2="1" y1="0" y2="0">
<stop offset="0.000" stop-color="#000" stop-opacity="0.72"/>
<stop offset="0.033" stop-color="#000" stop-opacity="0.61"/>
<stop offset="0.067" stop-color="#000" stop-opacity="0.92"/>
<stop offset="0.100" stop-color="#000" stop-opacity="0.82"/>
<stop offset="0.133" stop-color="#000" stop-opacity="0.56"/>
<stop offset="0.167" stop-color="#000" stop-opacity="0.75"/>
<stop offset="0.200" stop-color="#000" stop-opacity="0.45"/>
<stop offset="0.233" stop-color="#000" stop-opacity="0.96"/>
<stop offset="0.267" stop-color="#000" stop-opacity="0.41"/>
<stop offset="0.300" stop-color="#000" stop-opacity="0.94"/>
<stop offset="0.333" stop-color="#000" stop-opacity="0.68"/>
<stop offset="0.367" stop-color="#000" stop-opacity="0.40"/>
<stop offset="0.400" stop-color="#000" stop-opacity="0.99"/>
<stop offset="0.433" stop-color="#000" stop-opacity="0.44"/>
<stop offset="0.467" stop-color="#000" stop-opacity="0.77"/>
<stop offset="0.500" stop-color="#000" stop-opacity="0.48"/>
<stop offset="0.533" stop-color="#000" stop-opacity="0.39"/>
<stop offset="0.567" stop-color="#000" stop-opacity="0.85"/>
<stop offset="0.600" stop-color="#000" stop-opacity="0.92"/>
<stop offset="0.633" stop-color="#000" stop-opacity="0.92"/>
<stop offset="0.667" stop-color="#000" stop-opacity="0.77"/>
<stop offset="0.700" stop-color="#000" stop-opacity="0.75"/>
<stop offset="0.733" stop-color="#000" stop-opacity="0.41"/>
<stop offset="0.767" stop-color="#000" stop-opacity="1.00"/>
<stop offset="0.800" stop-color="#000" stop-opacity="0.53"/>
<stop offset="0.833" stop-color="#000" stop-opacity="0.75"/>
<stop offset="0.867" stop-color="#000" stop-opacity="0.32"/>
<stop offset="0.900" stop-color="#000" stop-opacity="0.52"/>
<stop offset="0.933" stop-color="#000" stop-opacity="0.67"/>
<stop offset="0.967" stop-color="#000" stop-opacity="0.63"/>
<stop offset="1.000" stop-color="#000" stop-opacity="0.59"/>
</linearGradient>
<linearGradient id="dk17" x1="0" x2="1" y1="0" y2="0">
<stop offset="0.000" stop-color="#000" stop-opacity="0.57"/>
<stop offset="0.033" stop-color="#000" stop-opacity="0.31"/>
<stop offset="0.067" stop-color="#000" stop-opacity="0.75"/>
<stop offset="0.100" stop-color="#000" stop-opacity="0.55"/>
<stop offset="0.133" stop-color="#000" stop-opacity="0.38"/>
<stop offset="0.167" stop-color="#000" stop-opacity="0.56"/>
<stop offset="0.200" stop-color="#000" stop-opacity="0.77"/>
<stop offset="0.233" stop-color="#000" stop-opacity="0.82"/>
<stop offset="0.267" stop-color="#000" stop-opacity="0.59"/>
<stop offset="0.300" stop-color="#000" stop-opacity="0.38"/>
<stop offset="0.333" stop-color="#000" stop-opacity="0.74"/>
<stop offset="0.367" stop-color="#000" stop-opacity="0.72"/>
<stop offset="0.400" stop-color="#000" stop-opacity="0.64"/>
<stop offset="0.433" stop-color="#000" stop-opacity="0.98"/>
<stop offset="0.467" stop-color="#000" stop-opacity="0.56"/>
<stop offset="0.500" stop-color="#000" stop-opacity="0.67"/>
<stop offset="0.533" stop-color="#000" stop-opacity="0.32"/>
<stop offset="0.567" stop-color="#000" stop-opacity="0.39"/>
<stop offset="0.600" stop-color="#000" stop-opacity="0.44"/>
<stop offset="0.633" stop-color="#000" stop-opacity="0.43"/>
<stop offset="0.667" stop-color="#000" stop-opacity="0.42"/>
<stop offset="0.700" stop-color="#000" stop-opacity="0.38"/>
<stop offset="0.733" stop-color="#000" stop-opacity="0.94"/>
<stop offset="0.767" stop-color="#000" stop-opacity="0.71"/>
<stop offset="0.800" stop-color="#000" stop-opacity="0.64"/>
<stop offset="0.833" stop-color="#000" stop-opacity="0.69"/>
<stop offset="0.867" stop-color="#000" stop-opacity="0.50"/>
<stop offset="0.900" stop-color="#000" stop-opacity="0.91"/>
<stop offset="0.933" stop-color="#000" stop-opacity="0.82"/>
<stop offset="0.967" stop-color="#000" stop-opacity="0.60"/>
<stop offset="1.000" stop-color="#000" stop-opacity="0.32"/>
</linearGradient>
<linearGradient id="dk18" x1="0" x2="1" y1="0" y2="0">
<stop offset="0.000" stop-color="#000" stop-opacity="0.30"/>
<stop offset="0.033" stop-color="#000" stop-opacity="0.32"/>
<stop offset="0.067" stop-color="#000" stop-opacity="0.81"/>
<stop offset="0.100" stop-color="#000" stop-opacity="0.32"/>
<stop offset="0.133" stop-color="#000" stop-opacity="0.61"/>
<stop offset="0.167" stop-color="#000" stop-opacity="0.66"/>
<stop offset="0.200" stop-color="#000" stop-opacity="0.56"/>
<stop offset="0.233" stop-color="#000" stop-opacity="0.51"/>
<stop offset="0.267" stop-color="#000" stop-opacity="0.96"/>
<stop offset="0.300" stop-color="#000" stop-opacity="0.97"/>
<stop offset="0.333" stop-color="#000" stop-opacity="0.83"/>
<stop offset="0.367" stop-color="#000" stop-opacity="0.68"/>
<stop offset="0.400" stop-color="#000" stop-opacity="0.97"/>
<stop offset="0.433" stop-color="#000" stop-opacity="0.79"/>
<stop offset="0.467" stop-color="#000" stop-opacity="0.46"/>
<stop offset="0.500" stop-color="#000" stop-opacity="0.40"/>
<stop offset="0.533" stop-color="#000" stop-opacity="0.40"/>
<stop offset="0.567" stop-color="#000" stop-opacity="0.37"/>
<stop offset="0.600" stop-color="#000" stop-opacity="0.57"/>
<stop offset="0.633" stop-color="#000" stop-opacity="0.73"/>
<stop offset="0.667" stop-color="#000" stop-opacity="0.45"/>
<stop offset="0.700" stop-color="#000" stop-opacity="0.36"/>
<stop offset="0.733" stop-color="#000" stop-opacity="0.54"/>
<stop offset="0.767" stop-color="#000" stop-opacity="0.62"/>
<stop offset="0.800" stop-color="#000" stop-opacity="0.92"/>
<stop offset="0.833" stop-color="#000" stop-opacity="0.92"/>
<stop offset="0.867" stop-color="#000" stop-opacity="0.88"/>
<stop offset="0.900" stop-color="#000" stop-opacity="0.48"/>
<stop offset="0.933" stop-color="#000" stop-opacity="0.88"/>
<stop offset="0.967" stop-color="#000" stop-opacity="0.50"/>
<stop offset="1.000" stop-color="#000" stop-opacity="0.71"/>
</linearGradient>
<linearGradient id="dk19" x1="0" x2="1" y1="0" y2="0">
<stop offset="0.000" stop-color="#000" stop-opacity="0.67"/>
<stop offset="0.033" stop-color="#000" stop-opacity="0.46"/>
<stop offset="0.067" stop-color="#000" stop-opacity="0.68"/>
<stop offset="0.100" stop-color="#000" stop-opacity="0.48"/>
<stop offset="0.133" stop-color="#000" stop-opacity="0.86"/>
<stop offset="0.167" stop-color="#000" stop-opacity="0.46"/>
<stop offset="0.200" stop-color="#000" stop-opacity="0.85"/>
<stop offset="0.233" stop-color="#000" stop-opacity="0.43"/>
<stop offset="0.267" stop-color="#000" stop-opacity="0.31"/>
<stop offset="0.300" stop-color="#000" stop-opacity="0.61"/>
<stop offset="0.333" stop-color="#000" stop-opacity="0.92"/>
<stop offset="0.367" stop-color="#000" stop-opacity="0.74"/>
<stop offset="0.400" stop-color="#000" stop-opacity="0.48"/>
<stop offset="0.433" stop-color="#000" stop-opacity="0.65"/>
<stop offset="0.467" stop-color="#000" stop-opacity="0.53"/>
<stop offset="0.500" stop-color="#000" stop-opacity="0.76"/>
<stop offset="0.533" stop-color="#000" stop-opacity="0.50"/>
<stop offset="0.567" stop-color="#000" stop-opacity="0.42"/>
<stop offset="0.600" stop-color="#000" stop-opacity="1.00"/>
<stop offset="0.633" stop-color="#000" stop-opacity="0.33"/>
<stop offset="0.667" stop-color="#000" stop-opacity="0.40"/>
<stop offset="0.700" stop-color="#000" stop-opacity="0.52"/>
<stop offset="0.733" stop-color="#000" stop-opacity="0.53"/>
<stop offset="0.767" stop-color="#000" stop-opacity="0.69"/>
<stop offset="0.800" stop-color="#000" stop-opacity="0.65"/>
<stop offset="0.833" stop-color="#000" stop-opacity="0.41"/>
<stop offset="0.867" stop-color="#000" stop-opacity="0.88"/>
<stop offset="0.900" stop-color="#000" stop-opacity="0.80"/>
<stop offset="0.933" stop-color="#000" stop-opacity="0.43"/>
<stop offset="0.967" stop-color="#000" stop-opacity="0.42"/>
<stop offset="1.000" stop-color="#000" stop-opacity="0.38"/>
</linearGradient>
<linearGradient id="dk20" x1="0" x2="1" y1="0" y2="0">
<stop offset="0.000" stop-color="#000" stop-opacity="0.66"/>
<stop offset="0.033" stop-color="#000" stop-opacity="0.75"/>
<stop offset="0.067" stop-color="#000" stop-opacity="0.80"/>
<stop offset="0.100" stop-color="#000" stop-opacity="0.47"/>
<stop offset="0.133" stop-color="#000" stop-opacity="0.91"/>
<stop offset="0.167" stop-color="#000" stop-opacity="0.93"/>
<stop offset="0.200" stop-color="#000" stop-opacity="0.63"/>
<stop offset="0.233" stop-color="#000" stop-opacity="0.38"/>
<stop offset="0.267" stop-color="#000" stop-opacity="0.42"/>
<stop offset="0.300" stop-color="#000" stop-opacity="0.80"/>
<stop offset="0.333" stop-color="#000" stop-opacity="0.35"/>
<stop offset="0.367" stop-color="#000" stop-opacity="0.74"/>
<stop offset="0.400" stop-color="#000" stop-opacity="0.80"/>
<stop offset="0.433" stop-color="#000" stop-opacity="0.31"/>
<stop offset="0.467" stop-color="#000" stop-opacity="0.40"/>
<stop offset="0.500" stop-color="#000" stop-opacity="0.47"/>
<stop offset="0.533" stop-color="#000" stop-opacity="0.61"/>
<stop offset="0.567" stop-color="#000" stop-opacity="0.90"/>
<stop offset="0.600" stop-color="#000" stop-opacity="0.86"/>
<stop offset="0.633" stop-color="#000" stop-opacity="0.57"/>
<stop offset="0.667" stop-color="#000" stop-opacity="0.31"/>
<stop offset="0.700" stop-color="#000" stop-opacity="0.68"/>
<stop offset="0.733" stop-color="#000" stop-opacity="0.44"/>
<stop offset="0.767" stop-color="#000" stop-opacity="0.50"/>
<stop offset="0.800" stop-color="#000" stop-opacity="0.95"/>
<stop offset="0.833" stop-color="#000" stop-opacity="0.50"/>
<stop offset="0.867" stop-color="#000" stop-opacity="0.58"/>
<stop offset="0.900" stop-color="#000" stop-opacity="0.77"/>
<stop offset="0.933" stop-color="#000" stop-opacity="0.95"/>
<stop offset="0.967" stop-color="#000" stop-opacity="0.34"/>
<stop offset="1.000" stop-color="#000" stop-opacity="0.71"/>
</linearGradient>
<linearGradient id="dk21" x1="0" x2="1" y1="0" y2="0">
<stop offset="0.000" stop-color="#000" stop-opacity="0.76"/>
<stop offset="0.033" stop-color="#000" stop-opacity="0.39"/>
<stop offset="0.067" stop-color="#000" stop-opacity="0.37"/>
<stop offset="0.100" stop-color="#000" stop-opacity="0.53"/>
<stop offset="0.133" stop-color="#000" stop-opacity="0.54"/>
<stop offset="0.167" stop-color="#000" stop-opacity="0.79"/>
<stop offset="0.200" stop-color="#000" stop-opacity="0.98"/>
<stop offset="0.233" stop-color="#000" stop-opacity="0.76"/>
<stop offset="0.267" stop-color="#000" stop-opacity="0.60"/>
<stop offset="0.300" stop-color="#000" stop-opacity="1.00"/>
<stop offset="0.333" stop-color="#000" stop-opacity="0.95"/>
<stop offset="0.367" stop-color="#000" stop-opacity="0.61"/>
<stop offset="0.400" stop-color="#000" stop-opacity="0.63"/>
<stop offset="0.433" stop-color="#000" stop-opacity="0.66"/>
<stop offset="0.467" stop-color="#000" stop-opacity="0.37"/>
<stop offset="0.500" stop-color="#000" stop-opacity="0.75"/>
<stop offset="0.533" stop-color="#000" stop-opacity="0.80"/>
<stop offset="0.567" stop-color="#000" stop-opacity="0.63"/>
<stop offset="0.600" stop-color="#000" stop-opacity="0.71"/>
<stop offset="0.633" stop-color="#000" stop-opacity="0.94"/>
<stop offset="0.667" stop-color="#000" stop-opacity="0.74"/>
<stop offset="0.700" stop-color="#000" stop-opacity="0.78"/>
<stop offset="0.733" stop-color="#000" stop-opacity="0.92"/>
<stop offset="0.767" stop-color="#000" stop-opacity="0.81"/>
<stop offset="0.800" stop-color="#000" stop-opacity="0.62"/>
<stop offset="0.833" stop-color="#000" stop-opacity="0.97"/>
<stop offset="0.867" stop-color="#000" stop-opacity="0.96"/>
<stop offset="0.900" stop-color="#000" stop-opacity="0.36"/>
<stop offset="0.933" stop-color="#000" stop-opacity="1.00"/>
<stop offset="0.967" stop-color="#000" stop-opacity="0.42"/>
<stop offset="1.000" stop-color="#000" stop-opacity="0.92"/>
</linearGradient>
<linearGradient id="dk22" x1="0" x2="1" y1="0" y2="0">
<stop offset="0.000" stop-color="#000" stop-opacity="0.75"/>
<stop offset="0.033" stop-color="#000" stop-opacity="0.85"/>
<stop offset="0.067" stop-color="#000" stop-opacity="0.54"/>
<stop offset="0.100" stop-color="#000" stop-opacity="0.50"/>
<stop offset="0.133" stop-color="#000" stop-opacity="0.42"/>
<stop offset="0.167" stop-color="#000" stop-opacity="0.39"/>
<stop offset="0.200" stop-color="#000" stop-opacity="0.38"/>
<stop offset="0.233" stop-color="#000" stop-opacity="0.42"/>
<stop offset="0.267" stop-color="#000" stop-opacity="0.87"/>
<stop offset="0.300" stop-color="#000" stop-opacity="0.68"/>
<stop offset="0.333" stop-color="#000" stop-opacity="0.90"/>
<stop offset="0.367" stop-color="#000" stop-opacity="0.99"/>
<stop offset="0.400" stop-color="#000" stop-opacity="0.61"/>
<stop offset="0.433" stop-color="#000" stop-opacity="0.42"/>
<stop offset="0.467" stop-color="#000" stop-opacity="0.93"/>
<stop offset="0.500" stop-color="#000" stop-opacity="0.38"/>
<stop offset="0.533" stop-color="#000" stop-opacity="0.66"/>
<stop offset="0.567" stop-color="#000" stop-opacity="0.89"/>
<stop offset="0.600" stop-color="#000" stop-opacity="0.39"/>
<stop offset="0.633" stop-color="#000" stop-opacity="0.49"/>
<stop offset="0.667" stop-color="#000" stop-opacity="0.76"/>
<stop offset="0.700" stop-color="#000" stop-opacity="0.37"/>
<stop offset="0.733" stop-color="#000" stop-opacity="0.91"/>
<stop offset="0.767" stop-color="#000" stop-opacity="0.82"/>
<stop offset="0.800" stop-color="#000" stop-opacity="0.69"/>
<stop offset="0.833" stop-color="#000" stop-opacity="0.84"/>
<stop offset="0.867" stop-color="#000" stop-opacity="0.40"/>
<stop offset="0.900" stop-color="#000" stop-opacity="0.89"/>
<stop offset="0.933" stop-color="#000" stop-opacity="0.68"/>
<stop offset="0.967" stop-color="#000" stop-opacity="0.57"/>
<stop offset="1.000" stop-color="#000" stop-opacity="0.87"/>
</linearGradient>
<linearGradient id="dk23" x1="0" x2="1" y1="0" y2="0">
<stop offset="0.000" stop-color="#000" stop-opacity="0.62"/>
<stop offset="0.033" stop-color="#000" stop-opacity="0.33"/>
<stop offset="0.067" stop-color="#000" stop-opacity="0.79"/>
<stop offset="0.100" stop-color="#000" stop-opacity="0.33"/>
<stop offset="0.133" stop-color="#000" stop-opacity="0.69"/>
<stop offset="0.167" stop-color="#000" stop-opacity="0.45"/>
<stop offset="0.200" stop-color="#000" stop-opacity="0.59"/>
<stop offset="0.233" stop-color="#000" stop-opacity="0.59"/>
<stop offset="0.267" stop-color="#000" stop-opacity="0.79"/>
<stop offset="0.300" stop-color="#000" stop-opacity="0.75"/>
<stop offset="0.333" stop-color="#000" stop-opacity="0.55"/>
<stop offset="0.367" stop-color="#000" stop-opacity="0.46"/>
<stop offset="0.400" stop-color="#000" stop-opacity="0.84"/>
<stop offset="0.433" stop-color="#000" stop-opacity="0.35"/>
<stop offset="0.467" stop-color="#000" stop-opacity="0.71"/>
<stop offset="0.500" stop-color="#000" stop-opacity="0.81"/>
<stop offset="0.533" stop-color="#000" stop-opacity="0.74"/>
<stop offset="0.567" stop-color="#000" stop-opacity="0.32"/>
<stop offset="0.600" stop-color="#000" stop-opacity="0.36"/>
<stop offset="0.633" stop-color="#000" stop-opacity="0.75"/>
<stop offset="0.667" stop-color="#000" stop-opacity="0.85"/>
<stop offset="0.700" stop-color="#000" stop-opacity="0.74"/>
<stop offset="0.733" stop-color="#000" stop-opacity="0.99"/>
<stop offset="0.767" stop-color="#000" stop-opacity="0.79"/>
<stop offset="0.800" stop-color="#000" stop-opacity="0.60"/>
<stop offset="0.833" stop-color="#000" stop-opacity="0.97"/>
<stop offset="0.867" stop-color="#000" stop-opacity="0.47"/>
<stop offset="0.900" stop-color="#000" stop-opacity="0.38"/>
<stop offset="0.933" stop-color="#000" stop-opacity="0.57"/>
<stop offset="0.967" stop-color="#000" stop-opacity="0.32"/>
<stop offset="1.000" stop-color="#000" stop-opacity="0.70"/>
</linearGradient>
<linearGradient id="dk24" x1="0" x2="1" y1="0" y2="0">
<stop offset="0.000" stop-color="#000" stop-opacity="0.67"/>
<stop offset="0.033" stop-color="#000" stop-opacity="0.43"/>
<stop offset="0.067" stop-color="#000" stop-opacity="0.73"/>
<stop offset="0.100" stop-color="#000" stop-opacity="0.63"/>
<stop offset="0.133" stop-color="#000" stop-opacity="0.79"/>
<stop offset="0.167" stop-color="#000" stop-opacity="0.85"/>
<stop offset="0.200" stop-color="#000" stop-opacity="0.86"/>
<stop offset="0.233" stop-color="#000" stop-opacity="0.78"/>
<stop offset="0.267" stop-color="#000" stop-opacity="0.37"/>
<stop offset="0.300" stop-color="#000" stop-opacity="0.70"/>
<stop offset="0.333" stop-color="#000" stop-opacity="0.77"/>
<stop offset="0.367" stop-color="#000" stop-opacity="0.44"/>
<stop offset="0.400" stop-color="#000" stop-opacity="0.56"/>
<stop offset="0.433" stop-color="#000" stop-opacity="0.66"/>
<stop offset="0.467" stop-color="#000" stop-opacity="0.49"/>
<stop offset="0.500" stop-color="#000" stop-opacity="0.36"/>
<stop offset="0.533" stop-color="#000" stop-opacity="0.50"/>
<stop offset="0.567" stop-color="#000" stop-opacity="0.59"/>
<stop offset="0.600" stop-color="#000" stop-opacity="0.84"/>
<stop offset="0.633" stop-color="#000" stop-opacity="0.99"/>
<stop offset="0.667" stop-color="#000" stop-opacity="0.89"/>
<stop offset="0.700" stop-color="#000" stop-opacity="0.92"/>
<stop offset="0.733" stop-color="#000" stop-opacity="0.99"/>
<stop offset="0.767" stop-color="#000" stop-opacity="0.66"/>
<stop offset="0.800" stop-color="#000" stop-opacity="0.73"/>
<stop offset="0.833" stop-color="#000" stop-opacity="0.32"/>
<stop offset="0.867" stop-color="#000" stop-opacity="0.80"/>
<stop offset="0.900" stop-color="#000" stop-opacity="0.89"/>
<stop offset="0.933" stop-color="#000" stop-opacity="0.54"/>
<stop offset="0.967" stop-color="#000" stop-opacity="0.73"/>
<stop offset="1.000" stop-color="#000" stop-opacity="0.37"/>
</linearGradient>
<linearGradient id="dk25" x1="0" x2="1" y1="0" y2="0">
<stop offset="0.000" stop-color="#000" stop-opacity="0.96"/>
<stop offset="0.033" stop-color="#000" stop-opacity="0.60"/>
<stop offset="0.067" stop-color="#000" stop-opacity="0.62"/>
<stop offset="0.100" stop-color="#000" stop-opacity="0.46"/>
<stop offset="0.133" stop-color="#000" stop-opacity="0.91"/>
<stop offset="0.167" stop-color="#000" stop-opacity="0.97"/>
<stop offset="0.200" stop-color="#000" stop-opacity="0.59"/>
<stop offset="0.233" stop-color="#000" stop-opacity="0.67"/>
<stop offset="0.267" stop-color="#000" stop-opacity="0.50"/>
<stop offset="0.300" stop-color="#000" stop-opacity="0.79"/>
<stop offset="0.333" stop-color="#000" stop-opacity="0.73"/>
<stop offset="0.367" stop-color="#000" stop-opacity="0.89"/>
<stop offset="0.400" stop-color="#000" stop-opacity="0.31"/>
<stop offset="0.433" stop-color="#000" stop-opacity="0.65"/>
<stop offset="0.467" stop-color="#000" stop-opacity="0.98"/>
<stop offset="0.500" stop-color="#000" stop-opacity="0.32"/>
<stop offset="0.533" stop-color="#000" stop-opacity="0.74"/>
<stop offset="0.567" stop-color="#000" stop-opacity="0.56"/>
<stop offset="0.600" stop-color="#000" stop-opacity="0.38"/>
<stop offset="0.633" stop-color="#000" stop-opacity="0.51"/>
<stop offset="0.667" stop-color="#000" stop-opacity="0.97"/>
<stop offset="0.700" stop-color="#000" stop-opacity="0.45"/>
<stop offset="0.733" stop-color="#000" stop-opacity="0.63"/>
<stop offset="0.767" stop-color="#000" stop-opacity="0.91"/>
<stop offset="0.800" stop-color="#000" stop-opacity="0.38"/>
<stop offset="0.833" stop-color="#000" stop-opacity="0.32"/>
<stop offset="0.867" stop-color="#000" stop-opacity="0.72"/>
<stop offset="0.900" stop-color="#000" stop-opacity="0.74"/>
<stop offset="0.933" stop-color="#000" stop-opacity="0.33"/>
<stop offset="0.967" stop-color="#000" stop-opacity="0.89"/>
<stop offset="1.000" stop-color="#000" stop-opacity="0.84"/>
</linearGradient>
<linearGradient id="dk26" x1="0" x2="1" y1="0" y2="0">
<stop offset="0.000" stop-color="#000" stop-opacity="0.72"/>
<stop offset="0.033" stop-color="#000" stop-opacity="0.47"/>
<stop offset="0.067" stop-color="#000" stop-opacity="0.95"/>
<stop offset="0.100" stop-color="#000" stop-opacity="0.45"/>
<stop offset="0.133" stop-color="#000" stop-opacity="1.00"/>
<stop offset="0.167" stop-color="#000" stop-opacity="0.69"/>
<stop offset="0.200" stop-color="#000" stop-opacity="0.94"/>
<stop offset="0.233" stop-color="#000" stop-opacity="0.68"/>
<stop offset="0.267" stop-color="#000" stop-opacity="0.72"/>
<stop offset="0.300" stop-color="#000" stop-opacity="0.96"/>
<stop offset="0.333" stop-color="#000" stop-opacity="0.61"/>
<stop offset="0.367" stop-color="#000" stop-opacity="0.52"/>
<stop offset="0.400" stop-color="#000" stop-opacity="0.98"/>
<stop offset="0.433" stop-color="#000" stop-opacity="1.00"/>
<stop offset="0.467" stop-color="#000" stop-opacity="0.39"/>
<stop offset="0.500" stop-color="#000" stop-opacity="0.90"/>
<stop offset="0.533" stop-color="#000" stop-opacity="0.83"/>
<stop offset="0.567" stop-color="#000" stop-opacity="0.45"/>
<stop offset="0.600" stop-color="#000" stop-opacity="0.46"/>
<stop offset="0.633" stop-color="#000" stop-opacity="0.34"/>
<stop offset="0.667" stop-color="#000" stop-opacity="0.89"/>
<stop offset="0.700" stop-color="#000" stop-opacity="0.36"/>
<stop offset="0.733" stop-color="#000" stop-opacity="0.89"/>
<stop offset="0.767" stop-color="#000" stop-opacity="0.86"/>
<stop offset="0.800" stop-color="#000" stop-opacity="0.99"/>
<stop offset="0.833" stop-color="#000" stop-opacity="0.38"/>
<stop offset="0.867" stop-color="#000" stop-opacity="0.87"/>
<stop offset="0.900" stop-color="#000" stop-opacity="0.36"/>
<stop offset="0.933" stop-color="#000" stop-opacity="0.38"/>
<stop offset="0.967" stop-color="#000" stop-opacity="0.89"/>
<stop offset="1.000" stop-color="#000" stop-opacity="0.40"/>
</linearGradient>
<linearGradient id="dk27" x1="0" x2="1" y1="0" y2="0">
<stop offset="0.000" stop-color="#000" stop-opacity="0.82"/>
<stop offset="0.033" stop-color="#000" stop-opacity="0.99"/>
<stop offset="0.067" stop-color="#000" stop-opacity="0.64"/>
<stop offset="0.100" stop-color="#000" stop-opacity="0.60"/>
<stop offset="0.133" stop-color="#000" stop-opacity="0.93"/>
<stop offset="0.167" stop-color="#000" stop-opacity="0.75"/>
<stop offset="0.200" stop-color="#000" stop-opacity="0.99"/>
<stop offset="0.233" stop-color="#000" stop-opacity="0.78"/>
<stop offset="0.267" stop-color="#000" stop-opacity="0.61"/>
<stop offset="0.300" stop-color="#000" stop-opacity="0.33"/>
<stop offset="0.333" stop-color="#000" stop-opacity="0.92"/>
<stop offset="0.367" stop-color="#000" stop-opacity="0.83"/>
<stop offset="0.400" stop-color="#000" stop-opacity="0.40"/>
<stop offset="0.433" stop-color="#000" stop-opacity="0.78"/>
<stop offset="0.467" stop-color="#000" stop-opacity="0.49"/>
<stop offset="0.500" stop-color="#000" stop-opacity="0.61"/>
<stop offset="0.533" stop-color="#000" stop-opacity="0.41"/>
<stop offset="0.567" stop-color="#000" stop-opacity="0.36"/>
<stop offset="0.600" stop-color="#000" stop-opacity="0.63"/>
<stop offset="0.633" stop-color="#000" stop-opacity="0.80"/>
<stop offset="0.667" stop-color="#000" stop-opacity="0.80"/>
<stop offset="0.700" stop-color="#000" stop-opacity="0.90"/>
<stop offset="0.733" stop-color="#000" stop-opacity="0.94"/>
<stop offset="0.767" stop-color="#000" stop-opacity="0.82"/>
<stop offset="0.800" stop-color="#000" stop-opacity="0.47"/>
<stop offset="0.833" stop-color="#000" stop-opacity="0.84"/>
<stop offset="0.867" stop-color="#000" stop-opacity="0.81"/>
<stop offset="0.900" stop-color="#000" stop-opacity="0.38"/>
<stop offset="0.933" stop-color="#000" stop-opacity="0.31"/>
<stop offset="0.967" stop-color="#000" stop-opacity="0.94"/>
<stop offset="1.000" stop-color="#000" stop-opacity="0.42"/>
</linearGradient>
<linearGradient id="dk28" x1="0" x2="1" y1="0" y2="0">
<stop offset="0.000" stop-color="#000" stop-opacity="0.91"/>
<stop offset="0.033" stop-color="#000" stop-opacity="0.96"/>
<stop offset="0.067" stop-color="#000" stop-opacity="0.59"/>
<stop offset="0.100" stop-color="#000" stop-opacity="0.67"/>
<stop offset="0.133" stop-color="#000" stop-opacity="0.35"/>
<stop offset="0.167" stop-color="#000" stop-opacity="0.35"/>
<stop offset="0.200" stop-color="#000" stop-opacity="0.90"/>
<stop offset="0.233" stop-color="#000" stop-opacity="0.74"/>
<stop offset="0.267" stop-color="#000" stop-opacity="0.48"/>
<stop offset="0.300" stop-color="#000" stop-opacity="0.43"/>
<stop offset="0.333" stop-color="#000" stop-opacity="0.35"/>
<stop offset="0.367" stop-color="#000" stop-opacity="0.84"/>
<stop offset="0.400" stop-color="#000" stop-opacity="0.49"/>
<stop offset="0.433" stop-color="#000" stop-opacity="0.34"/>
<stop offset="0.467" stop-color="#000" stop-opacity="0.88"/>
<stop offset="0.500" stop-color="#000" stop-opacity="0.52"/>
<stop offset="0.533" stop-color="#000" stop-opacity="0.42"/>
<stop offset="0.567" stop-color="#000" stop-opacity="0.70"/>
<stop offset="0.600" stop-color="#000" stop-opacity="0.56"/>
<stop offset="0.633" stop-color="#000" stop-opacity="0.67"/>
<stop offset="0.667" stop-color="#000" stop-opacity="0.62"/>
<stop offset="0.700" stop-color="#000" stop-opacity="0.68"/>
<stop offset="0.733" stop-color="#000" stop-opacity="0.49"/>
<stop offset="0.767" stop-color="#000" stop-opacity="0.65"/>
<stop offset="0.800" stop-color="#000" stop-opacity="0.97"/>
<stop offset="0.833" stop-color="#000" stop-opacity="0.45"/>
<stop offset="0.867" stop-color="#000" stop-opacity="0.59"/>
<stop offset="0.900" stop-color="#000" stop-opacity="0.62"/>
<stop offset="0.933" stop-color="#000" stop-opacity="0.62"/>
<stop offset="0.967" stop-color="#000" stop-opacity="0.54"/>
<stop offset="1.000" stop-color="#000" stop-opacity="0.74"/>
</linearGradient>
<linearGradient id="dk29" x1="0" x2="1" y1="0" y2="0">
<stop offset="0.000" stop-color="#000" stop-opacity="0.95"/>
<stop offset="0.033" stop-color="#000" stop-opacity="0.41"/>
<stop offset="0.067" stop-color="#000" stop-opacity="0.61"/>
<stop offset="0.100" stop-color="#000" stop-opacity="0.99"/>
<stop offset="0.133" stop-color="#000" stop-opacity="0.30"/>
<stop offset="0.167" stop-color="#000" stop-opacity="0.79"/>
<stop offset="0.200" stop-color="#000" stop-opacity="0.56"/>
<stop offset="0.233" stop-color="#000" stop-opacity="0.65"/>
<stop offset="0.267" stop-color="#000" stop-opacity="0.81"/>
<stop offset="0.300" stop-color="#000" stop-opacity="0.48"/>
<stop offset="0.333" stop-color="#000" stop-opacity="0.35"/>
<stop offset="0.367" stop-color="#000" stop-opacity="0.75"/>
<stop offset="0.400" stop-color="#000" stop-opacity="0.99"/>
<stop offset="0.433" stop-color="#000" stop-opacity="0.62"/>
<stop offset="0.467" stop-color="#000" stop-opacity="0.95"/>
<stop offset="0.500" stop-color="#000" stop-opacity="0.66"/>
<stop offset="0.533" stop-color="#000" stop-opacity="0.78"/>
<stop offset="0.567" stop-color="#000" stop-opacity="0.76"/>
<stop offset="0.600" stop-color="#000" stop-opacity="0.84"/>
<stop offset="0.633" stop-color="#000" stop-opacity="0.76"/>
<stop offset="0.667" stop-color="#000" stop-opacity="0.78"/>
<stop offset="0.700" stop-color="#000" stop-opacity="0.80"/>
<stop offset="0.733" stop-color="#000" stop-opacity="0.48"/>
<stop offset="0.767" stop-color="#000" stop-opacity="0.92"/>
<stop offset="0.800" stop-color="#000" stop-opacity="0.73"/>
<stop offset="0.833" stop-color="#000" stop-opacity="0.65"/>
<stop offset="0.867" stop-color="#000" stop-opacity="0.74"/>
<stop offset="0.900" stop-color="#000" stop-opacity="0.54"/>
<stop offset="0.933" stop-color="#000" stop-opacity="0.47"/>
<stop offset="0.967" stop-color="#000" stop-opacity="0.94"/>
<stop offset="1.000" stop-color="#000" stop-opacity="0.45"/>
</linearGradient>
</defs>
<rect x="0" y="0" width="1916" height="1" fill="url(#st18)" opacity="0.64"/>
<rect x="0" y="1" width="1916" height="1" fill="url(#dk25)" opacity="0.62"/>
<rect x="0" y="3" width="1916" height="1" fill="url(#dk15)" opacity="0.85"/>
<rect x="0" y="4" width="1916" height="1" fill="url(#dk16)" opacity="0.94"/>
<rect x="0" y="5" width="1916" height="1" fill="url(#st14)" opacity="0.62"/>
<rect x="0" y="6" width="1916" height="1" fill="url(#dk10)" opacity="0.73"/>
<rect x="0" y="9" width="1916" height="1" fill="url(#st16)" opacity="0.85"/>
<rect x="0" y="10" width="1916" height="1" fill="url(#dk17)" opacity="0.56"/>
<rect x="0" y="11" width="1916" height="1" fill="url(#dk6)" opacity="0.57"/>
<rect x="0" y="13" width="1916" height="1" fill="url(#st14)" opacity="0.67"/>
<rect x="0" y="15" width="1916" height="1" fill="url(#dk24)" opacity="0.92"/>
<rect x="0" y="16" width="1916" height="1" fill="url(#dk19)" opacity="0.62"/>
<rect x="0" y="19" width="1916" height="1" fill="url(#dk6)" opacity="0.81"/>
<rect x="0" y="21" width="1916" height="1" fill="url(#st20)" opacity="0.65"/>
<rect x="0" y="22" width="1916" height="1" fill="url(#st3)" opacity="0.72"/>
<rect x="0" y="23" width="1916" height="1" fill="url(#st22)" opacity="0.79"/>
<rect x="0" y="25" width="1916" height="1" fill="url(#dk10)" opacity="0.64"/>
<rect x="0" y="26" width="1916" height="1" fill="url(#dk1)" opacity="0.90"/>
<rect x="0" y="27" width="1916" height="1" fill="url(#dk12)" opacity="0.89"/>
<rect x="0" y="28" width="1916" height="1" fill="url(#st26)" opacity="0.75"/>
<rect x="0" y="29" width="1916" height="1" fill="url(#dk5)" opacity="0.53"/>
<rect x="0" y="31" width="1916" height="1" fill="url(#dk26)" opacity="0.78"/>
<rect x="0" y="33" width="1916" height="1" fill="url(#st14)" opacity="0.98"/>
<rect x="0" y="34" width="1916" height="1" fill="url(#dk28)" opacity="0.84"/>
<rect x="0" y="35" width="1916" height="1" fill="url(#dk11)" opacity="0.88"/>
<rect x="0" y="39" width="1916" height="1" fill="url(#dk17)" opacity="0.60"/>
<rect x="0" y="41" width="1916" height="1" fill="url(#st19)" opacity="0.76"/>
<rect x="0" y="42" width="1916" height="1" fill="url(#st9)" opacity="0.50"/>
<rect x="0" y="45" width="1916" height="1" fill="url(#st11)" opacity="0.76"/>
<rect x="0" y="46" width="1916" height="1" fill="url(#dk14)" opacity="0.85"/>
<rect x="0" y="48" width="1916" height="1" fill="url(#st24)" opacity="0.51"/>
<rect x="0" y="49" width="1916" height="1" fill="url(#st6)" opacity="0.95"/>
<rect x="0" y="53" width="1916" height="1" fill="url(#dk6)" opacity="0.74"/>
<rect x="0" y="54" width="1916" height="1" fill="url(#dk16)" opacity="0.89"/>
<rect x="0" y="54.6" width="1916" height="1.4" fill="#0a0f14"/>
<g>
<polygon points="21.50,6.40 81.60,6.40 82.06,7.40 76.00,25.40 14.20,25.40 20.26,7.40" fill="#f26b10"/>
<polygon points="22.09,8.50 26.09,8.50 21.00,23.60 17.00,23.60" fill="#0c0c0c"/>
<polygon points="27.69,8.50 40.29,8.50 41.52,10.20 37.58,21.90 35.20,23.60 22.60,23.60" fill="#0c0c0c"/>
<polygon points="31.31,12.00 38.11,12.00 35.59,19.50 28.79,19.50" fill="#f26b10"/>
<polygon points="45.29,8.50 59.89,8.50 61.12,10.20 58.52,17.90 46.52,17.90 45.78,20.10 57.78,20.10 56.60,23.60 41.80,23.60 40.78,21.90 44.72,10.20" fill="#0c0c0c"/>
<polygon points="48.61,12.00 56.31,12.00 55.57,14.20 47.87,14.20" fill="#f26b10"/>
<polygon points="63.49,8.50 77.89,8.50 79.12,10.20 74.60,23.60 60.00,23.60 58.98,21.90 61.57,14.20 73.57,14.20 74.31,12.00 62.31,12.00" fill="#0c0c0c"/>
<polygon points="65.03,17.30 72.43,17.30 71.52,20.00 64.12,20.00" fill="#f26b10"/>
</g>
<text x="83.86" y="23.90" font-family="Liberation Sans" font-size="21" font-weight="bold" font-style="italic" fill="#ffffff" textLength="72.29" lengthAdjust="spacingAndGlyphs">StatiCa</text>
<circle cx="159.8" cy="11" r="2.6" fill="none" stroke="#cfcfcf" stroke-width="0.7"/>
<text x="158.3" y="12.6" font-family="Liberation Sans" font-size="4.2" font-weight="bold" fill="#cfcfcf">R</text>
<text x="180.69" y="21.90" font-family="Liberation Sans" font-size="15.8" font-weight="bold" font-style="italic" fill="#ffffff" textLength="55.52" lengthAdjust="spacingAndGlyphs">DETAIL</text>
<text x="13.4" y="41.8" font-family="Liberation Sans" font-size="10.9" font-weight="bold" font-style="italic" fill="#f2f2f2" textLength="137" lengthAdjust="spacingAndGlyphs"><tspan font-size="10.2">C</tspan>alculate yesterday’s estimates</text>
<text x="859.99" y="21.00" font-family="Liberation Sans" font-size="13.5" font-weight="normal" font-style="normal" fill="#ececec" textLength="237.82" lengthAdjust="spacingAndGlyphs">Superimposed dead load stage.ideaDet</text>
<rect x="1841" y="8.1" width="16.9" height="16.6" rx="2" fill="#e6e6e6"/>
<rect x="1845" y="18.8" width="9" height="2.3" fill="#111"/>
<rect x="1868" y="8.1" width="16.8" height="16.6" rx="2" fill="#e6e6e6"/>
<rect x="1872.7" y="12.7" width="7.8" height="7.5" fill="none" stroke="#111" stroke-width="1.5"/>
<rect x="1895" y="8.1" width="17" height="16.6" rx="2" fill="#e8661f"/>
<path d="M1899.6,12.4 L1907.4,20.4 M1907.4,12.4 L1899.6,20.4" stroke="#111" stroke-width="2.1"/>
<rect x="1630" y="33.2" width="200" height="17.7" fill="#ffffff"/>
<circle cx="1818.2" cy="40" r="4.7" fill="none" stroke="#b4b4b4" stroke-width="1.7"/>
<path d="M1821.6,43.4 L1827.4,49.2" stroke="#b4b4b4" stroke-width="2.1"/>
<rect x="1895" y="33.2" width="17" height="16.8" rx="2" fill="#e8661f"/>
<rect x="1903.1" y="36.9" width="2" height="1.8" fill="#111"/>
<rect x="1903.1" y="40.6" width="2" height="5.4" fill="#111"/>
<rect x="0" y="56" width="1916" height="5" fill="#f07022"/>
<path d="M215,56.5 V38 Q215,33.1 220,33.1 H310 Q315,33.1 315,38 V56.5 Z" fill="#9b9b9b"/>
<text x="244.73" y="48.80" font-family="Liberation Sans" font-size="12.6" font-weight="bold" font-style="normal" fill="#ffffff" textLength="40.83" lengthAdjust="spacingAndGlyphs">Project</text>
<path d="M319,56.5 V38 Q319,33.1 324,33.1 H414 Q419,33.1 419,38 V56.5 Z" fill="#f07022"/>
<text x="349.73" y="48.80" font-family="Liberation Sans" font-size="12.6" font-weight="bold" font-style="normal" fill="#ffffff" textLength="38.73" lengthAdjust="spacingAndGlyphs">Design</text>
<path d="M422,56.5 V38 Q422,33.1 427,33.1 H517 Q522,33.1 522,38 V56.5 Z" fill="#9b9b9b"/>
<text x="457.43" y="48.80" font-family="Liberation Sans" font-size="12.6" font-weight="bold" font-style="normal" fill="#ffffff" textLength="29.53" lengthAdjust="spacingAndGlyphs">Tools</text>
<path d="M525,56.5 V38 Q525,33.1 530,33.1 H620 Q625,33.1 625,38 V56.5 Z" fill="#9b9b9b"/>
<text x="557.23" y="48.80" font-family="Liberation Sans" font-size="12.6" font-weight="bold" font-style="normal" fill="#ffffff" textLength="35.73" lengthAdjust="spacingAndGlyphs">Check</text>
<path d="M628,56.5 V38 Q628,33.1 633,33.1 H723 Q728,33.1 728,38 V56.5 Z" fill="#9b9b9b"/>
<text x="657.43" y="48.80" font-family="Liberation Sans" font-size="12.6" font-weight="bold" font-style="normal" fill="#ffffff" textLength="40.13" lengthAdjust="spacingAndGlyphs">Report</text>
<path d="M731,56.5 V38 Q731,33.1 736,33.1 H826 Q831,33.1 831,38 V56.5 Z" fill="#9b9b9b"/>
<text x="754.73" y="48.80" font-family="Liberation Sans" font-size="12.6" font-weight="bold" font-style="normal" fill="#ffffff" textLength="51.83" lengthAdjust="spacingAndGlyphs">Materials</text>
<rect x="0" y="61" width="1916" height="96" fill="#ffffff"/>
<rect x="0" y="157" width="1916" height="1" fill="#b8b8b8"/>
<rect x="145.1" y="63" width="1" height="92" fill="#c3c3c3"/>
<rect x="264.0" y="63" width="1" height="92" fill="#c3c3c3"/>
<rect x="421.0" y="63" width="1" height="92" fill="#c3c3c3"/>
<rect x="592.0" y="63" width="1" height="92" fill="#c3c3c3"/>
<rect x="727.0" y="63" width="1" height="92" fill="#c3c3c3"/>
<rect x="812.9" y="63" width="1" height="92" fill="#c3c3c3"/>
<rect x="920.9" y="63" width="1" height="92" fill="#c3c3c3"/>
<rect x="1076.0" y="63" width="1" height="92" fill="#c3c3c3"/>
<rect x="1325.9" y="63" width="1" height="92" fill="#c3c3c3"/>
<rect x="504.2" y="68" width="46.6" height="69.8" fill="#dcdcdc"/>
<rect x="553" y="68" width="33.8" height="69.8" fill="#dcdcdc"/>
<rect x="636" y="68" width="35.9" height="69.8" fill="#dcdcdc"/>
<rect x="674.2" y="68" width="47.8" height="19.6" fill="#dcdcdc"/>
<rect x="6" y="67" width="59" height="30" fill="#f07022"/>
<text x="11.95" y="87.20" font-family="Liberation Sans" font-size="12.2" font-weight="normal" font-style="normal" fill="#ffffff" textLength="31.60" lengthAdjust="spacingAndGlyphs">DRM1</text>
<path d="M55.2,81.2 L60.2,81.2 L57.7,84.4 Z" fill="#ffffff"/>
<path d="M85.5,74.6 H81.4 L73.6,82.2 V100.5 H95.3 V84.4" fill="none" stroke="#1a1a1a" stroke-width="1.3" stroke-linejoin="miter" />
<path d="M81.4,74.6 V81.6 H73.6" fill="none" stroke="#1a1a1a" stroke-width="1.1" stroke-linejoin="miter" />
<path d="M95.5,69 V80 M90,74.5 H101" fill="none" stroke="#f07022" stroke-width="1.3" stroke-linejoin="miter" />
<path d="M131.2,100.5 H109.6 V82.2 L117.4,74.6 H131.2 Z" fill="none" stroke="#1a1a1a" stroke-width="1.3" stroke-linejoin="miter" />
<path d="M117.4,74.6 V81.6 H109.6" fill="none" stroke="#1a1a1a" stroke-width="1.1" stroke-linejoin="miter" />
<path d="M122,69.6 H136.8 V96.6" fill="none" stroke="#f07022" stroke-width="1.3" stroke-linejoin="miter" />
<path d="M155.3,100.5 H172.8 A13.25,13.25 0 0 0 172.8,74 H154.6" fill="none" stroke="#1a1a1a" stroke-width="1.3" stroke-linejoin="miter" />
<path d="M159.2,69.9 L154.4,74 L159.2,78.4" fill="none" stroke="#1a1a1a" stroke-width="1.3" stroke-linejoin="miter" />
<path d="M220.8,100.5 H203.3 A13.25,13.25 0 0 1 203.3,74 H221.6" fill="none" stroke="#b5b5b5" stroke-width="1.3" stroke-linejoin="miter" />
<path d="M217,69.9 L221.8,74 L217,78.4" fill="none" stroke="#b5b5b5" stroke-width="1.3" stroke-linejoin="miter" />
<path d="M226.4,94 V100.3 H257.6 V94" fill="none" stroke="#c4c4c4" stroke-width="1.3" stroke-linejoin="miter" />
<path d="M242.7,69 V93.6 M237.8,88.6 L242.7,93.6 L247.6,88.6" fill="none" stroke="#f8c6a8" stroke-width="1.3" stroke-linejoin="miter" />
<path d="M279.9,98.3 L291.5,71.3 H301.8 L312,98.3 H305 L302.2,93.7 H289.8 L287.6,98.3 Z" fill="none" stroke="#1a1a1a" stroke-width="1.3" stroke-linejoin="miter" />
<path d="M291.5,87.4 L296.2,78 L300.9,87.4 Z" fill="none" stroke="#1a1a1a" stroke-width="1.3" stroke-linejoin="miter" />
<path d="M335.6,69.6 V87.6 H353.4 M335.6,87.6 L322.8,100" fill="none" stroke="#1a1a1a" stroke-width="1.3" stroke-linejoin="miter" />
<path d="M331.6,73.6 L335.6,69.4 L339.6,73.6 M349.4,83.6 L353.6,87.6 L349.4,91.6 M322.6,94.6 V100.2 H328.2" fill="none" stroke="#1a1a1a" stroke-width="1.3" stroke-linejoin="miter" />
<path d="M371.3,78 V96.2 M402.4,78 V96.2 M371.6,79.3 H402.1 M375.6,75.3 L371.6,79.3 L375.6,83.3 M398.1,75.3 L402.1,79.3 L398.1,83.3" fill="none" stroke="#1a1a1a" stroke-width="1.3" stroke-linejoin="miter" />
<path d="M430.3,71.3 H461.8 V80 H451.6 V100.9 H440.3 V80 H430.3 Z" fill="none" stroke="#1a1a1a" stroke-width="1.4" stroke-linejoin="miter" />
<rect x="472.3" y="69.4" width="21.6" height="31.2" rx="4" fill="none" stroke="#1a1a1a" stroke-width="1.3"/>
<circle cx="477.2" cy="73.9" r="0.9" fill="#1a1a1a"/>
<circle cx="489" cy="73.9" r="0.9" fill="#1a1a1a"/>
<circle cx="477.2" cy="96" r="1.8" fill="#1a1a1a"/>
<circle cx="489" cy="96" r="1.8" fill="#1a1a1a"/>
<path d="M512.3,84.5 V71.6 L543.6,98.3 V84.5 H512.3" fill="none" stroke="#a9a9a9" stroke-width="1.1" stroke-linejoin="miter" />
<path d="M516.2,74.9 V84.5" fill="none" stroke="#a9a9a9" stroke-width="0.9" stroke-linejoin="miter" />
<path d="M520.1,78.3 V84.5" fill="none" stroke="#a9a9a9" stroke-width="0.9" stroke-linejoin="miter" />
<path d="M524.0,81.6 V84.5" fill="none" stroke="#a9a9a9" stroke-width="0.9" stroke-linejoin="miter" />
<path d="M539.7,84.5 V95.0" fill="none" stroke="#a9a9a9" stroke-width="0.9" stroke-linejoin="miter" />
<path d="M535.8,84.5 V91.6" fill="none" stroke="#a9a9a9" stroke-width="0.9" stroke-linejoin="miter" />
<path d="M531.9,84.5 V88.3" fill="none" stroke="#a9a9a9" stroke-width="0.9" stroke-linejoin="miter" />
<path d="M560.5,69.3 V100.9 M554,94.4 H585.8" fill="none" stroke="#1a1a1a" stroke-width="1.3" stroke-linejoin="miter" />
<polygon points="603.6,84.5 620.6,84.5 620.6,89.1 614.9,89.1 614.9,100.2 609.0,100.2 609.0,89.1 603.6,89.1" fill="#ffffff" stroke="#1a1a1a" stroke-width="1.3" stroke-linejoin="round"/>
<path d="M603.6,84.5 L617.3,71.1 H633.7 L620.6,84.5" fill="none" stroke="#1a1a1a" stroke-width="1.3" stroke-linejoin="miter" />
<path d="M633.7,71.1 V75.5 L620.6,89.1 M629.1,80.6 V88.1 L614.9,100.2" fill="none" stroke="#1a1a1a" stroke-width="1.3" stroke-linejoin="miter" />
<polygon points="639.1,84.5 656.1,84.5 656.1,89.1 650.4,89.1 650.4,100.2 644.5,100.2 644.5,89.1 639.1,89.1" fill="none" stroke="#1a1a1a" stroke-width="1.3" stroke-linejoin="round"/>
<path d="M639.1,84.5 L652.8,71.1 H669.2 L656.1,84.5" fill="none" stroke="#1a1a1a" stroke-width="1.3" stroke-linejoin="miter" />
<path d="M669.2,71.1 V75.5 L656.1,89.1 M664.6,80.6 V88.1 L650.4,100.2" fill="none" stroke="#1a1a1a" stroke-width="1.3" stroke-linejoin="miter" />
<rect x="623.4" y="68.5" width="12.4" height="14.2" fill="#ffffff"/>
<circle cx="627.6" cy="76.5" r="6.4" fill="#ffffff"/>
<circle cx="627.6" cy="76.5" r="5.4" fill="#f06418"/>
<path d="M622.2,76.5 H633 M627.6,71.1 V81.9" fill="none" stroke="#ffffff" stroke-width="0.9" stroke-linejoin="miter" />
<ellipse cx="627.6" cy="76.5" rx="2.6" ry="5.4" fill="none" stroke="#ffffff" stroke-width="0.8"/>
<path d="M752.6,74.4 H736.3 V100.5 H762.5 V84.4" fill="none" stroke="#1a1a1a" stroke-width="1.3" stroke-linejoin="miter" />
<path d="M736.8,99.8 L744.5,91.5 L748.4,95 L756.5,87.4 L762.5,93.2" fill="none" stroke="#1a1a1a" stroke-width="1.3" stroke-linejoin="miter" />
<circle cx="748.4" cy="82.5" r="1.5" fill="#1a1a1a"/>
<path d="M762.3,69 V80 M756.8,74.5 H767.8" fill="none" stroke="#f07022" stroke-width="1.3" stroke-linejoin="miter" />
<path d="M773.5,74.4 H799.5 V100.5 H773.5 Z" fill="none" stroke="#1a1a1a" stroke-width="1.3" stroke-linejoin="miter" />
<path d="M773.9,99.8 L781.6,91.5 L785.5,95 L793.6,87.4 L799.5,93.2" fill="none" stroke="#1a1a1a" stroke-width="1.3" stroke-linejoin="miter" />
<circle cx="785.5" cy="82.5" r="1.5" fill="#1a1a1a"/>
<path d="M777,69.4 H804.7 V96.6" fill="none" stroke="#1a1a1a" stroke-width="1.3" stroke-linejoin="miter" />
<path d="M839.92,73.59 L840.26,69.42 L845.54,69.42 L845.88,73.59 L848.72,74.76 L851.91,72.06 L855.64,75.79 L852.94,78.98 L854.11,81.82 L858.28,82.16 L858.28,87.44 L854.11,87.78 L852.94,90.62 L855.64,93.81 L851.91,97.54 L848.72,94.84 L845.88,96.01 L845.54,100.18 L840.26,100.18 L839.92,96.01 L837.08,94.84 L833.89,97.54 L830.16,93.81 L832.86,90.62 L831.69,87.78 L827.52,87.44 L827.52,82.16 L831.69,81.82 L832.86,78.98 L830.16,75.79 L833.89,72.06 L837.08,74.76 Z" fill="none" stroke="#1a1a1a" stroke-width="1.3" stroke-linejoin="miter" stroke-linejoin="round"/>
<path d="M838,80.7 L833.6,85 L838,89.3 M848,80.7 L852.4,85 L848,89.3 M845.2,76.6 L840.8,93.2" fill="none" stroke="#1a1a1a" stroke-width="1.15" stroke-linejoin="miter" />
<path d="M875.4,69.3 H906.6 V100.5 H875.4 Z" fill="none" stroke="#1a1a1a" stroke-width="1.3" stroke-linejoin="miter" />
<path d="M883.5,73 V81.8 M879.1,77.4 H887.9 M895,73 L902.8,80.8 M902.8,73 L895,80.8 M879.1,91.5 H887.9 M895.1,88.4 H902.8 M895.1,94.3 H902.8" fill="none" stroke="#f07022" stroke-width="1.1" stroke-linejoin="miter" />
<circle cx="883.5" cy="87.9" r="0.85" fill="#f07022"/><circle cx="883.5" cy="94.9" r="0.85" fill="#f07022"/>
<path d="M931.5,69.3 V100.9 M937.5,69.3 V100.9 M937.5,84.4 H953.8 M937.5,88.5 H953.8" fill="none" stroke="#1a1a1a" stroke-width="1.3" stroke-linejoin="miter" />
<circle cx="956.6" cy="73.8" r="3.9" fill="none" stroke="#f07022" stroke-width="1.3"/>
<path d="M959.4,76.6 L963,80.2" fill="none" stroke="#f07022" stroke-width="1.4" stroke-linejoin="miter" />
<path d="M967.4,69.3 V100.9 M973.5,69.3 V100.9 M973.5,84.4 H989.8 M973.5,88.5 H989.8" fill="none" stroke="#1a1a1a" stroke-width="1.3" stroke-linejoin="miter" />
<path d="M994.7,69.8 V79.6 M990.4,74.1 L994.7,69.8 L999,74.1" fill="none" stroke="#f07022" stroke-width="1.3" stroke-linejoin="miter" />
<path d="M1002.4,70.3 V85.6 M1005.6,70.3 V85.6" fill="none" stroke="#555" stroke-width="0.9" stroke-linejoin="miter" />
<path d="M1005.6,77.5 H1013.7 M1005.6,79.9 H1013.7" fill="none" stroke="#555" stroke-width="0.9" stroke-linejoin="miter" />
<path d="M1013,75.6 L1017.2,71.4 L1018.3,72.5 L1014.1,76.7 Z" fill="none" stroke="#f07022" stroke-width="0.8" stroke-linejoin="miter" />
<path d="M1010,92 V104.3 M1007.8,101.6 L1010,104.3 L1012.2,101.6" fill="none" stroke="#f07022" stroke-width="0.95" stroke-linejoin="miter" />
<path d="M1002.6,104.8 V107.6 H1017.6 V104.8" fill="none" stroke="#555" stroke-width="0.9" stroke-linejoin="miter" />
<path d="M1010,126.4 V114 M1007.8,116.7 L1010,114 L1012.2,116.7" fill="none" stroke="#f8b890" stroke-width="1.1" stroke-linejoin="miter" />
<path d="M1002.6,126.6 V129.4 H1017.6 V126.6" fill="none" stroke="#555" stroke-width="0.9" stroke-linejoin="miter" />
<path d="M1086,79.6 L1100.2,79.6 L1117.7,88.2 V100.4 H1102.8 L1086,92 Z M1102.8,88.2 H1117.7 M1102.8,88.2 V100.4 M1086,79.6 L1102.8,88.2" fill="none" stroke="#1a1a1a" stroke-width="1.3" stroke-linejoin="miter" />
<path d="M1112.7,69.2 V80 M1107.3,74.6 H1118.1" fill="none" stroke="#f07022" stroke-width="1.3" stroke-linejoin="miter" />
<path d="M1122.2,100.4 H1153.7 M1129.5,74.2 V100.4 M1137.4,74.2 V100.4 M1145.6,82.4 V100.4" fill="none" stroke="#1a1a1a" stroke-width="1.3" stroke-linejoin="miter" />
<path d="M1125.3,95.2 L1129.5,99.8 L1133.5,95.2 L1137.4,99.8 L1141.5,95.2 L1145.6,99.8 L1149.8,95.2" fill="none" stroke="#1a1a1a" stroke-width="1.3" stroke-linejoin="miter" />
<path d="M1148.3,69.2 V80 M1142.9,74.6 H1153.7" fill="none" stroke="#f07022" stroke-width="1.3" stroke-linejoin="miter" />
<path d="M1193,74.4 H1177.2 L1186.4,87.3 L1177.2,100.2 H1193" fill="none" stroke="#1a1a1a" stroke-width="1.3" stroke-linejoin="miter" />
<path d="M1203.4,69.2 V80 M1198,74.6 H1208.8" fill="none" stroke="#f07022" stroke-width="1.3" stroke-linejoin="miter" />
<path d="M1257.9,69.4 H1244.5 Q1240.4,69.4 1240.4,73.5 V96.3 Q1240.4,100.4 1244.5,100.4 H1257.5 Q1261.6,100.4 1261.6,96.3 V81.2" fill="none" stroke="#1a1a1a" stroke-width="1.3" stroke-linejoin="miter" />
<circle cx="1245" cy="74" r="0.95" fill="#1a1a1a"/>
<circle cx="1257" cy="74" r="0.95" fill="#1a1a1a"/>
<circle cx="1245" cy="96" r="2.0" fill="#1a1a1a"/>
<circle cx="1257" cy="96" r="2.0" fill="#1a1a1a"/>
<path d="M1266.4,69.2 V80 M1261,74.6 H1271.8" fill="none" stroke="#f07022" stroke-width="1.3" stroke-linejoin="miter" />
<path d="M1306,69.4 H1294.6 L1286.6,77.4 V100.4 H1313.6 V83" fill="none" stroke="#1a1a1a" stroke-width="1.3" stroke-linejoin="miter" />
<path d="M1294.6,69.4 V77.4 H1286.6" fill="none" stroke="#1a1a1a" stroke-width="1.0" stroke-linejoin="miter" />
<text x="1289.6" y="93.8" font-family="Liberation Sans" font-size="14.6" font-weight="bold" fill="#333" textLength="19.8" lengthAdjust="spacingAndGlyphs">DXF</text>
<path d="M1313.4,68.9 V79.6 M1309,75.2 L1313.4,79.6 L1317.8,75.2" fill="none" stroke="#f07022" stroke-width="1.2" stroke-linejoin="miter" />
<text x="75.06" y="114.80" font-family="Liberation Sans" font-size="12" font-weight="normal" font-style="normal" fill="#1a1a1a" textLength="24.18" lengthAdjust="spacingAndGlyphs">New</text>
<text x="108.96" y="114.80" font-family="Liberation Sans" font-size="12" font-weight="normal" font-style="normal" fill="#1a1a1a" textLength="28.58" lengthAdjust="spacingAndGlyphs">Copy</text>
<text x="154.46" y="114.80" font-family="Liberation Sans" font-size="12" font-weight="normal" font-style="normal" fill="#1a1a1a" textLength="29.68" lengthAdjust="spacingAndGlyphs">Undo</text>
<text x="192.06" y="114.80" font-family="Liberation Sans" font-size="12" font-weight="normal" font-style="normal" fill="#bdbdbd" textLength="26.48" lengthAdjust="spacingAndGlyphs">Redo</text>
<text x="229.46" y="114.80" font-family="Liberation Sans" font-size="12" font-weight="normal" font-style="normal" fill="#c8c8c8" textLength="25.08" lengthAdjust="spacingAndGlyphs">Save</text>
<text x="272.96" y="114.80" font-family="Liberation Sans" font-size="12" font-weight="normal" font-style="normal" fill="#1a1a1a" textLength="45.38" lengthAdjust="spacingAndGlyphs">Member</text>
<text x="278.46" y="129.60" font-family="Liberation Sans" font-size="12" font-weight="normal" font-style="normal" fill="#1a1a1a" textLength="34.78" lengthAdjust="spacingAndGlyphs">names</text>
<text x="328.26" y="114.80" font-family="Liberation Sans" font-size="12" font-weight="normal" font-style="normal" fill="#1a1a1a" textLength="20.28" lengthAdjust="spacingAndGlyphs">LCS</text>
<text x="358.16" y="114.80" font-family="Liberation Sans" font-size="12" font-weight="normal" font-style="normal" fill="#1a1a1a" textLength="56.58" lengthAdjust="spacingAndGlyphs">Dimension</text>
<text x="375.16" y="129.60" font-family="Liberation Sans" font-size="12" font-weight="normal" font-style="normal" fill="#1a1a1a" textLength="24.18" lengthAdjust="spacingAndGlyphs">lines</text>
<text x="436.16" y="114.80" font-family="Liberation Sans" font-size="12" font-weight="normal" font-style="normal" fill="#1a1a1a" textLength="20.38" lengthAdjust="spacingAndGlyphs">CSS</text>
<text x="465.96" y="114.80" font-family="Liberation Sans" font-size="12" font-weight="normal" font-style="normal" fill="#1a1a1a" textLength="35.28" lengthAdjust="spacingAndGlyphs">Rebars</text>
<text x="504.96" y="114.80" font-family="Liberation Sans" font-size="12" font-weight="normal" font-style="normal" fill="#b9b9b9" textLength="44.78" lengthAdjust="spacingAndGlyphs">Diagram</text>
<text x="558.96" y="114.80" font-family="Liberation Sans" font-size="12" font-weight="normal" font-style="normal" fill="#1a1a1a" textLength="22.28" lengthAdjust="spacingAndGlyphs">Grid</text>
<text x="606.16" y="114.80" font-family="Liberation Sans" font-size="12" font-weight="normal" font-style="normal" fill="#1a1a1a" textLength="21.88" lengthAdjust="spacingAndGlyphs">Real</text>
<text x="609.76" y="129.60" font-family="Liberation Sans" font-size="12" font-weight="normal" font-style="normal" fill="#1a1a1a" textLength="14.48" lengthAdjust="spacingAndGlyphs">3D</text>
<text x="637.06" y="114.80" font-family="Liberation Sans" font-size="12" font-weight="normal" font-style="normal" fill="#1a1a1a" textLength="33.78" lengthAdjust="spacingAndGlyphs">Model</text>
<text x="678.46" y="83.00" font-family="Liberation Sans" font-size="12" font-weight="normal" font-style="normal" fill="#1a1a1a" textLength="41.88" lengthAdjust="spacingAndGlyphs">2D view</text>
<text x="678.46" y="105.00" font-family="Liberation Sans" font-size="12" font-weight="normal" font-style="normal" fill="#1a1a1a" textLength="41.88" lengthAdjust="spacingAndGlyphs">3D view</text>
<text x="740.16" y="114.80" font-family="Liberation Sans" font-size="12" font-weight="normal" font-style="normal" fill="#1a1a1a" textLength="24.18" lengthAdjust="spacingAndGlyphs">New</text>
<text x="770.96" y="114.80" font-family="Liberation Sans" font-size="12" font-weight="normal" font-style="normal" fill="#1a1a1a" textLength="36.18" lengthAdjust="spacingAndGlyphs">Gallery</text>
<text x="820.46" y="114.80" font-family="Liberation Sans" font-size="12" font-weight="normal" font-style="normal" fill="#1a1a1a" textLength="42.88" lengthAdjust="spacingAndGlyphs">Settings</text>
<text x="866.26" y="114.80" font-family="Liberation Sans" font-size="12" font-weight="normal" font-style="normal" fill="#1a1a1a" textLength="49.28" lengthAdjust="spacingAndGlyphs">Calculate</text>
<text x="929.26" y="114.80" font-family="Liberation Sans" font-size="12" font-weight="normal" font-style="normal" fill="#1a1a1a" textLength="34.08" lengthAdjust="spacingAndGlyphs">Create</text>
<text x="967.16" y="114.80" font-family="Liberation Sans" font-size="12" font-weight="normal" font-style="normal" fill="#1a1a1a" textLength="31.28" lengthAdjust="spacingAndGlyphs">Apply</text>
<text x="1022.16" y="83.00" font-family="Liberation Sans" font-size="12" font-weight="normal" font-style="normal" fill="#1a1a1a" textLength="47.38" lengthAdjust="spacingAndGlyphs">Manager</text>
<text x="1021.76" y="105.00" font-family="Liberation Sans" font-size="12" font-weight="normal" font-style="normal" fill="#1a1a1a" textLength="24.88" lengthAdjust="spacingAndGlyphs">Save</text>
<text x="1022.16" y="127.00" font-family="Liberation Sans" font-size="12" font-weight="normal" font-style="normal" fill="#1a1a1a" textLength="28.98" lengthAdjust="spacingAndGlyphs">Open</text>
<text x="1083.96" y="114.80" font-family="Liberation Sans" font-size="12" font-weight="normal" font-style="normal" fill="#1a1a1a" textLength="34.28" lengthAdjust="spacingAndGlyphs">Model</text>
<text x="1086.96" y="129.60" font-family="Liberation Sans" font-size="12" font-weight="normal" font-style="normal" fill="#1a1a1a" textLength="30.38" lengthAdjust="spacingAndGlyphs">entity</text>
<text x="1124.96" y="114.80" font-family="Liberation Sans" font-size="12" font-weight="normal" font-style="normal" fill="#1a1a1a" textLength="25.88" lengthAdjust="spacingAndGlyphs">Load</text>
<text x="1127.06" y="129.60" font-family="Liberation Sans" font-size="12" font-weight="normal" font-style="normal" fill="#1a1a1a" textLength="23.48" lengthAdjust="spacingAndGlyphs">case</text>
<text x="1157.26" y="114.80" font-family="Liberation Sans" font-size="12" font-weight="normal" font-style="normal" fill="#1a1a1a" textLength="69.58" lengthAdjust="spacingAndGlyphs">Combination</text>
<text x="1239.96" y="114.80" font-family="Liberation Sans" font-size="12" font-weight="normal" font-style="normal" fill="#1a1a1a" textLength="30.58" lengthAdjust="spacingAndGlyphs">Rebar</text>
<text x="1230.76" y="129.60" font-family="Liberation Sans" font-size="12" font-weight="normal" font-style="normal" fill="#1a1a1a" textLength="49.38" lengthAdjust="spacingAndGlyphs">assembly</text>
<text x="1290.86" y="114.80" font-family="Liberation Sans" font-size="12" font-weight="normal" font-style="normal" fill="#1a1a1a" textLength="21.48" lengthAdjust="spacingAndGlyphs">DXF</text>
<text x="1283.86" y="129.60" font-family="Liberation Sans" font-size="12" font-weight="normal" font-style="normal" fill="#1a1a1a" textLength="36.58" lengthAdjust="spacingAndGlyphs">Import</text>
<text x="36.06" y="152.00" font-family="Liberation Sans" font-size="12" font-weight="normal" font-style="normal" fill="#f5b088" textLength="74.48" lengthAdjust="spacingAndGlyphs">Project items</text>
<text x="194.46" y="152.00" font-family="Liberation Sans" font-size="12" font-weight="normal" font-style="normal" fill="#a3a3a3" textLength="23.28" lengthAdjust="spacingAndGlyphs">Data</text>
<text x="326.96" y="152.00" font-family="Liberation Sans" font-size="12" font-weight="normal" font-style="normal" fill="#a3a3a3" textLength="33.18" lengthAdjust="spacingAndGlyphs">Labels</text>
<text x="494.26" y="152.00" font-family="Liberation Sans" font-size="12" font-weight="normal" font-style="normal" fill="#a3a3a3" textLength="27.28" lengthAdjust="spacingAndGlyphs">Draw</text>
<text x="626.96" y="152.00" font-family="Liberation Sans" font-size="12" font-weight="normal" font-style="normal" fill="#a3a3a3" textLength="69.28" lengthAdjust="spacingAndGlyphs">View settings</text>
<text x="750.16" y="152.00" font-family="Liberation Sans" font-size="12" font-weight="normal" font-style="normal" fill="#a3a3a3" textLength="41.98" lengthAdjust="spacingAndGlyphs">Pictures</text>
<text x="838.26" y="152.00" font-family="Liberation Sans" font-size="12" font-weight="normal" font-style="normal" fill="#a3a3a3" textLength="59.48" lengthAdjust="spacingAndGlyphs">Calculation</text>
<text x="974.86" y="152.00" font-family="Liberation Sans" font-size="12" font-weight="normal" font-style="normal" fill="#a3a3a3" textLength="52.48" lengthAdjust="spacingAndGlyphs">Templates</text>
<text x="1191.16" y="152.00" font-family="Liberation Sans" font-size="12" font-weight="normal" font-style="normal" fill="#a3a3a3" textLength="24.18" lengthAdjust="spacingAndGlyphs">New</text>
<rect x="2.6" y="161.6" width="22.8" height="22.8" fill="#f2f2f2" stroke="#a5a5a5" stroke-width="1"/>
<defs><linearGradient id="fitg" x1="0" x2="0" y1="0" y2="1"><stop offset="0" stop-color="#efefef"/><stop offset="1" stop-color="#cfcfcf"/></linearGradient></defs>
<rect x="4.2" y="163.2" width="19.6" height="19.6" fill="url(#fitg)"/>
<path d="M11.0,169.4 L6.8,165.2" stroke="#5a5a5a" stroke-width="1.4"/>
<path d="M6.8,165.2 L10.4,165.2 L6.8,168.8 Z" fill="#5a5a5a"/>
<path d="M17.6,169.4 L21.8,165.2" stroke="#5a5a5a" stroke-width="1.4"/>
<path d="M21.8,165.2 L18.2,165.2 L21.8,168.8 Z" fill="#5a5a5a"/>
<path d="M11.0,176.0 L6.8,180.2" stroke="#5a5a5a" stroke-width="1.4"/>
<path d="M6.8,180.2 L10.4,180.2 L6.8,176.6 Z" fill="#5a5a5a"/>
<path d="M17.6,176.0 L21.8,180.2" stroke="#5a5a5a" stroke-width="1.4"/>
<path d="M21.8,180.2 L18.2,180.2 L21.8,176.6 Z" fill="#5a5a5a"/>
<line x1="34.2" y1="461.5" x2="34.2" y2="544.5" stroke="#a8a8a8" stroke-width="1" stroke-dasharray="1 2.8"/>
<line x1="72.6" y1="461.5" x2="72.6" y2="544.5" stroke="#a8a8a8" stroke-width="1" stroke-dasharray="1 2.8"/>
<line x1="110.9" y1="461.5" x2="110.9" y2="544.5" stroke="#a8a8a8" stroke-width="1" stroke-dasharray="1 2.8"/>
<line x1="149.2" y1="461.5" x2="149.2" y2="544.5" stroke="#a8a8a8" stroke-width="1" stroke-dasharray="1 2.8"/>
<line x1="187.6" y1="461.5" x2="187.6" y2="544.5" stroke="#a8a8a8" stroke-width="1" stroke-dasharray="1 2.8"/>
<line x1="225.9" y1="461.5" x2="225.9" y2="544.5" stroke="#a8a8a8" stroke-width="1" stroke-dasharray="1 2.8"/>
<line x1="264.2" y1="461.5" x2="264.2" y2="544.5" stroke="#a8a8a8" stroke-width="1" stroke-dasharray="1 2.8"/>
<line x1="302.6" y1="461.5" x2="302.6" y2="544.5" stroke="#a8a8a8" stroke-width="1" stroke-dasharray="1 2.8"/>
<line x1="340.9" y1="461.5" x2="340.9" y2="544.5" stroke="#a8a8a8" stroke-width="1" stroke-dasharray="1 2.8"/>
<line x1="379.2" y1="461.5" x2="379.2" y2="544.5" stroke="#a8a8a8" stroke-width="1" stroke-dasharray="1 2.8"/>
<line x1="417.6" y1="461.5" x2="417.6" y2="544.5" stroke="#a8a8a8" stroke-width="1" stroke-dasharray="1 2.8"/>
<line x1="455.9" y1="461.5" x2="455.9" y2="544.5" stroke="#a8a8a8" stroke-width="1" stroke-dasharray="1 2.8"/>
<line x1="494.2" y1="461.5" x2="494.2" y2="544.5" stroke="#a8a8a8" stroke-width="1" stroke-dasharray="1 2.8"/>
<line x1="532.6" y1="461.5" x2="532.6" y2="544.5" stroke="#a8a8a8" stroke-width="1" stroke-dasharray="1 2.8"/>
<line x1="570.9" y1="461.5" x2="570.9" y2="544.5" stroke="#a8a8a8" stroke-width="1" stroke-dasharray="1 2.8"/>
<line x1="609.2" y1="461.5" x2="609.2" y2="544.5" stroke="#a8a8a8" stroke-width="1" stroke-dasharray="1 2.8"/>
<line x1="647.6" y1="461.5" x2="647.6" y2="544.5" stroke="#a8a8a8" stroke-width="1" stroke-dasharray="1 2.8"/>
<line x1="685.9" y1="461.5" x2="685.9" y2="544.5" stroke="#a8a8a8" stroke-width="1" stroke-dasharray="1 2.8"/>
<line x1="724.2" y1="461.5" x2="724.2" y2="544.5" stroke="#a8a8a8" stroke-width="1" stroke-dasharray="1 2.8"/>
<line x1="762.6" y1="461.5" x2="762.6" y2="544.5" stroke="#a8a8a8" stroke-width="1" stroke-dasharray="1 2.8"/>
<line x1="800.9" y1="461.5" x2="800.9" y2="544.5" stroke="#a8a8a8" stroke-width="1" stroke-dasharray="1 2.8"/>
<line x1="839.2" y1="461.5" x2="839.2" y2="544.5" stroke="#a8a8a8" stroke-width="1" stroke-dasharray="1 2.8"/>
<line x1="877.6" y1="461.5" x2="877.6" y2="544.5" stroke="#a8a8a8" stroke-width="1" stroke-dasharray="1 2.8"/>
<line x1="915.9" y1="461.5" x2="915.9" y2="544.5" stroke="#a8a8a8" stroke-width="1" stroke-dasharray="1 2.8"/>
<line x1="954.2" y1="461.5" x2="954.2" y2="544.5" stroke="#a8a8a8" stroke-width="1" stroke-dasharray="1 2.8"/>
<line x1="992.6" y1="461.5" x2="992.6" y2="544.5" stroke="#a8a8a8" stroke-width="1" stroke-dasharray="1 2.8"/>
<line x1="1030.9" y1="461.5" x2="1030.9" y2="544.5" stroke="#a8a8a8" stroke-width="1" stroke-dasharray="1 2.8"/>
<line x1="1069.2" y1="461.5" x2="1069.2" y2="544.5" stroke="#a8a8a8" stroke-width="1" stroke-dasharray="1 2.8"/>
<line x1="1107.6" y1="461.5" x2="1107.6" y2="544.5" stroke="#a8a8a8" stroke-width="1" stroke-dasharray="1 2.8"/>
<line x1="1145.9" y1="461.5" x2="1145.9" y2="544.5" stroke="#a8a8a8" stroke-width="1" stroke-dasharray="1 2.8"/>
<line x1="1184.2" y1="461.5" x2="1184.2" y2="544.5" stroke="#a8a8a8" stroke-width="1" stroke-dasharray="1 2.8"/>
<line x1="1222.6" y1="461.5" x2="1222.6" y2="544.5" stroke="#a8a8a8" stroke-width="1" stroke-dasharray="1 2.8"/>
<line x1="30" y1="483.3" x2="1224" y2="483.3" stroke="#a8a8a8" stroke-width="1" stroke-dasharray="1 2.8"/>
<line x1="30" y1="521.4" x2="1224" y2="521.4" stroke="#a8a8a8" stroke-width="1" stroke-dasharray="1 2.8"/>
<line x1="30" y1="502.4" x2="1224" y2="502.4" stroke="#a8a8a8" stroke-width="1" stroke-dasharray="1 2.8"/>
<line x1="30.8" y1="464.3" x2="1221.5" y2="464.3" stroke="#c4c4c4" stroke-width="1" stroke-dasharray="11.4 11.26"/>
<line x1="30.8" y1="540.5" x2="1221.5" y2="540.5" stroke="#c4c4c4" stroke-width="1" stroke-dasharray="11.4 11.26"/>
<line x1="53.4" y1="465" x2="53.4" y2="476.6" stroke="#c4c4c4" stroke-width="1"/>
<line x1="53.4" y1="533" x2="53.4" y2="544.5" stroke="#c4c4c4" stroke-width="1"/>
<line x1="91.7" y1="465" x2="91.7" y2="476.6" stroke="#c4c4c4" stroke-width="1"/>
<line x1="91.7" y1="533" x2="91.7" y2="544.5" stroke="#c4c4c4" stroke-width="1"/>
<line x1="130.1" y1="465" x2="130.1" y2="476.6" stroke="#c4c4c4" stroke-width="1"/>
<line x1="130.1" y1="533" x2="130.1" y2="544.5" stroke="#c4c4c4" stroke-width="1"/>
<line x1="168.4" y1="465" x2="168.4" y2="476.6" stroke="#c4c4c4" stroke-width="1"/>
<line x1="168.4" y1="533" x2="168.4" y2="544.5" stroke="#c4c4c4" stroke-width="1"/>
<line x1="206.7" y1="465" x2="206.7" y2="476.6" stroke="#c4c4c4" stroke-width="1"/>
<line x1="206.7" y1="533" x2="206.7" y2="544.5" stroke="#c4c4c4" stroke-width="1"/>
<line x1="245.1" y1="465" x2="245.1" y2="476.6" stroke="#c4c4c4" stroke-width="1"/>
<line x1="245.1" y1="533" x2="245.1" y2="544.5" stroke="#c4c4c4" stroke-width="1"/>
<line x1="283.4" y1="465" x2="283.4" y2="476.6" stroke="#c4c4c4" stroke-width="1"/>
<line x1="283.4" y1="533" x2="283.4" y2="544.5" stroke="#c4c4c4" stroke-width="1"/>
<line x1="321.7" y1="465" x2="321.7" y2="476.6" stroke="#c4c4c4" stroke-width="1"/>
<line x1="321.7" y1="533" x2="321.7" y2="544.5" stroke="#c4c4c4" stroke-width="1"/>
<line x1="360.1" y1="465" x2="360.1" y2="476.6" stroke="#c4c4c4" stroke-width="1"/>
<line x1="360.1" y1="533" x2="360.1" y2="544.5" stroke="#c4c4c4" stroke-width="1"/>
<line x1="398.4" y1="465" x2="398.4" y2="476.6" stroke="#c4c4c4" stroke-width="1"/>
<line x1="398.4" y1="533" x2="398.4" y2="544.5" stroke="#c4c4c4" stroke-width="1"/>
<line x1="436.7" y1="465" x2="436.7" y2="476.6" stroke="#c4c4c4" stroke-width="1"/>
<line x1="436.7" y1="533" x2="436.7" y2="544.5" stroke="#c4c4c4" stroke-width="1"/>
<line x1="475.1" y1="465" x2="475.1" y2="476.6" stroke="#c4c4c4" stroke-width="1"/>
<line x1="475.1" y1="533" x2="475.1" y2="544.5" stroke="#c4c4c4" stroke-width="1"/>
<line x1="513.4" y1="465" x2="513.4" y2="476.6" stroke="#c4c4c4" stroke-width="1"/>
<line x1="513.4" y1="533" x2="513.4" y2="544.5" stroke="#c4c4c4" stroke-width="1"/>
<line x1="551.7" y1="465" x2="551.7" y2="476.6" stroke="#c4c4c4" stroke-width="1"/>
<line x1="551.7" y1="533" x2="551.7" y2="544.5" stroke="#c4c4c4" stroke-width="1"/>
<line x1="590.1" y1="465" x2="590.1" y2="476.6" stroke="#c4c4c4" stroke-width="1"/>
<line x1="590.1" y1="533" x2="590.1" y2="544.5" stroke="#c4c4c4" stroke-width="1"/>
<line x1="628.4" y1="465" x2="628.4" y2="476.6" stroke="#c4c4c4" stroke-width="1"/>
<line x1="628.4" y1="533" x2="628.4" y2="544.5" stroke="#c4c4c4" stroke-width="1"/>
<line x1="666.7" y1="465" x2="666.7" y2="476.6" stroke="#c4c4c4" stroke-width="1"/>
<line x1="666.7" y1="533" x2="666.7" y2="544.5" stroke="#c4c4c4" stroke-width="1"/>
<line x1="705.1" y1="465" x2="705.1" y2="476.6" stroke="#c4c4c4" stroke-width="1"/>
<line x1="705.1" y1="533" x2="705.1" y2="544.5" stroke="#c4c4c4" stroke-width="1"/>
<line x1="743.4" y1="465" x2="743.4" y2="476.6" stroke="#c4c4c4" stroke-width="1"/>
<line x1="743.4" y1="533" x2="743.4" y2="544.5" stroke="#c4c4c4" stroke-width="1"/>
<line x1="781.7" y1="465" x2="781.7" y2="476.6" stroke="#c4c4c4" stroke-width="1"/>
<line x1="781.7" y1="533" x2="781.7" y2="544.5" stroke="#c4c4c4" stroke-width="1"/>
<line x1="820.1" y1="465" x2="820.1" y2="476.6" stroke="#c4c4c4" stroke-width="1"/>
<line x1="820.1" y1="533" x2="820.1" y2="544.5" stroke="#c4c4c4" stroke-width="1"/>
<line x1="858.4" y1="465" x2="858.4" y2="476.6" stroke="#c4c4c4" stroke-width="1"/>
<line x1="858.4" y1="533" x2="858.4" y2="544.5" stroke="#c4c4c4" stroke-width="1"/>
<line x1="896.7" y1="465" x2="896.7" y2="476.6" stroke="#c4c4c4" stroke-width="1"/>
<line x1="896.7" y1="533" x2="896.7" y2="544.5" stroke="#c4c4c4" stroke-width="1"/>
<line x1="935.1" y1="465" x2="935.1" y2="476.6" stroke="#c4c4c4" stroke-width="1"/>
<line x1="935.1" y1="533" x2="935.1" y2="544.5" stroke="#c4c4c4" stroke-width="1"/>
<line x1="973.4" y1="465" x2="973.4" y2="476.6" stroke="#c4c4c4" stroke-width="1"/>
<line x1="973.4" y1="533" x2="973.4" y2="544.5" stroke="#c4c4c4" stroke-width="1"/>
<line x1="1011.7" y1="465" x2="1011.7" y2="476.6" stroke="#c4c4c4" stroke-width="1"/>
<line x1="1011.7" y1="533" x2="1011.7" y2="544.5" stroke="#c4c4c4" stroke-width="1"/>
<line x1="1050.1" y1="465" x2="1050.1" y2="476.6" stroke="#c4c4c4" stroke-width="1"/>
<line x1="1050.1" y1="533" x2="1050.1" y2="544.5" stroke="#c4c4c4" stroke-width="1"/>
<line x1="1088.4" y1="465" x2="1088.4" y2="476.6" stroke="#c4c4c4" stroke-width="1"/>
<line x1="1088.4" y1="533" x2="1088.4" y2="544.5" stroke="#c4c4c4" stroke-width="1"/>
<line x1="1126.7" y1="465" x2="1126.7" y2="476.6" stroke="#c4c4c4" stroke-width="1"/>
<line x1="1126.7" y1="533" x2="1126.7" y2="544.5" stroke="#c4c4c4" stroke-width="1"/>
<line x1="1165.1" y1="465" x2="1165.1" y2="476.6" stroke="#c4c4c4" stroke-width="1"/>
<line x1="1165.1" y1="533" x2="1165.1" y2="544.5" stroke="#c4c4c4" stroke-width="1"/>
<line x1="1203.4" y1="465" x2="1203.4" y2="476.6" stroke="#c4c4c4" stroke-width="1"/>
<line x1="1203.4" y1="533" x2="1203.4" y2="544.5" stroke="#c4c4c4" stroke-width="1"/>
<rect x="53.5" y="482.2" width="1150.3" height="45.9" fill="#c8c8c8" stroke="#f06a0e" stroke-width="2"/>
<rect x="54.5" y="489" width="1148.5" height="2" fill="#000"/>
<line x1="54" y1="502.4" x2="1200" y2="502.4" stroke="#f56a0c" stroke-width="2.2" stroke-dasharray="12.2 4.3 1.6 4.55"/>
<line x1="30" y1="502.4" x2="42" y2="502.4" stroke="#333" stroke-width="1"/>
<path d="M53.4,457 L57.2,475 L53.4,474 L49.6,475 Z" fill="#000"/>
<line x1="53.4" y1="474" x2="53.4" y2="477" stroke="#000" stroke-width="1"/>
<text x="49.23" y="453.00" font-family="Liberation Sans" font-size="12.6" font-weight="normal" font-style="normal" fill="#111" textLength="7.43" lengthAdjust="spacingAndGlyphs">z</text>
<path d="M1229.8,502.4 L1211.7,498.6 L1213,502.4 L1211.7,506.3 Z" fill="#000"/>
<line x1="1209" y1="502.4" x2="1213" y2="502.4" stroke="#000" stroke-width="1"/>
<text x="1230.43" y="503.00" font-family="Liberation Sans" font-size="12.6" font-weight="normal" font-style="normal" fill="#111" textLength="7.33" lengthAdjust="spacingAndGlyphs">x</text>
<text x="11.81" y="467.40" font-family="Liberation Sans" font-size="8.7" font-weight="normal" font-style="normal" fill="#222" textLength="18.28" lengthAdjust="spacingAndGlyphs">1.00</text>
<text x="11.81" y="505.70" font-family="Liberation Sans" font-size="8.7" font-weight="normal" font-style="normal" fill="#222" textLength="18.28" lengthAdjust="spacingAndGlyphs">0.00</text>
<text x="8.61" y="544.00" font-family="Liberation Sans" font-size="8.7" font-weight="normal" font-style="normal" fill="#222" textLength="21.48" lengthAdjust="spacingAndGlyphs">-1.00</text>
<text x="44.36" y="552.70" font-family="Liberation Sans" font-size="8.7" font-weight="normal" font-style="normal" fill="#222" textLength="18.08" lengthAdjust="spacingAndGlyphs">0.00</text>
<text x="82.69" y="552.70" font-family="Liberation Sans" font-size="8.7" font-weight="normal" font-style="normal" fill="#222" textLength="18.08" lengthAdjust="spacingAndGlyphs">1.00</text>
<text x="121.02" y="552.70" font-family="Liberation Sans" font-size="8.7" font-weight="normal" font-style="normal" fill="#222" textLength="18.08" lengthAdjust="spacingAndGlyphs">2.00</text>
<text x="159.36" y="552.70" font-family="Liberation Sans" font-size="8.7" font-weight="normal" font-style="normal" fill="#222" textLength="18.08" lengthAdjust="spacingAndGlyphs">3.00</text>
<text x="197.69" y="552.70" font-family="Liberation Sans" font-size="8.7" font-weight="normal" font-style="normal" fill="#222" textLength="18.08" lengthAdjust="spacingAndGlyphs">4.00</text>
<text x="236.02" y="552.70" font-family="Liberation Sans" font-size="8.7" font-weight="normal" font-style="normal" fill="#222" textLength="18.08" lengthAdjust="spacingAndGlyphs">5.00</text>
<text x="274.36" y="552.70" font-family="Liberation Sans" font-size="8.7" font-weight="normal" font-style="normal" fill="#222" textLength="18.08" lengthAdjust="spacingAndGlyphs">6.00</text>
<text x="312.69" y="552.70" font-family="Liberation Sans" font-size="8.7" font-weight="normal" font-style="normal" fill="#222" textLength="18.08" lengthAdjust="spacingAndGlyphs">7.00</text>
<text x="351.02" y="552.70" font-family="Liberation Sans" font-size="8.7" font-weight="normal" font-style="normal" fill="#222" textLength="18.08" lengthAdjust="spacingAndGlyphs">8.00</text>
<text x="389.36" y="552.70" font-family="Liberation Sans" font-size="8.7" font-weight="normal" font-style="normal" fill="#222" textLength="18.08" lengthAdjust="spacingAndGlyphs">9.00</text>
<text x="424.94" y="552.70" font-family="Liberation Sans" font-size="8.7" font-weight="normal" font-style="normal" fill="#222" textLength="23.58" lengthAdjust="spacingAndGlyphs">10.00</text>
<text x="463.27" y="552.70" font-family="Liberation Sans" font-size="8.7" font-weight="normal" font-style="normal" fill="#222" textLength="23.58" lengthAdjust="spacingAndGlyphs">11.00</text>
<text x="501.60" y="552.70" font-family="Liberation Sans" font-size="8.7" font-weight="normal" font-style="normal" fill="#222" textLength="23.58" lengthAdjust="spacingAndGlyphs">12.00</text>
<text x="539.94" y="552.70" font-family="Liberation Sans" font-size="8.7" font-weight="normal" font-style="normal" fill="#222" textLength="23.58" lengthAdjust="spacingAndGlyphs">13.00</text>
<text x="578.27" y="552.70" font-family="Liberation Sans" font-size="8.7" font-weight="normal" font-style="normal" fill="#222" textLength="23.58" lengthAdjust="spacingAndGlyphs">14.00</text>
<text x="616.60" y="552.70" font-family="Liberation Sans" font-size="8.7" font-weight="normal" font-style="normal" fill="#222" textLength="23.58" lengthAdjust="spacingAndGlyphs">15.00</text>
<text x="654.94" y="552.70" font-family="Liberation Sans" font-size="8.7" font-weight="normal" font-style="normal" fill="#222" textLength="23.58" lengthAdjust="spacingAndGlyphs">16.00</text>
<text x="693.27" y="552.70" font-family="Liberation Sans" font-size="8.7" font-weight="normal" font-style="normal" fill="#222" textLength="23.58" lengthAdjust="spacingAndGlyphs">17.00</text>
<text x="731.60" y="552.70" font-family="Liberation Sans" font-size="8.7" font-weight="normal" font-style="normal" fill="#222" textLength="23.58" lengthAdjust="spacingAndGlyphs">18.00</text>
<text x="769.94" y="552.70" font-family="Liberation Sans" font-size="8.7" font-weight="normal" font-style="normal" fill="#222" textLength="23.58" lengthAdjust="spacingAndGlyphs">19.00</text>
<text x="808.27" y="552.70" font-family="Liberation Sans" font-size="8.7" font-weight="normal" font-style="normal" fill="#222" textLength="23.58" lengthAdjust="spacingAndGlyphs">20.00</text>
<text x="846.60" y="552.70" font-family="Liberation Sans" font-size="8.7" font-weight="normal" font-style="normal" fill="#222" textLength="23.58" lengthAdjust="spacingAndGlyphs">21.00</text>
<text x="884.93" y="552.70" font-family="Liberation Sans" font-size="8.7" font-weight="normal" font-style="normal" fill="#222" textLength="23.58" lengthAdjust="spacingAndGlyphs">22.00</text>
<text x="923.27" y="552.70" font-family="Liberation Sans" font-size="8.7" font-weight="normal" font-style="normal" fill="#222" textLength="23.58" lengthAdjust="spacingAndGlyphs">23.00</text>
<text x="961.60" y="552.70" font-family="Liberation Sans" font-size="8.7" font-weight="normal" font-style="normal" fill="#222" textLength="23.58" lengthAdjust="spacingAndGlyphs">24.00</text>
<text x="999.93" y="552.70" font-family="Liberation Sans" font-size="8.7" font-weight="normal" font-style="normal" fill="#222" textLength="23.58" lengthAdjust="spacingAndGlyphs">25.00</text>
<text x="1038.27" y="552.70" font-family="Liberation Sans" font-size="8.7" font-weight="normal" font-style="normal" fill="#222" textLength="23.58" lengthAdjust="spacingAndGlyphs">26.00</text>
<text x="1076.60" y="552.70" font-family="Liberation Sans" font-size="8.7" font-weight="normal" font-style="normal" fill="#222" textLength="23.58" lengthAdjust="spacingAndGlyphs">27.00</text>
<text x="1114.93" y="552.70" font-family="Liberation Sans" font-size="8.7" font-weight="normal" font-style="normal" fill="#222" textLength="23.58" lengthAdjust="spacingAndGlyphs">28.00</text>
<text x="1153.27" y="552.70" font-family="Liberation Sans" font-size="8.7" font-weight="normal" font-style="normal" fill="#222" textLength="23.58" lengthAdjust="spacingAndGlyphs">29.00</text>
<text x="1191.60" y="552.70" font-family="Liberation Sans" font-size="8.7" font-weight="normal" font-style="normal" fill="#222" textLength="23.58" lengthAdjust="spacingAndGlyphs">30.00</text>
<rect x="52.5" y="529" width="13.3" height="1.5" fill="#6f7f8f"/>
<rect x="1192" y="529" width="13.3" height="1.5" fill="#6f7f8f"/>
<path d="M59,530.3 L88.4,570.4 H29.9 Z" fill="none" stroke="#0f0f6e" stroke-width="2" stroke-linejoin="miter"/>
<path d="M1198,529.7 L1227.4,570.4 H1168.8 Z" fill="none" stroke="#0f0f6e" stroke-width="2"/>
<line x1="1168.8" y1="578.4" x2="1227.4" y2="578.4" stroke="#0f0f6e" stroke-width="2"/>
<rect x="1259.4" y="439.7" width="124.2" height="20.7" fill="#f07022"/>
<path d="M1245.5,453.7 L1251.3,447.9 L1251.3,453.7 Z" fill="#404040"/>
<text x="1264.05" y="453.90" font-family="Liberation Sans" font-size="12.2" font-weight="bold" font-style="normal" fill="#ffffff" textLength="60.00" lengthAdjust="spacingAndGlyphs">Load cases</text>
<path d="M1205.0,299.6 L1210.8,293.8 L1210.8,299.6 Z" fill="#404040"/>
<text x="1224.45" y="299.80" font-family="Liberation Sans" font-size="12.2" font-weight="bold" font-style="normal" fill="#333333" textLength="33.50" lengthAdjust="spacingAndGlyphs">DRM1</text>
<path d="M1225.0,321.7 L1230.8,315.9 L1230.8,321.7 Z" fill="#404040"/>
<text x="1244.45" y="321.90" font-family="Liberation Sans" font-size="12.2" font-weight="bold" font-style="normal" fill="#333333" textLength="53.20" lengthAdjust="spacingAndGlyphs">Members</text>
<text x="1243.45" y="343.80" font-family="Liberation Sans" font-size="12.2" font-weight="normal" font-style="normal" fill="#444444" textLength="15.70" lengthAdjust="spacingAndGlyphs">M1</text>
<path d="M1225.0,365.7 L1230.8,359.9 L1230.8,365.7 Z" fill="#404040"/>
<text x="1244.45" y="365.90" font-family="Liberation Sans" font-size="12.2" font-weight="bold" font-style="normal" fill="#333333" textLength="52.10" lengthAdjust="spacingAndGlyphs">Supports</text>
<text x="1243.45" y="387.80" font-family="Liberation Sans" font-size="12.2" font-weight="normal" font-style="normal" fill="#444444" textLength="17.10" lengthAdjust="spacingAndGlyphs">PS1</text>
<text x="1243.45" y="409.80" font-family="Liberation Sans" font-size="12.2" font-weight="normal" font-style="normal" fill="#444444" textLength="19.60" lengthAdjust="spacingAndGlyphs">PS2</text>
<path d="M1225.0,431.7 L1230.8,425.9 L1230.8,431.7 Z" fill="#404040"/>
<text x="1244.45" y="431.90" font-family="Liberation Sans" font-size="12.2" font-weight="bold" font-style="normal" fill="#333333" textLength="115.10" lengthAdjust="spacingAndGlyphs">Loads and Combin...</text>
<text x="1262.45" y="475.80" font-family="Liberation Sans" font-size="12.2" font-weight="normal" font-style="normal" fill="#444444" textLength="18.40" lengthAdjust="spacingAndGlyphs">SW</text>
<text x="1262.45" y="497.80" font-family="Liberation Sans" font-size="12.2" font-weight="normal" font-style="normal" fill="#444444" textLength="7.60" lengthAdjust="spacingAndGlyphs">P</text>
<text x="1262.45" y="519.80" font-family="Liberation Sans" font-size="12.2" font-weight="normal" font-style="normal" fill="#444444" textLength="7.60" lengthAdjust="spacingAndGlyphs">g</text>
<text x="1262.45" y="541.80" font-family="Liberation Sans" font-size="12.2" font-weight="normal" font-style="normal" fill="#444444" textLength="7.90" lengthAdjust="spacingAndGlyphs">q</text>
<path d="M1245.0,563.8 L1250.8,558.0 L1250.8,563.8 Z" fill="#404040"/>
<text x="1263.95" y="564.00" font-family="Liberation Sans" font-size="12.2" font-weight="bold" font-style="normal" fill="#333333" textLength="103.70" lengthAdjust="spacingAndGlyphs">ULS Combinations</text>
<text x="1285.55" y="588.00" font-family="Liberation Sans" font-size="12.2" font-weight="normal" font-style="normal" fill="#444444" textLength="13.70" lengthAdjust="spacingAndGlyphs">C1</text>
<path d="M1245.0,607.8 L1250.8,602.0 L1250.8,607.8 Z" fill="#404040"/>
<text x="1263.45" y="608.00" font-family="Liberation Sans" font-size="12.2" font-weight="bold" font-style="normal" fill="#333333" textLength="102.30" lengthAdjust="spacingAndGlyphs">SLS Combinations</text>
<text x="1285.55" y="632.10" font-family="Liberation Sans" font-size="12.2" font-weight="normal" font-style="normal" fill="#444444" textLength="14.50" lengthAdjust="spacingAndGlyphs">C2</text>
<path d="M1225.0,651.3 L1230.8,645.5 L1230.8,651.3 Z" fill="#404040"/>
<text x="1244.25" y="651.50" font-family="Liberation Sans" font-size="12.2" font-weight="bold" font-style="normal" fill="#333333" textLength="88.20" lengthAdjust="spacingAndGlyphs">Reinforcements</text>
<path d="M1245.0,673.2 L1250.8,667.4 L1250.8,673.2 Z" fill="#404040"/>
<text x="1264.35" y="673.40" font-family="Liberation Sans" font-size="12.2" font-weight="bold" font-style="normal" fill="#333333" textLength="118.70" lengthAdjust="spacingAndGlyphs">Prestressing Tendons</text>
<text x="1286.25" y="698.10" font-family="Liberation Sans" font-size="12.2" font-weight="normal" font-style="normal" fill="#444444" textLength="18.30" lengthAdjust="spacingAndGlyphs">PT1</text>
<text x="1286.25" y="719.60" font-family="Liberation Sans" font-size="12.2" font-weight="normal" font-style="normal" fill="#444444" textLength="19.30" lengthAdjust="spacingAndGlyphs">PT2</text>
<path d="M1245.0,739.5 L1250.8,733.7 L1250.8,739.5 Z" fill="#404040"/>
<text x="1263.85" y="739.70" font-family="Liberation Sans" font-size="12.2" font-weight="bold" font-style="normal" fill="#333333" textLength="33.40" lengthAdjust="spacingAndGlyphs">Cages</text>
<text x="1285.75" y="763.80" font-family="Liberation Sans" font-size="12.2" font-weight="normal" font-style="normal" fill="#444444" textLength="18.40" lengthAdjust="spacingAndGlyphs">ST1</text>
<rect x="1264.3" y="578.2" width="10.5" height="10.5" rx="2" fill="#e2e2e2"/>
<path d="M1266.8,582.3000000000001 L1270,586.8000000000001 L1277.4,577.4000000000001" fill="none" stroke="#f7901e" stroke-width="1.8" stroke-linecap="round" stroke-linejoin="round"/>
<rect x="1264.3" y="622.1" width="10.5" height="10.5" rx="2" fill="#e2e2e2"/>
<path d="M1266.8,626.2 L1270,630.7 L1277.4,621.3000000000001" fill="none" stroke="#f7901e" stroke-width="1.8" stroke-linecap="round" stroke-linejoin="round"/>
<rect x="1264.3" y="688.6" width="10.5" height="10.5" rx="2" fill="#e2e2e2"/>
<rect x="1264.3" y="710" width="10.5" height="10.5" rx="2" fill="#e2e2e2"/>
<path d="M1266.8,714.1 L1270,718.6 L1277.4,709.2" fill="none" stroke="#f7901e" stroke-width="1.8" stroke-linecap="round" stroke-linejoin="round"/>
<rect x="1264.3" y="754.3" width="10.5" height="10.5" rx="2" fill="#e2e2e2"/>
<path d="M1266.8,758.4 L1270,762.9 L1277.4,753.5" fill="none" stroke="#f7901e" stroke-width="1.8" stroke-linecap="round" stroke-linejoin="round"/>
<rect x="1403.5" y="157.7" width="5.4" height="621" fill="#c8c8c8"/>
<rect x="1408.9" y="157.8" width="507.1" height="24.8" fill="#f07022"/>
<text x="1419.14" y="175.00" font-family="Liberation Sans" font-size="12.4" font-weight="bold" font-style="normal" fill="#ffffff" textLength="58.42" lengthAdjust="spacingAndGlyphs">Load cases</text>
<text x="1694.84" y="175.00" font-family="Liberation Sans" font-size="12.4" font-weight="bold" font-style="normal" fill="#ffffff" textLength="26.72" lengthAdjust="spacingAndGlyphs">New</text>
<text x="1740.24" y="175.00" font-family="Liberation Sans" font-size="12.4" font-weight="bold" font-style="normal" fill="#ffffff" textLength="28.12" lengthAdjust="spacingAndGlyphs">Copy</text>
<text x="1787.44" y="175.00" font-family="Liberation Sans" font-size="12.4" font-weight="bold" font-style="normal" fill="#ffffff" textLength="39.12" lengthAdjust="spacingAndGlyphs">Delete</text>
<text x="1845.44" y="175.00" font-family="Liberation Sans" font-size="12.4" font-weight="bold" font-style="normal" fill="#ffffff" textLength="56.12" lengthAdjust="spacingAndGlyphs">Delete All</text>
<rect x="1424.5" y="198.5" width="197.5" height="149.5" fill="#ffffff" stroke="#a4a4a4" stroke-width="1"/>
<rect x="1425" y="199" width="196.5" height="32" fill="#efefef"/>
<rect x="1425" y="232" width="196.5" height="28" fill="#efefef"/>
<rect x="1425.5" y="232.5" width="98" height="27" fill="#e9e9e9" stroke="#ef7a2c" stroke-width="1"/>
<rect x="1425" y="231" width="196.5" height="1" fill="#b4b4b4"/>
<rect x="1425" y="260" width="196.5" height="1" fill="#b4b4b4"/>
<rect x="1425" y="289" width="196.5" height="1" fill="#b4b4b4"/>
<rect x="1425" y="318" width="196.5" height="1" fill="#b4b4b4"/>
<rect x="1524" y="199" width="1" height="149" fill="#b4b4b4"/>
<rect x="1621" y="199" width="1.6" height="149" fill="#a0a0a0"/>
<text x="1428.85" y="220.00" font-family="Liberation Sans" font-size="12.2" font-weight="bold" font-style="normal" fill="#333" textLength="33.50" lengthAdjust="spacingAndGlyphs">Name</text>
<text x="1529.25" y="220.00" font-family="Liberation Sans" font-size="12.2" font-weight="bold" font-style="normal" fill="#333" textLength="26.30" lengthAdjust="spacingAndGlyphs">Type</text>
<path d="M1505.6,211.2 H1514.2 L1511,215.4 V219.8 L1508.8,218.4 V215.4 Z" fill="#333"/>
<text x="1428.85" y="250.70" font-family="Liberation Sans" font-size="12.2" font-weight="normal" font-style="normal" fill="#444" textLength="17.50" lengthAdjust="spacingAndGlyphs">SW</text>
<rect x="1529.3" y="234.3" width="88.2" height="25.3" fill="#ffffff" stroke="#acacac" stroke-width="1"/>
<rect x="1529.3" y="258.6" width="88.2" height="1.6" fill="#9a9a9a"/>
<text x="1534.15" y="251.80" font-family="Liberation Sans" font-size="12.2" font-weight="normal" font-style="normal" fill="#444" textLength="63.00" lengthAdjust="spacingAndGlyphs">Prestressing</text>
<path d="M1606.2,244.4 H1612 L1609.1,248.5 Z" fill="#333"/>
<text x="1428.85" y="279.80" font-family="Liberation Sans" font-size="12.2" font-weight="normal" font-style="normal" fill="#444" textLength="7.70" lengthAdjust="spacingAndGlyphs">P</text>
<rect x="1529.3" y="263.4" width="88.2" height="25.3" fill="#ffffff" stroke="#acacac" stroke-width="1"/>
<rect x="1529.3" y="287.7" width="88.2" height="1.6" fill="#9a9a9a"/>
<text x="1534.15" y="280.90" font-family="Liberation Sans" font-size="12.2" font-weight="normal" font-style="normal" fill="#444" textLength="63.00" lengthAdjust="spacingAndGlyphs">Prestressing</text>
<path d="M1606.2,273.5 H1612 L1609.1,277.6 Z" fill="#333"/>
<text x="1428.85" y="308.90" font-family="Liberation Sans" font-size="12.2" font-weight="normal" font-style="normal" fill="#444" textLength="7.90" lengthAdjust="spacingAndGlyphs">g</text>
<rect x="1529.3" y="292.5" width="88.2" height="25.3" fill="#ffffff" stroke="#acacac" stroke-width="1"/>
<rect x="1529.3" y="316.8" width="88.2" height="1.6" fill="#9a9a9a"/>
<text x="1534.15" y="310.00" font-family="Liberation Sans" font-size="12.2" font-weight="normal" font-style="normal" fill="#444" textLength="57.60" lengthAdjust="spacingAndGlyphs">Permanent</text>
<path d="M1606.2,302.6 H1612 L1609.1,306.7 Z" fill="#333"/>
<text x="1428.85" y="338.00" font-family="Liberation Sans" font-size="12.2" font-weight="normal" font-style="normal" fill="#444" textLength="7.90" lengthAdjust="spacingAndGlyphs">q</text>
<rect x="1529.3" y="321.6" width="88.2" height="25.3" fill="#ffffff" stroke="#acacac" stroke-width="1"/>
<rect x="1529.3" y="345.9" width="88.2" height="1.6" fill="#9a9a9a"/>
<text x="1534.15" y="339.10" font-family="Liberation Sans" font-size="12.2" font-weight="normal" font-style="normal" fill="#444" textLength="42.10" lengthAdjust="spacingAndGlyphs">Variable</text>
<path d="M1606.2,331.7 H1612 L1609.1,335.8 Z" fill="#333"/>
<rect x="1420.1" y="194" width="206.7" height="158" rx="11" fill="none" stroke="#ff0000" stroke-width="4"/>
</svg>
</body></html>
